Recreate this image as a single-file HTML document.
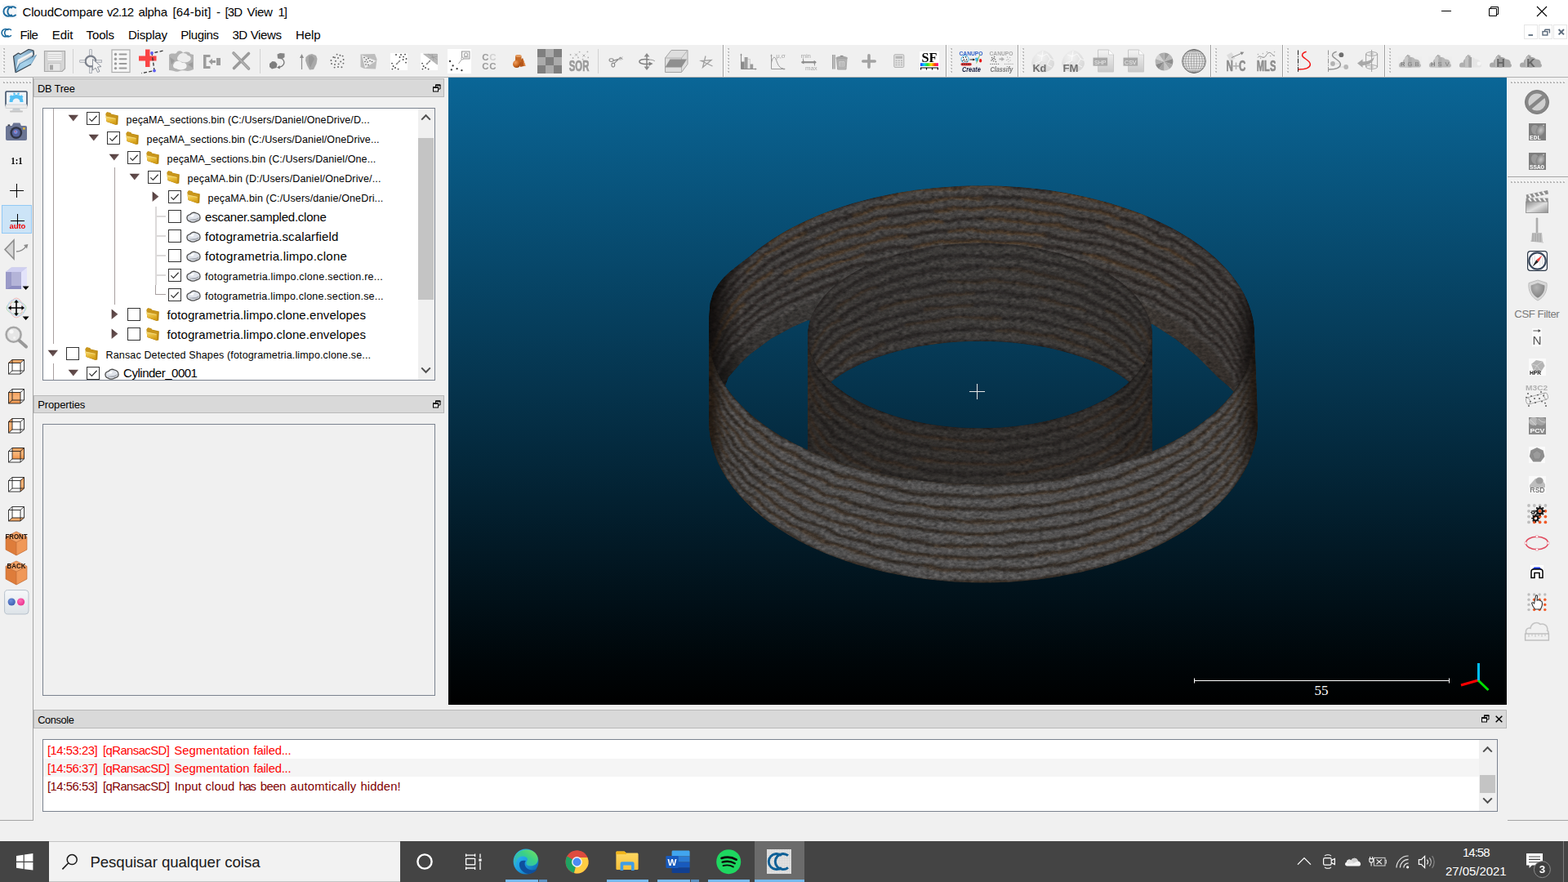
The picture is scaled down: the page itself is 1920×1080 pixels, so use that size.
<!DOCTYPE html>
<html lang="en"><head><meta charset="utf-8"><title>CloudCompare v2.12 alpha [64-bit] - [3D View 1]</title>
<style>
*{box-sizing:border-box;margin:0;padding:0}
html,body{width:1920px;height:1080px;overflow:hidden;background:#f0f0f0;font-family:"Liberation Sans",sans-serif;color:#000}
.t{position:absolute;white-space:pre;line-height:normal}
.a{position:absolute}
.w{position:absolute;left:0;top:0;width:0;height:0}
svg{position:absolute;overflow:visible}
</style></head>
<body>
<!-- sec_chrome -->
<div class="a" style="left:0;top:0;width:1920px;height:55px;background:#fff"></div>
<div class="w"><span class="t" style="left:27.50px;top:6.42px;font-size:15px;letter-spacing:-0.17px;">CloudCompare</span> <span class="t" style="left:131.00px;top:6.42px;font-size:15px;letter-spacing:-0.92px;">v2.12</span> <span class="t" style="left:169.50px;top:6.42px;font-size:15px;letter-spacing:-0.30px;">alpha</span> <span class="t" style="left:211.50px;top:6.42px;font-size:15px;letter-spacing:0.16px;">[64-bit]</span> <span class="t" style="left:265.00px;top:6.42px;font-size:15px;">-</span> <span class="t" style="left:275.60px;top:6.42px;font-size:15px;letter-spacing:-0.97px;">[3D</span> <span class="t" style="left:302.50px;top:6.42px;font-size:15px;letter-spacing:-0.34px;">View</span> <span class="t" style="left:340.60px;top:6.42px;font-size:15px;letter-spacing:-1.20px;">1]</span></div>
<div class="t" style="left:24.40px;top:34.42px;font-size:15px;letter-spacing:-0.55px;">File</div>
<div class="t" style="left:63.75px;top:34.42px;font-size:15px;letter-spacing:-0.06px;">Edit</div>
<div class="t" style="left:105.60px;top:34.42px;font-size:15px;letter-spacing:-0.15px;">Tools</div>
<div class="t" style="left:156.90px;top:34.42px;font-size:15px;letter-spacing:-0.18px;">Display</div>
<div class="t" style="left:221.25px;top:34.42px;font-size:15px;letter-spacing:-0.41px;">Plugins</div>
<div class="t" style="left:284.40px;top:34.42px;font-size:15px;letter-spacing:-0.36px;">3D Views</div>
<div class="t" style="left:362.00px;top:34.42px;font-size:15px;letter-spacing:-0.12px;">Help</div>
<div class="a" style="left:0;top:94px;width:1920px;height:1px;background:#b0b0b0"></div>
<!-- sec_toolbar -->
<svg width="0" height="0"><defs>
<linearGradient id="tfb" x1="0" y1="1" x2="1" y2="0"><stop offset="0" stop-color="#8fc4e4"/><stop offset="0.5" stop-color="#a8d2ea"/><stop offset="1" stop-color="#86b8d8"/></linearGradient>
<linearGradient id="tfk" x1="0" y1="0" x2="1" y2="0"><stop offset="0" stop-color="#7ea9c6"/><stop offset="0.4" stop-color="#a9cde4"/><stop offset="1" stop-color="#6f97b4"/></linearGradient>
<linearGradient id="tgr" x1="0" y1="0" x2="0" y2="1"><stop offset="0" stop-color="#f4f4f4"/><stop offset="1" stop-color="#c9c9c9"/></linearGradient>
<linearGradient id="tgd" x1="0" y1="0" x2="1" y2="0"><stop offset="0" stop-color="#8c8c8c"/><stop offset="0.5" stop-color="#c8c8c8"/><stop offset="1" stop-color="#9a9a9a"/></linearGradient>
<linearGradient id="trb" x1="0" y1="0" x2="1" y2="0"><stop offset="0" stop-color="#1030ff"/><stop offset="0.2" stop-color="#00d0ff"/><stop offset="0.4" stop-color="#20e020"/><stop offset="0.6" stop-color="#ffe000"/><stop offset="0.8" stop-color="#ff4000"/><stop offset="1" stop-color="#ff00a0"/></linearGradient>
<radialGradient id="tor" cx="0.35" cy="0.3" r="0.8"><stop offset="0" stop-color="#f0a060"/><stop offset="0.6" stop-color="#c8641e"/><stop offset="1" stop-color="#8a3c0a"/></radialGradient>
<radialGradient id="tkd" cx="0.4" cy="0.3" r="0.8"><stop offset="0" stop-color="#f2f2f2"/><stop offset="1" stop-color="#d4d4d4"/></radialGradient>
</defs></svg>
<svg style="left:3px;top:59px" width="4" height="32" viewBox="0 0 4 32"><rect x="1" y="0" width="2" height="2" fill="#bcbcbc"/><rect x="0" y="1" width="1.4" height="1.4" fill="#fff"/><rect x="1" y="4" width="2" height="2" fill="#bcbcbc"/><rect x="0" y="5" width="1.4" height="1.4" fill="#fff"/><rect x="1" y="8" width="2" height="2" fill="#bcbcbc"/><rect x="0" y="9" width="1.4" height="1.4" fill="#fff"/><rect x="1" y="12" width="2" height="2" fill="#bcbcbc"/><rect x="0" y="13" width="1.4" height="1.4" fill="#fff"/><rect x="1" y="16" width="2" height="2" fill="#bcbcbc"/><rect x="0" y="17" width="1.4" height="1.4" fill="#fff"/><rect x="1" y="20" width="2" height="2" fill="#bcbcbc"/><rect x="0" y="21" width="1.4" height="1.4" fill="#fff"/><rect x="1" y="24" width="2" height="2" fill="#bcbcbc"/><rect x="0" y="25" width="1.4" height="1.4" fill="#fff"/><rect x="1" y="28" width="2" height="2" fill="#bcbcbc"/><rect x="0" y="29" width="1.4" height="1.4" fill="#fff"/></svg>
<div class="a" style="left:89px;top:60px;width:1px;height:30px;background:#d2d2d2"></div>
<div class="a" style="left:318px;top:60px;width:1px;height:30px;background:#d2d2d2"></div>
<div class="a" style="left:732px;top:60px;width:1px;height:30px;background:#d2d2d2"></div>
<div class="a" style="left:885px;top:55px;width:1px;height:39px;background:#a0a0a0"></div><div class="a" style="left:886px;top:55px;width:1px;height:39px;background:#fff"></div>
<svg style="left:890px;top:59px" width="4" height="32" viewBox="0 0 4 32"><rect x="1" y="0" width="2" height="2" fill="#bcbcbc"/><rect x="0" y="1" width="1.4" height="1.4" fill="#fff"/><rect x="1" y="4" width="2" height="2" fill="#bcbcbc"/><rect x="0" y="5" width="1.4" height="1.4" fill="#fff"/><rect x="1" y="8" width="2" height="2" fill="#bcbcbc"/><rect x="0" y="9" width="1.4" height="1.4" fill="#fff"/><rect x="1" y="12" width="2" height="2" fill="#bcbcbc"/><rect x="0" y="13" width="1.4" height="1.4" fill="#fff"/><rect x="1" y="16" width="2" height="2" fill="#bcbcbc"/><rect x="0" y="17" width="1.4" height="1.4" fill="#fff"/><rect x="1" y="20" width="2" height="2" fill="#bcbcbc"/><rect x="0" y="21" width="1.4" height="1.4" fill="#fff"/><rect x="1" y="24" width="2" height="2" fill="#bcbcbc"/><rect x="0" y="25" width="1.4" height="1.4" fill="#fff"/><rect x="1" y="28" width="2" height="2" fill="#bcbcbc"/><rect x="0" y="29" width="1.4" height="1.4" fill="#fff"/></svg>
<div class="a" style="left:1158px;top:55px;width:1px;height:39px;background:#a0a0a0"></div><div class="a" style="left:1159px;top:55px;width:1px;height:39px;background:#fff"></div>
<svg style="left:1163px;top:59px" width="4" height="32" viewBox="0 0 4 32"><rect x="1" y="0" width="2" height="2" fill="#bcbcbc"/><rect x="0" y="1" width="1.4" height="1.4" fill="#fff"/><rect x="1" y="4" width="2" height="2" fill="#bcbcbc"/><rect x="0" y="5" width="1.4" height="1.4" fill="#fff"/><rect x="1" y="8" width="2" height="2" fill="#bcbcbc"/><rect x="0" y="9" width="1.4" height="1.4" fill="#fff"/><rect x="1" y="12" width="2" height="2" fill="#bcbcbc"/><rect x="0" y="13" width="1.4" height="1.4" fill="#fff"/><rect x="1" y="16" width="2" height="2" fill="#bcbcbc"/><rect x="0" y="17" width="1.4" height="1.4" fill="#fff"/><rect x="1" y="20" width="2" height="2" fill="#bcbcbc"/><rect x="0" y="21" width="1.4" height="1.4" fill="#fff"/><rect x="1" y="24" width="2" height="2" fill="#bcbcbc"/><rect x="0" y="25" width="1.4" height="1.4" fill="#fff"/><rect x="1" y="28" width="2" height="2" fill="#bcbcbc"/><rect x="0" y="29" width="1.4" height="1.4" fill="#fff"/></svg>
<div class="a" style="left:1246px;top:55px;width:1px;height:39px;background:#a0a0a0"></div><div class="a" style="left:1247px;top:55px;width:1px;height:39px;background:#fff"></div>
<svg style="left:1251px;top:59px" width="4" height="32" viewBox="0 0 4 32"><rect x="1" y="0" width="2" height="2" fill="#bcbcbc"/><rect x="0" y="1" width="1.4" height="1.4" fill="#fff"/><rect x="1" y="4" width="2" height="2" fill="#bcbcbc"/><rect x="0" y="5" width="1.4" height="1.4" fill="#fff"/><rect x="1" y="8" width="2" height="2" fill="#bcbcbc"/><rect x="0" y="9" width="1.4" height="1.4" fill="#fff"/><rect x="1" y="12" width="2" height="2" fill="#bcbcbc"/><rect x="0" y="13" width="1.4" height="1.4" fill="#fff"/><rect x="1" y="16" width="2" height="2" fill="#bcbcbc"/><rect x="0" y="17" width="1.4" height="1.4" fill="#fff"/><rect x="1" y="20" width="2" height="2" fill="#bcbcbc"/><rect x="0" y="21" width="1.4" height="1.4" fill="#fff"/><rect x="1" y="24" width="2" height="2" fill="#bcbcbc"/><rect x="0" y="25" width="1.4" height="1.4" fill="#fff"/><rect x="1" y="28" width="2" height="2" fill="#bcbcbc"/><rect x="0" y="29" width="1.4" height="1.4" fill="#fff"/></svg>
<div class="a" style="left:1482px;top:55px;width:1px;height:39px;background:#a0a0a0"></div><div class="a" style="left:1483px;top:55px;width:1px;height:39px;background:#fff"></div>
<svg style="left:1487px;top:59px" width="4" height="32" viewBox="0 0 4 32"><rect x="1" y="0" width="2" height="2" fill="#bcbcbc"/><rect x="0" y="1" width="1.4" height="1.4" fill="#fff"/><rect x="1" y="4" width="2" height="2" fill="#bcbcbc"/><rect x="0" y="5" width="1.4" height="1.4" fill="#fff"/><rect x="1" y="8" width="2" height="2" fill="#bcbcbc"/><rect x="0" y="9" width="1.4" height="1.4" fill="#fff"/><rect x="1" y="12" width="2" height="2" fill="#bcbcbc"/><rect x="0" y="13" width="1.4" height="1.4" fill="#fff"/><rect x="1" y="16" width="2" height="2" fill="#bcbcbc"/><rect x="0" y="17" width="1.4" height="1.4" fill="#fff"/><rect x="1" y="20" width="2" height="2" fill="#bcbcbc"/><rect x="0" y="21" width="1.4" height="1.4" fill="#fff"/><rect x="1" y="24" width="2" height="2" fill="#bcbcbc"/><rect x="0" y="25" width="1.4" height="1.4" fill="#fff"/><rect x="1" y="28" width="2" height="2" fill="#bcbcbc"/><rect x="0" y="29" width="1.4" height="1.4" fill="#fff"/></svg>
<div class="a" style="left:1570px;top:55px;width:1px;height:39px;background:#a0a0a0"></div><div class="a" style="left:1571px;top:55px;width:1px;height:39px;background:#fff"></div>
<svg style="left:1575px;top:59px" width="4" height="32" viewBox="0 0 4 32"><rect x="1" y="0" width="2" height="2" fill="#bcbcbc"/><rect x="0" y="1" width="1.4" height="1.4" fill="#fff"/><rect x="1" y="4" width="2" height="2" fill="#bcbcbc"/><rect x="0" y="5" width="1.4" height="1.4" fill="#fff"/><rect x="1" y="8" width="2" height="2" fill="#bcbcbc"/><rect x="0" y="9" width="1.4" height="1.4" fill="#fff"/><rect x="1" y="12" width="2" height="2" fill="#bcbcbc"/><rect x="0" y="13" width="1.4" height="1.4" fill="#fff"/><rect x="1" y="16" width="2" height="2" fill="#bcbcbc"/><rect x="0" y="17" width="1.4" height="1.4" fill="#fff"/><rect x="1" y="20" width="2" height="2" fill="#bcbcbc"/><rect x="0" y="21" width="1.4" height="1.4" fill="#fff"/><rect x="1" y="24" width="2" height="2" fill="#bcbcbc"/><rect x="0" y="25" width="1.4" height="1.4" fill="#fff"/><rect x="1" y="28" width="2" height="2" fill="#bcbcbc"/><rect x="0" y="29" width="1.4" height="1.4" fill="#fff"/></svg>
<div class="a" style="left:1695px;top:55px;width:1px;height:39px;background:#a0a0a0"></div><div class="a" style="left:1696px;top:55px;width:1px;height:39px;background:#fff"></div>
<svg style="left:1700px;top:59px" width="4" height="32" viewBox="0 0 4 32"><rect x="1" y="0" width="2" height="2" fill="#bcbcbc"/><rect x="0" y="1" width="1.4" height="1.4" fill="#fff"/><rect x="1" y="4" width="2" height="2" fill="#bcbcbc"/><rect x="0" y="5" width="1.4" height="1.4" fill="#fff"/><rect x="1" y="8" width="2" height="2" fill="#bcbcbc"/><rect x="0" y="9" width="1.4" height="1.4" fill="#fff"/><rect x="1" y="12" width="2" height="2" fill="#bcbcbc"/><rect x="0" y="13" width="1.4" height="1.4" fill="#fff"/><rect x="1" y="16" width="2" height="2" fill="#bcbcbc"/><rect x="0" y="17" width="1.4" height="1.4" fill="#fff"/><rect x="1" y="20" width="2" height="2" fill="#bcbcbc"/><rect x="0" y="21" width="1.4" height="1.4" fill="#fff"/><rect x="1" y="24" width="2" height="2" fill="#bcbcbc"/><rect x="0" y="25" width="1.4" height="1.4" fill="#fff"/><rect x="1" y="28" width="2" height="2" fill="#bcbcbc"/><rect x="0" y="29" width="1.4" height="1.4" fill="#fff"/></svg>
<svg style="left:15px;top:59px" width="32" height="32" viewBox="0 0 32 32"><path d="M1.5 10 L7.5 6 L10 7.5 L20 1.5 L23 2 L26 3 L26.5 7.5 L24 12 L9.5 19.5 L4 29.5 Z" fill="url(#tfk)" stroke="#39434d" stroke-width="1.2" stroke-linejoin="round"/><path d="M7 14 L24.5 4.5 L25.2 8.5 L8.2 18.5 L5 25 Z" fill="#f4f4f4"/><path d="M7.6 16.4 L25 7 L25.2 8.5 L8.2 18.5 Z" fill="#dcdcdc"/><path d="M4 29.6 L9.5 19 L29.6 8.4 L23 19.6 Z" fill="url(#tfb)" stroke="#5f8db0" stroke-width="0.7" stroke-linejoin="round"/><path d="M4.2 29.8 L23 19.8" stroke="#3d4a55" stroke-width="1.1"/></svg>
<svg style="left:53px;top:61px" width="28" height="28" viewBox="0 0 28 28"><path d="M1.5 1.5 H26.5 V23 L23 26.5 H1.5 Z" fill="#d6d6d6" stroke="#a8a8a8" stroke-width="1.2"/><rect x="5" y="2.5" width="18" height="11" fill="#f1f1f1" stroke="#c4c4c4" stroke-width="0.6"/><path d="M6 5.5H22M6 8H22M6 10.5H22" stroke="#cfcfcf" stroke-width="1"/><rect x="6" y="16.5" width="15" height="9.5" fill="#e6e6e6" stroke="#b8b8b8" stroke-width="0.6"/><rect x="8" y="18.5" width="4" height="6" fill="#a4a4a4"/></svg>
<svg style="left:96px;top:59px" width="30" height="32" viewBox="0 0 30 32"><g fill="none" stroke="#7d828d" stroke-width="3"><circle cx="15" cy="16" r="6.4" stroke-width="2.4"/><path d="M15 1.5V9M15 23V31M1.5 16H8.5M21.5 16H29"/></g><g fill="none" stroke="#fff" stroke-width="1.6"><path d="M15 2V8.4M15 23.6V30.5M2 16H8M22 16H28.5"/></g><path d="M17.5 13.5 L17.5 27 L21 24 L23.6 29.6 L26 28.4 L23.4 23 L28 22.6 Z" fill="#f4f4f4" stroke="#8d929c" stroke-width="1"/></svg>
<svg style="left:136px;top:60px" width="24" height="30" viewBox="0 0 24 30"><rect x="1" y="1" width="22" height="27.5" fill="#f6f6f6" stroke="#adadad" stroke-width="1.2"/><circle cx="5.5" cy="6.5" r="1.7" fill="#9a9a9a"/><rect x="9.5" y="5.5" width="10" height="2" rx="1" fill="#9a9a9a"/><circle cx="5.5" cy="12.2" r="1.7" fill="#9a9a9a"/><rect x="9.5" y="11.2" width="10" height="2" rx="1" fill="#9a9a9a"/><circle cx="5.5" cy="17.9" r="1.7" fill="#9a9a9a"/><rect x="9.5" y="16.9" width="10" height="2" rx="1" fill="#9a9a9a"/><circle cx="5.5" cy="23.6" r="1.7" fill="#9a9a9a"/><rect x="9.5" y="22.6" width="10" height="2" rx="1" fill="#9a9a9a"/></svg>
<svg style="left:169px;top:59px" width="32" height="32" viewBox="0 0 32 32"><path d="M1 9.5 H22.5 V15.5 H1Z M9 1.5 H14.5 V23 H9Z" fill="#fa4444"/><path d="M30.5 3.2 L17 6 L20 27.5 L4 30.6" fill="none" stroke="#333" stroke-width="1.3" stroke-dasharray="4 2.4"/><circle cx="17" cy="6" r="1.9" fill="#5a5af0"/><circle cx="20" cy="27.6" r="1.9" fill="#5a5af0"/></svg>
<svg style="left:206px;top:61px" width="32" height="28" viewBox="0 0 32 28"><path d="M1 6 C5 3 8 6 10 4 C12 0 17 1 18 4 C21 2 26 2 27 5 L31 6 V24 L27 25.5 C22 27 18 24 14 26 C10 28 6 25 1 25 Z" fill="#b3b3b3"/><path d="M12 8 C14 3 22 3 24 7 C28 7 29 12 26 13.5 C24 16 17 16 15 14 C11 14 10 10 12 8Z" fill="#ededed"/><path d="M7 17 C8 13 15 13 17 16 C21 15 24 19 22 22 C20 25 12 25 10 23 C6 23 5 19 7 17Z" fill="#f3f3f3"/><path d="M2 9 L8 13 L4 18Z M24 18 L30 15 L30 22Z" fill="#9d9d9d"/></svg>
<svg style="left:248px;top:66px" width="23" height="19" viewBox="0 0 23 19"><path d="M1 1 H9.5 V4 H4.5 V15 H9.5 V18 H1Z" fill="#9c9c9c"/><path d="M7.5 9.5 L12 5.5 V8 H16 V11 H12 V13.5Z" fill="#9c9c9c"/><rect x="17" y="5" width="5" height="9" fill="#9c9c9c"/></svg>
<svg style="left:283px;top:62px" width="25" height="25" viewBox="0 0 25 25"><path d="M3 3 L21.5 22 M21.5 3.5 L3.5 21.5" stroke="#9a9a9a" stroke-width="3.6" stroke-linecap="round" fill="none"/><path d="M3 3 L21.5 22" stroke="#b4b4b4" stroke-width="1.4" stroke-linecap="round" fill="none"/></svg>
<svg style="left:328px;top:64px" width="24" height="22" viewBox="0 0 24 22"><path d="M11.5 2.5 L15 1 L20.5 1.5 L20.5 6 L17 8.5 L12 7.5 Z" fill="#858585"/><path d="M2 14 L5.5 11 L9 11.5 L11.5 14.5 L10.5 19 L5 20.5 L2 18 Z" fill="#7d7d7d"/><path d="M17.5 8 C22 12 20 17 13 18.5" fill="none" stroke="#777" stroke-width="1.3"/><path d="M11 18.8 L14.5 16 L14.8 20.6Z" fill="#777"/></svg>
<svg style="left:365px;top:64px" width="25" height="23" viewBox="0 0 25 23"><path d="M4.5 21 V4" stroke="#8e8e8e" stroke-width="1.2" fill="none"/><path d="M2 7 L4.5 2 L7 7Z" fill="#8e8e8e"/><path d="M9.5 6 L13 3 L17 2 L22 4 L23.5 8 L22.5 14 L19 21 L14 21.5 L11 16 L9 10 Z" fill="#aaa"/><path d="M13 5 L17 4 L20 8 L17 14 L15 19 L13 13Z" fill="#999"/></svg>
<svg style="left:403px;top:65px" width="21" height="21" viewBox="0 0 21 21"><circle cx="9.6" cy="1.6" r="0.95" fill="#666"/><circle cx="13.4" cy="2.8" r="0.95" fill="#666"/><circle cx="16.6" cy="3.6" r="0.95" fill="#666"/><circle cx="5.2" cy="5" r="0.95" fill="#666"/><circle cx="11" cy="6" r="0.95" fill="#666"/><circle cx="17.6" cy="8" r="0.95" fill="#666"/><circle cx="2.4" cy="9" r="0.95" fill="#666"/><circle cx="8" cy="9.8" r="0.95" fill="#666"/><circle cx="14.2" cy="10.4" r="0.95" fill="#666"/><circle cx="3" cy="13" r="0.95" fill="#666"/><circle cx="7" cy="14" r="0.95" fill="#666"/><circle cx="11.6" cy="13.4" r="0.95" fill="#666"/><circle cx="17.4" cy="12.6" r="0.95" fill="#666"/><circle cx="6.6" cy="17.6" r="0.95" fill="#666"/><circle cx="11" cy="17" r="0.95" fill="#666"/><circle cx="15.4" cy="17.2" r="0.95" fill="#666"/><circle cx="7" cy="5.4" r="0.95" fill="#666"/></svg>
<svg style="left:440px;top:65px" width="24" height="21" viewBox="0 0 24 21"><path d="M1.5 1.5 L19 1 L21.5 7.5 L20 19.5 L6 19 L1.5 17 Z" fill="#bdbdbd"/><path d="M3 2.5 L20.5 9.5 L7 18.5 Z" fill="#ececec"/><circle cx="6" cy="5.5" r="0.8" fill="#555"/><circle cx="8.5" cy="8" r="0.8" fill="#555"/><circle cx="11" cy="6.5" r="0.8" fill="#555"/><circle cx="7" cy="10.5" r="0.8" fill="#555"/><circle cx="10" cy="11" r="0.8" fill="#555"/><circle cx="13" cy="9.5" r="0.8" fill="#555"/><circle cx="15.5" cy="10.5" r="0.8" fill="#555"/><circle cx="8" cy="14" r="0.8" fill="#555"/><circle cx="11" cy="14.5" r="0.8" fill="#555"/></svg>
<svg style="left:478px;top:65px" width="21" height="21" viewBox="0 0 21 21"><rect width="21" height="21" fill="#fff"/><circle cx="7" cy="2" r="0.95" fill="#444"/><circle cx="13" cy="2" r="0.95" fill="#444"/><circle cx="18" cy="1.6" r="0.95" fill="#444"/><circle cx="11.5" cy="5" r="0.95" fill="#444"/><circle cx="16" cy="4.6" r="0.95" fill="#444"/><circle cx="19.5" cy="7" r="0.95" fill="#444"/><circle cx="15.6" cy="8" r="0.95" fill="#444"/><circle cx="19" cy="11.6" r="0.95" fill="#444"/><circle cx="2" cy="12.6" r="0.95" fill="#444"/><circle cx="3.6" cy="16" r="0.95" fill="#444"/><circle cx="6" cy="18" r="0.95" fill="#444"/><circle cx="2.4" cy="19.6" r="0.95" fill="#444"/><circle cx="9.6" cy="19.6" r="0.95" fill="#444"/><path d="M7.5 13.5 L11.5 9.5" stroke="#8a8a8a" stroke-width="1.1"/><path d="M6.6 14.4 L7.2 12 L9 13.8Z M12.4 8.6 L11.8 11 L10 9.2Z" fill="#8a8a8a"/></svg>
<svg style="left:515px;top:65px" width="21" height="21" viewBox="0 0 21 21"><rect width="21" height="21" fill="#fff"/><path d="M3.5 1 H20.5 V14Z" fill="#b9b9b9" stroke="#999" stroke-width="0.5"/><path d="M9 1 L20.5 8 M14 1 L16 9 M20.5 4 L12 6" stroke="#8c8c8c" stroke-width="0.5" fill="none"/><circle cx="2" cy="12.6" r="0.95" fill="#444"/><circle cx="3.6" cy="16" r="0.95" fill="#444"/><circle cx="6" cy="18" r="0.95" fill="#444"/><circle cx="2.4" cy="19.6" r="0.95" fill="#444"/><circle cx="9.6" cy="19.6" r="0.95" fill="#444"/><path d="M7.5 13.5 L11.5 9.5" stroke="#8a8a8a" stroke-width="1.1"/><path d="M6.6 14.4 L7.2 12 L9 13.8Z M12.4 8.6 L11.8 11 L10 9.2Z" fill="#8a8a8a"/></svg>
<svg style="left:548px;top:60px" width="29" height="30" viewBox="0 0 29 30"><rect width="29" height="30" fill="#fff"/><circle cx="3" cy="15" r="1.15" fill="#333"/><circle cx="6.6" cy="20.4" r="1.15" fill="#333"/><circle cx="4.8" cy="25.4" r="1.15" fill="#333"/><circle cx="11.6" cy="24.2" r="1.15" fill="#333"/><circle cx="17.4" cy="26.2" r="1.15" fill="#333"/><path d="M13.5 18 L17.5 12.5" stroke="#9a9a9a" stroke-width="0.9"/><rect x="17.5" y="3" width="9.5" height="9" fill="#f4f4f4" stroke="#8e8e8e" stroke-width="0.9"/><circle cx="22.6" cy="7" r="2.2" fill="none" stroke="#8e8e8e" stroke-width="0.8"/><path d="M20 9.8H25.5" stroke="#8e8e8e" stroke-width="0.8"/><circle cx="18.2" cy="11.6" r="1.4" fill="#fff" stroke="#8e8e8e" stroke-width="0.7"/></svg>
<svg style="left:590px;top:64px" width="20" height="23" viewBox="0 0 20 23"><text x="0.2" y="10.2" font-family="Liberation Sans, sans-serif" font-size="11.5" font-weight="700" fill="#9a9a9a" text-anchor="start" opacity="0.99">C</text><text x="9.2" y="10.2" font-family="Liberation Sans, sans-serif" font-size="11.5" font-weight="700" fill="#d0d0d0" text-anchor="start" opacity="0.99">C</text><text x="0.2" y="20.6" font-family="Liberation Sans, sans-serif" font-size="11.5" font-weight="700" fill="#9a9a9a" text-anchor="start" opacity="0.99">C</text><text x="9.2" y="20.6" font-family="Liberation Sans, sans-serif" font-size="11.5" font-weight="700" fill="#9a9a9a" text-anchor="start" opacity="0.99">C</text></svg>
<svg style="left:627px;top:66px" width="18" height="18" viewBox="0 0 18 18"><path d="M9 9 L13 5 L16.5 14.5 L10 16Z" fill="#b5561a"/><path d="M13 5 L16.5 14.5 L14.5 15 Z" fill="#e08a48"/><path d="M4 3 C4 0.6 11.5 0.6 11.5 3 V10 H4Z" fill="#c56a26"/><ellipse cx="7.75" cy="2.6" rx="3.75" ry="1.5" fill="#e39a5e"/><circle cx="5.6" cy="12.4" r="4.6" fill="url(#tor)"/></svg>
<svg style="left:658px;top:60px" width="30" height="30" viewBox="0 0 30 30"><rect x="0" y="0" width="10" height="10" fill="#7f7f7f"/><rect x="10" y="0" width="10" height="10" fill="#ababab"/><rect x="20" y="0" width="10" height="10" fill="#7f7f7f"/><rect x="0" y="10" width="10" height="10" fill="#ababab"/><rect x="10" y="10" width="10" height="10" fill="#7f7f7f"/><rect x="20" y="10" width="10" height="10" fill="#ababab"/><rect x="0" y="20" width="10" height="10" fill="#7f7f7f"/><rect x="10" y="20" width="10" height="10" fill="#ababab"/><rect x="20" y="20" width="10" height="10" fill="#7f7f7f"/></svg>
<svg style="left:696px;top:61px" width="28" height="28" viewBox="0 0 28 28"><circle cx="2.6" cy="6" r="0.9" fill="#b0b0b0"/><circle cx="13.6" cy="2.6" r="0.9" fill="#b0b0b0"/><circle cx="23.4" cy="2.4" r="0.9" fill="#b0b0b0"/><circle cx="5.6" cy="10" r="0.9" fill="#b0b0b0"/><circle cx="12" cy="9.4" r="0.9" fill="#b0b0b0"/><circle cx="24.2" cy="9.4" r="0.9" fill="#b0b0b0"/><circle cx="17.6" cy="11.6" r="0.9" fill="#b0b0b0"/><path d="M8 4.6 L11 7.6 M11 4.6 L8 7.6 M17.4 5.6 L20.4 8.6 M20.4 5.6 L17.4 8.6" stroke="#a8a8a8" stroke-width="0.9"/><text x="0.8" y="25.6" font-family="Liberation Sans, sans-serif" font-size="19" font-weight="700" fill="#9a9a9a" text-anchor="start" opacity="0.99" stroke="#9a9a9a" stroke-width="0.7" textLength="24.6" lengthAdjust="spacingAndGlyphs">SOR</text></svg>
<svg style="left:745px;top:68px" width="20" height="16" viewBox="0 0 20 16"><g fill="none" stroke="#8a8a8a" stroke-width="1.1"><ellipse cx="3.6" cy="5.6" rx="2.6" ry="1.9"/><ellipse cx="5.8" cy="11.6" rx="1.9" ry="2.5"/><path d="M5.8 6.4 L17 3 M7 9.6 L15 2"/></g><path d="M12 5 L17.5 1.5 M13.5 5.4 L18 4.4" stroke="#b5b5b5" stroke-width="0.8" fill="none"/></svg>
<svg style="left:781px;top:64px" width="23" height="23" viewBox="0 0 23 23"><path d="M11 3 V20" stroke="#8a8a8a" stroke-width="1.6" fill="none"/><path d="M7.6 5.4 L11 1 L14.4 5.4Z M7.6 17.6 L11 22 L14.4 17.6Z" fill="#8a8a8a"/><path d="M14 9 C6 7.5 1 9.5 2 12 C3 14.4 9 15 13.5 14.2" fill="none" stroke="#808080" stroke-width="1.5"/><path d="M13.5 11.4 L18.6 14 L13.5 16.8Z" fill="#808080"/><path d="M14 9 C17 9.2 20 10 20.6 11" fill="none" stroke="#9a9a9a" stroke-width="1.2"/></svg>
<svg style="left:813px;top:60px" width="31" height="30" viewBox="0 0 31 30"><path d="M1.5 11 L9 1.5 H29 V18.5 L21.5 28.5 H1.5Z" fill="#dedede" stroke="#a4a4a4" stroke-width="1"/><path d="M1.5 11 H21.5 L29 1.5 M21.5 11 V28.5" fill="none" stroke="#b4b4b4" stroke-width="1"/><path d="M1.5 22.5 L7.5 12.5 H28 L21.5 22.5 Z" fill="#8f8f8f"/></svg>
<svg style="left:857px;top:67px" width="18" height="18" viewBox="0 0 18 18"><path d="M7 1.5 L3.5 15.5 L14 6.5 L1.5 7.5 L15.5 14" fill="none" stroke="#a0a0a0" stroke-width="1.3"/></svg>
<svg style="left:905px;top:65px" width="23" height="21" viewBox="0 0 23 21"><rect x="3" y="10.5" width="3.6" height="8.5" fill="#8a8a8a"/><rect x="6.6" y="5" width="4" height="14" fill="#9e9e9e"/><rect x="10.6" y="7.5" width="3" height="11.5" fill="#e9e9e9" stroke="#b4b4b4" stroke-width="0.5"/><rect x="13.6" y="13.5" width="3.6" height="5.5" fill="#9a9a9a"/><path d="M2.5 1 V19.5 H21" fill="none" stroke="#8a8a8a" stroke-width="1"/><path d="M1.2 2.6 L2.5 0.4 L3.8 2.6Z M19.6 18.2 L21.8 19.5 L19.6 20.8Z" fill="#8a8a8a"/></svg>
<svg style="left:942px;top:64px" width="24" height="23" viewBox="0 0 24 23"><path d="M2.5 3 V20.5 H19" fill="none" stroke="#9a9a9a" stroke-width="1"/><path d="M1.2 4.6 L2.5 2.2 L3.8 4.6Z M17.6 19.2 L19.8 20.5 L17.6 21.8Z" fill="#9a9a9a"/><path d="M2.5 13 C4 6 6 5 7.5 7.5 C10 12 10.5 19 17 20" fill="none" stroke="#9a9a9a" stroke-width="1"/><text x="8.2" y="7.4" font-family="Liberation Sans, sans-serif" font-size="7.8" font-weight="400" fill="#a6a6a6" text-anchor="start" opacity="0.99">μ,σ</text></svg>
<svg style="left:979px;top:63px" width="24" height="25" viewBox="0 0 24 25"><text x="1.4" y="8.4" font-family="Liberation Sans, sans-serif" font-size="7.8" font-weight="400" fill="#a6a6a6" text-anchor="start" opacity="0.99">min</text><text x="7" y="23.2" font-family="Liberation Sans, sans-serif" font-size="7.8" font-weight="400" fill="#a6a6a6" text-anchor="start" opacity="0.99">max</text><path d="M2.6 13.2 H20" stroke="#8e8e8e" stroke-width="2.2"/><path d="M4.5 8.5 V15 M18.5 11.5 V17.5" stroke="#8e8e8e" stroke-width="0.9"/><path d="M2 13.2 L5.4 11 V15.4Z M21 13.2 L17.6 11 V15.4Z" fill="#8e8e8e"/></svg>
<svg style="left:1018px;top:65px" width="22" height="22" viewBox="0 0 22 22"><rect x="1" y="2" width="3.8" height="17.6" fill="url(#tgd)"/><path d="M6.4 7 H19 L18 20 H7.6Z" fill="#b7b7b7" stroke="#9a9a9a" stroke-width="0.8"/><path d="M5.6 5.6 C8 3.2 17 3.2 19.8 5.6 V7 H5.6Z" fill="#a6a6a6"/><path d="M11 3.6 H14.4" stroke="#8e8e8e" stroke-width="1.4"/><rect x="9" y="9.6" width="7.4" height="7.4" fill="#d9d9d9" stroke="#9a9a9a" stroke-width="0.6"/><path d="M11 10.6 V16.4 M12.8 10.6 V16.4 M14.6 10.6 V16.4" stroke="#9a9a9a" stroke-width="0.8"/></svg>
<svg style="left:1055px;top:66px" width="18" height="18" viewBox="0 0 18 18"><path d="M9 1.8 V16.2 M1.8 9 H16.2" stroke="#a2a2a2" stroke-width="3.6" stroke-linecap="round" fill="none"/></svg>
<svg style="left:1094px;top:66px" width="14" height="18" viewBox="0 0 14 18"><rect x="0.8" y="0.8" width="12" height="15.6" rx="1.2" fill="#e2e2e2" stroke="#b0b0b0" stroke-width="1"/><rect x="2.6" y="2.8" width="8.4" height="3" fill="#b5b5b5"/><rect x="2.6" y="7.6" width="2" height="1.4" fill="#b5b5b5"/><rect x="2.6" y="10.2" width="2" height="1.4" fill="#b5b5b5"/><rect x="2.6" y="12.8" width="2" height="1.4" fill="#b5b5b5"/><rect x="5.8" y="7.6" width="2" height="1.4" fill="#b5b5b5"/><rect x="5.8" y="10.2" width="2" height="1.4" fill="#b5b5b5"/><rect x="5.8" y="12.8" width="2" height="1.4" fill="#b5b5b5"/><rect x="9" y="7.6" width="2" height="1.4" fill="#b5b5b5"/><rect x="9" y="10.2" width="2" height="1.4" fill="#b5b5b5"/><rect x="9" y="12.8" width="2" height="1.4" fill="#b5b5b5"/></svg>
<svg style="left:1126px;top:63px" width="24" height="24" viewBox="0 0 24 24"><rect width="24" height="24" fill="#fff"/><text x="12" y="12.6" font-family="Liberation Serif, serif" font-size="16.5" font-weight="700" fill="#000" text-anchor="middle" opacity="0.99" textLength="19" lengthAdjust="spacingAndGlyphs">SF</text><rect x="1" y="14.2" width="22" height="3.8" fill="url(#trb)"/><path d="M1.6 22.6 V20 H22.4 V22.6 M8.5 20 V22.6 M15.5 20 V22.6" fill="none" stroke="#000" stroke-width="1.2"/></svg>
<svg style="left:1173px;top:60px" width="32" height="30" viewBox="0 0 32 30"><text x="16" y="8.2" font-family="Liberation Sans, sans-serif" font-size="7.2" font-weight="700" fill="#3060c8" text-anchor="middle" opacity="0.99" textLength="29" lengthAdjust="spacingAndGlyphs">CANUPO</text><circle cx="8.6" cy="12.6" r="4.6" fill="#fff" stroke="#3cb4e6" stroke-width="1"/><circle cx="6.6" cy="10.6" r="0.75" fill="#111"/><circle cx="9.6" cy="10" r="0.75" fill="#111"/><circle cx="7.4" cy="13" r="0.75" fill="#111"/><circle cx="10.6" cy="12.8" r="0.75" fill="#111"/><circle cx="8.6" cy="15" r="0.75" fill="#111"/><circle cx="6" cy="14.4" r="0.75" fill="#111"/><circle cx="11" cy="15" r="0.75" fill="#111"/><rect x="3.4" y="17" width="13.4" height="3.4" rx="1.7" fill="#e23838"/><circle cx="5.4" cy="18.7" r="0.65" fill="#111"/><circle cx="7.8" cy="18.7" r="0.65" fill="#111"/><circle cx="10.2" cy="18.7" r="0.65" fill="#111"/><circle cx="12.6" cy="18.7" r="0.65" fill="#111"/><circle cx="14.8" cy="18.7" r="0.65" fill="#111"/><path d="M14.6 13 H19" stroke="#111" stroke-width="0.9"/><path d="M18.4 11.4 L21 13 L18.4 14.6Z" fill="#111"/><path d="M21 11 L24.6 10.4 L25 14.4 L22 15.6Z" fill="#3cb4f0"/><path d="M27 6.6 L22.6 17.6" stroke="#78b848" stroke-width="0.9"/><ellipse cx="27.6" cy="14.2" rx="1.6" ry="2.2" fill="#e81818"/><text x="16.4" y="27.6" font-family="Liberation Sans, sans-serif" font-size="8.6" font-weight="700" fill="#10183c" text-anchor="middle" opacity="0.99" font-style="italic" textLength="23" lengthAdjust="spacingAndGlyphs">Create</text></svg>
<svg style="left:1210px;top:60px" width="32" height="30" viewBox="0 0 32 30"><text x="16" y="8.2" font-family="Liberation Sans, sans-serif" font-size="7.2" font-weight="700" fill="#a8a8a8" text-anchor="middle" opacity="0.99" textLength="29" lengthAdjust="spacingAndGlyphs">CANUPO</text><circle cx="4.6" cy="10.6" r="0.8" fill="#6a6a6a"/><circle cx="7.6" cy="9.6" r="0.8" fill="#6a6a6a"/><circle cx="5.4" cy="12.6" r="0.8" fill="#6a6a6a"/><circle cx="8.6" cy="12.8" r="0.8" fill="#6a6a6a"/><circle cx="6.6" cy="14.8" r="0.8" fill="#6a6a6a"/><circle cx="4" cy="14" r="0.8" fill="#6a6a6a"/><circle cx="9.4" cy="15.6" r="0.8" fill="#6a6a6a"/><circle cx="7" cy="11.6" r="0.8" fill="#6a6a6a"/><circle cx="3" cy="18.4" r="0.65" fill="#6a6a6a"/><circle cx="5.4" cy="18.4" r="0.65" fill="#6a6a6a"/><circle cx="7.8" cy="18.4" r="0.65" fill="#6a6a6a"/><circle cx="10.2" cy="18.4" r="0.65" fill="#6a6a6a"/><circle cx="12.6" cy="18.4" r="0.65" fill="#6a6a6a"/><path d="M13.4 12.4 H17" stroke="#b0b0b0" stroke-width="1.8"/><path d="M16.4 9.8 L20 12.4 L16.4 15Z" fill="#b0b0b0"/><circle cx="23.6" cy="10" r="0.7" fill="#b0b0b0"/><circle cx="26.6" cy="10.6" r="0.7" fill="#b0b0b0"/><circle cx="24.4" cy="12.8" r="0.7" fill="#b0b0b0"/><circle cx="27" cy="14" r="0.7" fill="#b0b0b0"/><circle cx="25" cy="15.6" r="0.7" fill="#b0b0b0"/><circle cx="22.6" cy="13.6" r="0.7" fill="#b0b0b0"/><circle cx="20.6" cy="18.4" r="0.6" fill="#9a9a9a"/><circle cx="23" cy="18.4" r="0.6" fill="#9a9a9a"/><circle cx="25.4" cy="18.4" r="0.6" fill="#9a9a9a"/><circle cx="27.8" cy="18.4" r="0.6" fill="#9a9a9a"/><circle cx="30" cy="18.4" r="0.6" fill="#9a9a9a"/><text x="16.4" y="27.6" font-family="Liberation Sans, sans-serif" font-size="8.6" font-weight="700" fill="#777" text-anchor="middle" opacity="0.99" font-style="italic" textLength="28" lengthAdjust="spacingAndGlyphs">Classify</text></svg>
<svg style="left:1261px;top:60px" width="32" height="30" viewBox="0 0 32 30"><path d="M2 17 C3 9 9 3 16 1.5 C24 3 29.5 10 30 18 C29 24 24 28 16 28.5 C8 28 2.6 24 2 17Z" fill="url(#tkd)"/><path d="M9 7 L15 9 L14 15 L7 17 M15 9 L21 6 L25 12 L21 19 L14 15 M21 19 L27 22 M7 17 L10 24 M16 2 L15 9 M25 12 L29.6 14" fill="none" stroke="#fff" stroke-width="0.8" opacity="0.9"/><path d="M14 15 L21 19 L18 27 M10 24 L14 15" fill="none" stroke="#cfcfcf" stroke-width="0.6"/><text x="3.4" y="28.4" font-family="Liberation Sans, sans-serif" font-size="13.6" font-weight="700" fill="#6e6e6e" text-anchor="start" opacity="0.99" textLength="17" lengthAdjust="spacingAndGlyphs">Kd</text></svg>
<svg style="left:1298px;top:60px" width="32" height="30" viewBox="0 0 32 30"><path d="M2 17 C3 9 9 3 16 1.5 C24 3 29.5 10 30 18 C29 24 24 28 16 28.5 C8 28 2.6 24 2 17Z" fill="url(#tkd)"/><path d="M9 7 L15 9 L14 15 L7 17 M15 9 L21 6 L25 12 L21 19 L14 15 M21 19 L27 22 M7 17 L10 24 M16 2 L15 9 M25 12 L29.6 14" fill="none" stroke="#fff" stroke-width="0.8" opacity="0.9"/><path d="M14 15 L21 19 L18 27 M10 24 L14 15" fill="none" stroke="#cfcfcf" stroke-width="0.6"/><text x="3.4" y="28.4" font-family="Liberation Sans, sans-serif" font-size="13.6" font-weight="700" fill="#6e6e6e" text-anchor="start" opacity="0.99" textLength="19" lengthAdjust="spacingAndGlyphs">FM</text></svg>
<svg style="left:1337.5px;top:60px" width="27" height="30" viewBox="0 0 27 30"><path d="M6.5 1 H19.5 L25.5 7 V28 H6.5Z" fill="url(#tgr)" stroke="#c9c9c9" stroke-width="1"/><path d="M19.5 1 V7 H25.5" fill="#fff" stroke="#c9c9c9" stroke-width="0.8"/><rect x="0.5" y="10.6" width="17.6" height="10" fill="#a9a9a9"/><text x="9.3" y="18.8" font-family="Liberation Sans, sans-serif" font-size="8" font-weight="400" fill="#eee" text-anchor="middle" opacity="0.99" textLength="14.5" lengthAdjust="spacingAndGlyphs">SHP</text></svg>
<svg style="left:1374.5px;top:60px" width="27" height="30" viewBox="0 0 27 30"><path d="M6.5 1 H19.5 L25.5 7 V28 H6.5Z" fill="url(#tgr)" stroke="#c9c9c9" stroke-width="1"/><path d="M19.5 1 V7 H25.5" fill="#fff" stroke="#c9c9c9" stroke-width="0.8"/><rect x="0.5" y="10.6" width="17.6" height="10" fill="#a9a9a9"/><text x="9.3" y="18.8" font-family="Liberation Sans, sans-serif" font-size="8" font-weight="400" fill="#eee" text-anchor="middle" opacity="0.99" textLength="14.5" lengthAdjust="spacingAndGlyphs">CSV</text></svg>
<svg style="left:1413.5px;top:63.5px" width="23" height="23" viewBox="0 0 23 23"><path d="M11.5 11.5 L11.50 0.50 A11 11 0 0 1 17.97 2.60Z" fill="#9c9c9c"/><path d="M11.5 11.5 L17.97 2.60 A11 11 0 0 1 21.96 8.10Z" fill="#b9b9b9"/><path d="M11.5 11.5 L21.96 8.10 A11 11 0 0 1 21.96 14.90Z" fill="#8e8e8e"/><path d="M11.5 11.5 L21.96 14.90 A11 11 0 0 1 17.97 20.40Z" fill="#a9a9a9"/><path d="M11.5 11.5 L17.97 20.40 A11 11 0 0 1 11.50 22.50Z" fill="#c4c4c4"/><path d="M11.5 11.5 L11.50 22.50 A11 11 0 0 1 5.03 20.40Z" fill="#a2a2a2"/><path d="M11.5 11.5 L5.03 20.40 A11 11 0 0 1 1.04 14.90Z" fill="#8a8a8a"/><path d="M11.5 11.5 L1.04 14.90 A11 11 0 0 1 1.04 8.10Z" fill="#b2b2b2"/><path d="M11.5 11.5 L1.04 8.10 A11 11 0 0 1 5.03 2.60Z" fill="#d2d2d2"/><path d="M11.5 11.5 L5.03 2.60 A11 11 0 0 1 11.50 0.50Z" fill="#adadad"/></svg>
<svg style="left:1447px;top:60px" width="30" height="30" viewBox="0 0 30 30"><g fill="none" stroke="#666" stroke-width="0.5"><circle cx="15" cy="15" r="14.4" stroke-width="0.9"/><ellipse cx="15" cy="15" rx="3.4" ry="14.4"/><ellipse cx="15" cy="15" rx="7" ry="14.4"/><ellipse cx="15" cy="15" rx="10.4" ry="14.4"/><ellipse cx="15" cy="15" rx="13" ry="14.4"/><path d="M7.0 3 H23.0"/><path d="M3.8 6 H26.2"/><path d="M1.9 9 H28.1"/><path d="M0.9 12 H29.1"/><path d="M0.6 15 H29.4"/><path d="M0.9 18 H29.1"/><path d="M1.9 21 H28.1"/><path d="M3.8 24 H26.2"/><path d="M7.0 27 H23.0"/><path d="M15 0.6 V29.4"/></g></svg>
<svg style="left:1501px;top:62px" width="26" height="26" viewBox="0 0 26 26"><path d="M1 5.6 L7 2 L11.6 9.6 L5.4 13Z" fill="#dcdcdc"/><path d="M7 8.6 L20.6 2.6" stroke="#8a8a8a" stroke-width="1"/><path d="M17.6 1.6 L22.4 1.8 L19.4 5.4Z" fill="#8a8a8a"/><text x="0.4" y="24.8" font-family="Liberation Sans, sans-serif" font-size="18" font-weight="700" fill="#8c8c8c" text-anchor="start" opacity="0.99" stroke="#8c8c8c" stroke-width="0.6" textLength="8.4" lengthAdjust="spacingAndGlyphs">N</text><text x="8.4" y="24.4" font-family="Liberation Sans, sans-serif" font-size="16" font-weight="700" fill="#b4b4b4" text-anchor="start" opacity="0.99" textLength="8" lengthAdjust="spacingAndGlyphs">+</text><text x="16" y="24.8" font-family="Liberation Sans, sans-serif" font-size="18" font-weight="700" fill="#8c8c8c" text-anchor="start" opacity="0.99" stroke="#8c8c8c" stroke-width="0.6" textLength="8.4" lengthAdjust="spacingAndGlyphs">C</text></svg>
<svg style="left:1538px;top:62px" width="26" height="26" viewBox="0 0 26 26"><path d="M2 8.6 C5 4 8 11 11.6 7 C14 3 16 1 18.6 3.4 C20.4 5 21.6 7 23 6" fill="none" stroke="#8a8a8a" stroke-width="1"/><circle cx="2.4" cy="4.6" r="0.8" fill="#b0b0b0"/><circle cx="8.4" cy="3.6" r="0.8" fill="#b0b0b0"/><circle cx="13.4" cy="1.6" r="0.8" fill="#b0b0b0"/><circle cx="22.6" cy="1.6" r="0.8" fill="#b0b0b0"/><circle cx="17.6" cy="6.6" r="0.8" fill="#b0b0b0"/><circle cx="5.6" cy="9.4" r="0.8" fill="#b0b0b0"/><text x="0.8" y="24.8" font-family="Liberation Sans, sans-serif" font-size="18" font-weight="700" fill="#8c8c8c" text-anchor="start" opacity="0.99" stroke="#8c8c8c" stroke-width="0.6" textLength="23.6" lengthAdjust="spacingAndGlyphs">MLS</text></svg>
<svg style="left:1587px;top:60px" width="20" height="30" viewBox="0 0 20 30"><path d="M2.5 1.5 V29" stroke="#222" stroke-width="1" stroke-dasharray="6 1.4 1.4 1.4" fill="none"/><path d="M12.6 3.2 C8 4.6 6.4 7 8.4 9.6 C11 12.4 17.6 14.6 17.4 19 C17 24 10 25 2.8 25" fill="none" stroke="#f31414" stroke-width="1.5"/></svg>
<svg style="left:1624px;top:60px" width="28" height="30" viewBox="0 0 28 30"><path d="M2.5 1.5 V29" stroke="#8a8a8a" stroke-width="0.9" stroke-dasharray="6 1.4 1.4 1.4" fill="none"/><path d="M12.6 3.2 C8 4.6 6.4 7 8.4 9.6 C11 12.4 17.6 14.6 17.4 19 C17 24 10 25 2.8 25" fill="none" stroke="#949494" stroke-width="1.5"/><path d="M10 7.2 H16 M12 18 H16 M17 22 H22" stroke="#bdbdbd" stroke-width="0.8" stroke-dasharray="1.2 1"/><circle cx="18.4" cy="7.2" r="2.9" fill="#6e6e6e"/><circle cx="8" cy="18" r="2.9" fill="#b2b2b2"/><circle cx="24.2" cy="22" r="2.9" fill="#b8b8b8"/></svg>
<svg style="left:1661px;top:60px" width="28" height="30" viewBox="0 0 28 30"><g fill="none" stroke="#9a9a9a" stroke-width="0.9"><ellipse cx="18.6" cy="6" rx="7" ry="2.4"/><ellipse cx="18.6" cy="22" rx="7" ry="2.4"/><path d="M11.6 6 V22 M25.6 6 V22 M18.6 1 V28"/><path d="M16.4 6 H20.8 M16.4 22 H20.8"/></g><path d="M1 17.6 L7.6 12.4 V15.4 C14 15.6 19 13.6 21.6 9.6 C21 16.6 15 20.2 7.6 20 V22.8Z" fill="#a8a8a8"/></svg>
<svg style="left:1711.5px;top:66.5px" width="29" height="17" viewBox="0 0 29 17"><path d="M1 13 C1 9.6 4.6 9 5.6 10 C5.6 5 9.6 3.6 12 5.6 C13.6 2 19 2 20.6 5.6 C24 4.6 27.6 8 26.6 11 C28.6 12 28.4 15 26 15.4 L2.6 15.4 C1.2 15.2 0.8 14 1 13Z" fill="#a9a9a9"/><path d="M8 3.6 L12.4 1.4 V15.4 H8Z" fill="#bcbcbc"/><path d="M12.4 1.4 L16.4 3.4 V15.4 H12.4Z" fill="#9c9c9c"/><path d="M9 3 L11.6 0.6 L12.6 3.4 M11.6 0.6 L14.6 1.6" stroke="#8a8a8a" stroke-width="0.8" fill="none"/><rect x="0" y="2" width="29" height="15" fill="#e6e6e6" opacity="0.25"/><text x="3" y="13.6" font-family="Liberation Sans, sans-serif" font-size="7.6" font-weight="400" fill="#6a6a6a" text-anchor="start" opacity="0.99">R</text><text x="11.4" y="13.6" font-family="Liberation Sans, sans-serif" font-size="7.6" font-weight="400" fill="#7a7a7a" text-anchor="start" opacity="0.99">G</text><text x="20.6" y="13.6" font-family="Liberation Sans, sans-serif" font-size="7.6" font-weight="400" fill="#7a7a7a" text-anchor="start" opacity="0.99">B</text></svg>
<svg style="left:1748.5px;top:66.5px" width="29" height="17" viewBox="0 0 29 17"><path d="M1 13 C1 9.6 4.6 9 5.6 10 C5.6 5 9.6 3.6 12 5.6 C13.6 2 19 2 20.6 5.6 C24 4.6 27.6 8 26.6 11 C28.6 12 28.4 15 26 15.4 L2.6 15.4 C1.2 15.2 0.8 14 1 13Z" fill="#a9a9a9"/><path d="M8 3.6 L12.4 1.4 V15.4 H8Z" fill="#bcbcbc"/><path d="M12.4 1.4 L16.4 3.4 V15.4 H12.4Z" fill="#9c9c9c"/><path d="M9 3 L11.6 0.6 L12.6 3.4 M11.6 0.6 L14.6 1.6" stroke="#8a8a8a" stroke-width="0.8" fill="none"/><rect x="0" y="2" width="29" height="15" fill="#e6e6e6" opacity="0.25"/><text x="3" y="13.6" font-family="Liberation Sans, sans-serif" font-size="7.6" font-weight="400" fill="#6a6a6a" text-anchor="start" opacity="0.99">H</text><text x="11.4" y="13.6" font-family="Liberation Sans, sans-serif" font-size="7.6" font-weight="400" fill="#7a7a7a" text-anchor="start" opacity="0.99">S</text><text x="20.6" y="13.6" font-family="Liberation Sans, sans-serif" font-size="7.6" font-weight="400" fill="#7a7a7a" text-anchor="start" opacity="0.99">V</text></svg>
<svg style="left:1785.5px;top:66.5px" width="29" height="17" viewBox="0 0 29 17"><g opacity="0.9"><path d="M1 13 C1 9.6 4.6 9 5.6 10 C5.6 5 9.6 3.6 12 5.6 C13.6 2 19 2 20.6 5.6 C24 4.6 27.6 8 26.6 11 C28.6 12 28.4 15 26 15.4 L2.6 15.4 C1.2 15.2 0.8 14 1 13Z" fill="#a9a9a9"/><path d="M8 3.6 L12.4 1.4 V15.4 H8Z" fill="#bcbcbc"/><path d="M12.4 1.4 L16.4 3.4 V15.4 H12.4Z" fill="#9c9c9c"/><path d="M9 3 L11.6 0.6 L12.6 3.4 M11.6 0.6 L14.6 1.6" stroke="#8a8a8a" stroke-width="0.8" fill="none"/></g><rect x="16" y="0" width="13" height="17" fill="#f0f0f0" opacity="0.85"/><circle cx="25" cy="11" r="2.4" fill="#f6f6f6"/></svg>
<svg style="left:1822.5px;top:66.5px" width="29" height="17" viewBox="0 0 29 17"><path d="M1 13 C1 9.6 4.6 9 5.6 10 C5.6 5 9.6 3.6 12 5.6 C13.6 2 19 2 20.6 5.6 C24 4.6 27.6 8 26.6 11 C28.6 12 28.4 15 26 15.4 L2.6 15.4 C1.2 15.2 0.8 14 1 13Z" fill="#a9a9a9"/><path d="M8 3.6 L12.4 1.4 V15.4 H8Z" fill="#bcbcbc"/><path d="M12.4 1.4 L16.4 3.4 V15.4 H12.4Z" fill="#9c9c9c"/><path d="M9 3 L11.6 0.6 L12.6 3.4 M11.6 0.6 L14.6 1.6" stroke="#8a8a8a" stroke-width="0.8" fill="none"/><text x="14.4" y="15" font-family="Liberation Sans, sans-serif" font-size="14.6" font-weight="700" fill="#666" text-anchor="middle" opacity="0.99">H</text></svg>
<svg style="left:1859.5px;top:66.5px" width="29" height="17" viewBox="0 0 29 17"><path d="M1 13 C1 9.6 4.6 9 5.6 10 C5.6 5 9.6 3.6 12 5.6 C13.6 2 19 2 20.6 5.6 C24 4.6 27.6 8 26.6 11 C28.6 12 28.4 15 26 15.4 L2.6 15.4 C1.2 15.2 0.8 14 1 13Z" fill="#a9a9a9"/><path d="M8 3.6 L12.4 1.4 V15.4 H8Z" fill="#bcbcbc"/><path d="M12.4 1.4 L16.4 3.4 V15.4 H12.4Z" fill="#9c9c9c"/><path d="M9 3 L11.6 0.6 L12.6 3.4 M11.6 0.6 L14.6 1.6" stroke="#8a8a8a" stroke-width="0.8" fill="none"/><text x="14.4" y="15" font-family="Liberation Sans, sans-serif" font-size="14.6" font-weight="700" fill="#666" text-anchor="middle" opacity="0.99">K</text></svg>
<svg style="left:1760px;top:0px" width="160" height="30" viewBox="0 0 160 30"><path d="M5 13.5 H17" stroke="#000" stroke-width="1"/><path d="M63.5 10.5 H72.5 V19.5 H63.5Z M65.5 10.5 V8.5 H74.5 V17.5 H72.5" fill="none" stroke="#000" stroke-width="1"/><path d="M122 8 L134 20 M134 8 L122 20" stroke="#000" stroke-width="1.1"/></svg>
<div class="a" style="left:1866px;top:30px;width:17px;height:18px;background:#fff;border:1px solid #e6e6e6"></div>
<div class="a" style="left:1884px;top:30px;width:17px;height:18px;background:#fff;border:1px solid #e6e6e6"></div>
<div class="a" style="left:1902px;top:30px;width:17px;height:18px;background:#fff;border:1px solid #e6e6e6"></div>
<svg style="left:1866px;top:30.5px" width="54" height="18" viewBox="0 0 54 18"><path d="M5.5 12 H11" stroke="#5c6b7c" stroke-width="1.8"/><path d="M25.6 5.2 H31.4 V9.6 M25.6 5.2 V7.4" fill="none" stroke="#5c6b7c" stroke-width="1.4"/><rect x="23" y="7.6" width="5.8" height="4.4" fill="none" stroke="#5c6b7c" stroke-width="1.4"/><path d="M42.6 5 L49 11.4 M49 5 L42.6 11.4" stroke="#5c6b7c" stroke-width="1.9"/></svg>
<svg style="left:0px;top:0px" width="24" height="28" viewBox="0 0 24 28"><rect x="3" y="5.5" width="18" height="17" fill="#eef2f5" opacity="0.6"/><g fill="none" stroke="#1b6a9e" stroke-width="1.9"><path d="M14.68 10.05 A5.90 5.90 0 1 0 14.68 17.95"/><path d="M19.58 10.05 A5.90 5.90 0 1 0 19.58 17.95"/></g></svg>
<svg style="left:0px;top:30px" width="20" height="20" viewBox="0 0 20 20"><g fill="none" stroke="#1b6a9e" stroke-width="1.6"><path d="M10.29 7.06 A4.70 4.70 0 1 0 10.29 13.34"/><path d="M13.89 7.06 A4.70 4.70 0 1 0 13.89 13.34"/></g></svg>
<!-- sec_left -->
<svg width="0" height="0"><defs>
<linearGradient id="lor" x1="0" y1="0" x2="0" y2="1"><stop offset="0" stop-color="#f5a05a"/><stop offset="0.5" stop-color="#f8b47a"/><stop offset="1" stop-color="#f09448"/></linearGradient>
<linearGradient id="lfl" x1="0" y1="0" x2="0" y2="1"><stop offset="0" stop-color="#f6f8fa"/><stop offset="1" stop-color="#dde3e8"/></linearGradient>
<radialGradient id="lbl" cx="0.4" cy="0.35" r="0.7"><stop offset="0" stop-color="#6c90dc"/><stop offset="1" stop-color="#3c5cac"/></radialGradient>
<radialGradient id="lpk" cx="0.4" cy="0.35" r="0.7"><stop offset="0" stop-color="#ff70b8"/><stop offset="1" stop-color="#e8308c"/></radialGradient>
</defs></svg>
<svg style="left:4px;top:99px" width="36" height="4" viewBox="0 0 36 4"><rect x="0" y="1" width="2" height="2" fill="#b4b4b4"/><rect x="1" y="0" width="1.4" height="1.4" fill="#fff"/><rect x="4" y="1" width="2" height="2" fill="#b4b4b4"/><rect x="5" y="0" width="1.4" height="1.4" fill="#fff"/><rect x="8" y="1" width="2" height="2" fill="#b4b4b4"/><rect x="9" y="0" width="1.4" height="1.4" fill="#fff"/><rect x="12" y="1" width="2" height="2" fill="#b4b4b4"/><rect x="13" y="0" width="1.4" height="1.4" fill="#fff"/><rect x="16" y="1" width="2" height="2" fill="#b4b4b4"/><rect x="17" y="0" width="1.4" height="1.4" fill="#fff"/><rect x="20" y="1" width="2" height="2" fill="#b4b4b4"/><rect x="21" y="0" width="1.4" height="1.4" fill="#fff"/><rect x="24" y="1" width="2" height="2" fill="#b4b4b4"/><rect x="25" y="0" width="1.4" height="1.4" fill="#fff"/><rect x="28" y="1" width="2" height="2" fill="#b4b4b4"/><rect x="29" y="0" width="1.4" height="1.4" fill="#fff"/><rect x="32" y="1" width="2" height="2" fill="#b4b4b4"/><rect x="33" y="0" width="1.4" height="1.4" fill="#fff"/></svg>
<svg style="left:6px;top:111px" width="28" height="28" viewBox="0 0 28 28"><rect x="1" y="1" width="26" height="18" rx="1.2" fill="#eef3f8" stroke="#3e5068" stroke-width="1.6"/><path d="M5.5 14 C5.5 8 9 5 14 5 C19 5 22.5 8 22.5 14 H18.5 C18.5 11 16.5 9.4 14 9.4 C11.5 9.4 9.5 11 9.5 14Z" fill="#52c0f4"/><path d="M6.4 8.4 L8.4 6 M11 4.6 L12 2.8 M16 2.8 L17 4.6 M19.6 6 L21.6 8.4" stroke="#52c0f4" stroke-width="2.4"/><rect x="1" y="17" width="26" height="4.4" fill="#ececec" stroke="#c0c4c8" stroke-width="0.6"/><path d="M10 21.4 H18 L19 24.6 H9Z" fill="#c8cdd2"/><rect x="6" y="24.4" width="16" height="2" rx="1" fill="#c4c4c4"/></svg>
<svg style="left:6px;top:149px" width="28" height="24" viewBox="0 0 28 24"><path d="M3 5 H8.6 L10.4 1.4 H18.4 L20 5 H25 C26.4 5 27 5.8 27 7 V21 C27 22.2 26.4 23 25 23 H3 C1.6 23 1 22.2 1 21 V7 C1 5.8 1.6 5 3 5Z" fill="#6b7594"/><rect x="3.6" y="3.4" width="2.6" height="2" fill="#3a3f4c"/><circle cx="13.8" cy="13.6" r="7.4" fill="#2f3444"/><circle cx="13.8" cy="13.6" r="5" fill="#56639c"/><circle cx="13.2" cy="12.6" r="2.4" fill="#7e8edc"/><circle cx="12.8" cy="12" r="0.8" fill="#e05050"/><circle cx="23.4" cy="8.4" r="1.3" fill="#f4c430"/></svg>
<svg style="left:10px;top:188px" width="22" height="16" viewBox="0 0 22 16"><text x="10.5" y="12.8" font-family="Liberation Serif, serif" font-size="13.5" font-weight="700" fill="#000" text-anchor="middle" opacity="0.99" textLength="14.5" lengthAdjust="spacingAndGlyphs">1:1</text></svg>
<svg style="left:11px;top:224px" width="19" height="19" viewBox="0 0 19 19"><path d="M1 9.5 H18 M9.5 1 V18" stroke="#000" stroke-width="1"/></svg>
<div class="a" style="left:2px;top:251px;width:37px;height:35px;background:#cce4f7;border:1px solid #92c9f5"></div>
<svg style="left:12px;top:261px" width="20" height="22" viewBox="0 0 20 22"><path d="M1 9.5 H18 M9.5 1 V18" stroke="#000" stroke-width="1"/><text x="9.4" y="18.6" font-family="Liberation Sans, sans-serif" font-size="9.6" font-weight="700" fill="#f40000" text-anchor="middle" opacity="0.99" textLength="20" lengthAdjust="spacingAndGlyphs">auto</text></svg>
<svg style="left:4px;top:291px" width="34" height="28" viewBox="0 0 34 28"><path d="M2 14.6 L13 3 V26Z" fill="#d6d6d6" stroke="#8e8e8e" stroke-width="1.6"/><path d="M16 17 C21 17 25 14.6 28 10.6" fill="none" stroke="#8a8a8a" stroke-width="1.3"/><path d="M25 9 L30.4 8 L29 13.6Z" fill="#8a8a8a"/></svg>
<svg style="left:6px;top:326px" width="30" height="30" viewBox="0 0 30 30"><path d="M1 7 L8 1.6 H27 V22.6 L20 28 H1Z" fill="#b9b9de"/><path d="M1 7 L8 1.6 H27 L20 7Z" fill="#cfcff0"/><path d="M20 7 L27 1.6 V22.6 L20 28Z" fill="#e3e3fa"/><path d="M1 7 H8 V24 L1 28Z" fill="#9a9ac8"/><path d="M1 28 L8 24 H20 V28Z" fill="#8c8cc0"/><path d="M8 7 H20 V24 H8Z" fill="#b4b4d8"/><path d="M21.6 24.6 H29.6 L25.6 29Z" fill="#000"/></svg>
<svg style="left:6px;top:363px" width="30" height="30" viewBox="0 0 30 30"><g fill="none" stroke-width="0.9" opacity="0.75"><ellipse cx="14" cy="14" rx="12" ry="7.6" stroke="#9ad09a"/><ellipse cx="14" cy="14" rx="7.6" ry="12" stroke="#f0a0a0"/><ellipse cx="14" cy="14" rx="11" ry="9" transform="rotate(40 14 14)" stroke="#a0c4f0"/></g><path d="M14 6.4 V21.6 M6.4 14 H21.6" stroke="#000" stroke-width="1.6"/><path d="M11.2 7.6 L14 4 L16.8 7.6Z M11.2 20.4 L14 24 L16.8 20.4Z M7.6 11.2 L4 14 L7.6 16.8Z M20.4 11.2 L24 14 L20.4 16.8Z" fill="#000"/><path d="M21.6 24.6 H29.6 L25.6 29Z" fill="#000"/></svg>
<svg style="left:4px;top:398px" width="32" height="30" viewBox="0 0 32 30"><circle cx="12.6" cy="11.8" r="9" fill="#e6e6e6" stroke="#a6a6a6" stroke-width="2.6"/><circle cx="10" cy="8" r="2.6" fill="#f8f8f8"/><circle cx="13.6" cy="15.6" r="1.6" fill="#f4f4f4"/><path d="M19.6 19 L28 26.6" stroke="#999" stroke-width="4" stroke-linecap="round"/></svg>
<svg style="left:10px;top:440px" width="20" height="18.5" viewBox="0 0 20 18.5"><path d="M0 4 L5 0 H20 V14 L15 18 H0Z" fill="#fff"/><path d="M0 4 L5 0 H20 L15 4Z" fill="url(#lor)"/><g fill="none" stroke="#222" stroke-width="0.9"><path d="M0.5 4.5 H15 V18 H0.5Z"/><path d="M5 0.5 H19.5 V14 H5Z"/><path d="M0.5 4.5 L5 0.5 M15 4.5 L19.5 0.5 M15 18 L19.5 14 M0.5 18 L5 14"/></g></svg>
<svg style="left:10px;top:476px" width="20" height="18.5" viewBox="0 0 20 18.5"><path d="M0 4 L5 0 H20 V14 L15 18 H0Z" fill="#fff"/><path d="M0 4 H15 V18 H0Z" fill="url(#lor)"/><g fill="none" stroke="#222" stroke-width="0.9"><path d="M0.5 4.5 H15 V18 H0.5Z"/><path d="M5 0.5 H19.5 V14 H5Z"/><path d="M0.5 4.5 L5 0.5 M15 4.5 L19.5 0.5 M15 18 L19.5 14 M0.5 18 L5 14"/></g></svg>
<svg style="left:10px;top:512px" width="20" height="18.5" viewBox="0 0 20 18.5"><path d="M0 4 L5 0 H20 V14 L15 18 H0Z" fill="#fff"/><path d="M0 4 L5 0 V14 L0 18Z" fill="url(#lor)"/><g fill="none" stroke="#222" stroke-width="0.9"><path d="M0.5 4.5 H15 V18 H0.5Z"/><path d="M5 0.5 H19.5 V14 H5Z"/><path d="M0.5 4.5 L5 0.5 M15 4.5 L19.5 0.5 M15 18 L19.5 14 M0.5 18 L5 14"/></g></svg>
<svg style="left:10px;top:548px" width="20" height="18.5" viewBox="0 0 20 18.5"><path d="M0 4 L5 0 H20 V14 L15 18 H0Z" fill="#fff"/><path d="M5 0 H20 V14 H5Z" fill="url(#lor)"/><g fill="none" stroke="#222" stroke-width="0.9"><path d="M0.5 4.5 H15 V18 H0.5Z"/><path d="M5 0.5 H19.5 V14 H5Z"/><path d="M0.5 4.5 L5 0.5 M15 4.5 L19.5 0.5 M15 18 L19.5 14 M0.5 18 L5 14"/></g></svg>
<svg style="left:10px;top:584px" width="20" height="18.5" viewBox="0 0 20 18.5"><path d="M0 4 L5 0 H20 V14 L15 18 H0Z" fill="#fff"/><path d="M15 4 L20 0 V14 L15 18Z" fill="url(#lor)"/><g fill="none" stroke="#222" stroke-width="0.9"><path d="M0.5 4.5 H15 V18 H0.5Z"/><path d="M5 0.5 H19.5 V14 H5Z"/><path d="M0.5 4.5 L5 0.5 M15 4.5 L19.5 0.5 M15 18 L19.5 14 M0.5 18 L5 14"/></g></svg>
<svg style="left:10px;top:620px" width="20" height="18.5" viewBox="0 0 20 18.5"><path d="M0 4 L5 0 H20 V14 L15 18 H0Z" fill="#fff"/><path d="M0 18 L5 14 H20 L15 18Z" fill="url(#lor)"/><g fill="none" stroke="#222" stroke-width="0.9"><path d="M0.5 4.5 H15 V18 H0.5Z"/><path d="M5 0.5 H19.5 V14 H5Z"/><path d="M0.5 4.5 L5 0.5 M15 4.5 L19.5 0.5 M15 18 L19.5 14 M0.5 18 L5 14"/></g></svg>
<svg style="left:6px;top:649.5px" width="28" height="31" viewBox="0 0 28 31"><path d="M14 1 L27 7.4 V23 L14 30 L1 23 V7.4Z" fill="#e88a48"/><path d="M14 1 L27 7.4 L14 14 L1 7.4Z" fill="#f4a468"/><path d="M14 14 L27 7.4 V23 L14 30Z" fill="#f09858"/><path d="M14 14 V30 L1 23 V7.4Z" fill="#de7c3a"/><path d="M14 1 L27 7.4 V23 L14 30 L1 23 V7.4Z M14 14 V30 M1 7.4 L14 14 L27 7.4" fill="none" stroke="#b86a3a" stroke-width="0.6"/><text x="14" y="10.4" font-family="Liberation Sans, sans-serif" font-size="8.4" font-weight="700" fill="#1a0e08" text-anchor="middle" opacity="0.99" textLength="27" lengthAdjust="spacingAndGlyphs">FRONT</text></svg>
<svg style="left:6px;top:685.5px" width="28" height="31" viewBox="0 0 28 31"><path d="M14 1 L27 7.4 V23 L14 30 L1 23 V7.4Z" fill="#e88a48"/><path d="M14 1 L27 7.4 L14 14 L1 7.4Z" fill="#f4a468"/><path d="M14 14 L27 7.4 V23 L14 30Z" fill="#f09858"/><path d="M14 14 V30 L1 23 V7.4Z" fill="#de7c3a"/><path d="M14 1 L27 7.4 V23 L14 30 L1 23 V7.4Z M14 14 V30 M1 7.4 L14 14 L27 7.4" fill="none" stroke="#b86a3a" stroke-width="0.6"/><text x="14" y="10.4" font-family="Liberation Sans, sans-serif" font-size="8.4" font-weight="700" fill="#1a0e08" text-anchor="middle" opacity="0.99" textLength="23" lengthAdjust="spacingAndGlyphs">BACK</text></svg>
<svg style="left:5px;top:721.5px" width="31" height="31" viewBox="0 0 31 31"><rect x="0.6" y="0.6" width="29.4" height="29.4" rx="4" fill="url(#lfl)" stroke="#b8c2cc" stroke-width="1"/><circle cx="9.2" cy="15" r="4.6" fill="url(#lbl)"/><circle cx="20.6" cy="15" r="4.6" fill="url(#lpk)"/></svg>
<!-- sec_tree -->
<svg width="0" height="0"><defs><linearGradient id="gfold" x1="0" y1="0" x2="0.3" y2="1"><stop offset="0" stop-color="#f6d873"/><stop offset="0.5" stop-color="#e9bd3c"/><stop offset="1" stop-color="#d29c16"/></linearGradient><linearGradient id="garr" x1="0" y1="0" x2="1" y2="1"><stop offset="0" stop-color="#4a3636"/><stop offset="1" stop-color="#7a6262"/></linearGradient></defs></svg>
<div class="a" style="left:40px;top:95px;width:1px;height:910px;background:#a5a5a5"></div>
<div class="a" style="left:0;top:1004px;width:41px;height:1px;background:#a5a5a5"></div>
<div class="a" style="left:41px;top:96px;width:503px;height:23px;background:#d9d9d9;border:1px solid #b9b9b9"></div>
<div class="t" style="left:46.00px;top:101.12px;font-size:12.8px;letter-spacing:-0.18px;">DB Tree</div>
<svg style="left:530px;top:103px" width="10" height="10" viewBox="0 0 10 10"><path d="M3.5 3V1h5.5v5H7" fill="none" stroke="#000" stroke-width="1"/><rect x="3" y="0.5" width="6.5" height="1.6" fill="#000"/><rect x="0.5" y="4" width="6" height="5" fill="#e8e8e8" stroke="#000" stroke-width="1"/><rect x="0" y="3.2" width="7" height="1.8" fill="#000"/></svg>
<div class="a" style="left:52px;top:132px;width:481px;height:334px;background:#fff;border:1px solid #7a828f"></div>
<div class="a" style="left:512px;top:133px;width:20px;height:332px;background:#f0f0f0"></div>
<div class="a" style="left:512px;top:169px;width:19px;height:198px;background:#c4c4c4"></div>
<svg style="left:515px;top:139px" width="13" height="9" viewBox="0 0 13 9"><path d="M1.2 7.6 L6.5 2.2 L11.8 7.6" fill="none" stroke="#505050" stroke-width="2"/></svg>
<svg style="left:515px;top:449px" width="13" height="9" viewBox="0 0 13 9"><path d="M1.2 1.4 L6.5 6.8 L11.8 1.4" fill="none" stroke="#505050" stroke-width="2"/></svg>
<div class="a" style="left:65px;top:133px;width:1px;height:288px;background:#a8a0a0"></div>
<div class="a" style="left:65px;top:445px;width:1px;height:20px;background:#a8a0a0"></div>
<div class="a" style="left:140px;top:205px;width:1px;height:168px;background:#a8a0a0"></div>
<div class="a" style="left:190px;top:253px;width:2px;height:96px;background:#dcdada"></div>
<div class="a" style="left:190px;top:349px;width:1px;height:12px;background:#a8a0a0"></div>
<div class="a" style="left:190px;top:360px;width:13px;height:1px;background:#a8a0a0"></div>
<div class="a" style="left:191px;top:264px;width:12px;height:2px;background:#dcdada"></div>
<div class="a" style="left:191px;top:288px;width:12px;height:2px;background:#dcdada"></div>
<div class="a" style="left:191px;top:312px;width:12px;height:2px;background:#dcdada"></div>
<div class="a" style="left:191px;top:336px;width:12px;height:2px;background:#dcdada"></div>
<div class="a" style="left:53px;top:133px;width:459px;height:332px;overflow:hidden"><div class="a" style="left:-53px;top:-133px;width:600px;height:600px">
<svg style="left:83px;top:140px" width="14" height="9" viewBox="0 0 14 9"><path d="M0.6 0.8 H13 L6.8 8.6 Z" fill="url(#garr)"/></svg>
<div class="a" style="left:106px;top:137px;width:16px;height:16px;background:#fff;border:1px solid #333"></div><svg style="left:106px;top:137px" width="16" height="16" viewBox="0 0 16 16"><path d="M3.4 8.4 L6.4 11.4 L12.6 4.8" fill="none" stroke="#333" stroke-width="1.25"/></svg>
<svg style="left:128px;top:135.5px" width="19" height="18" viewBox="0 0 19 18"><path d="M1.5 3.2 L3 1.2 L7.2 2 L8 3.6 L16.8 5.6 L16.2 16.4 L13.6 17 L2.6 13 Z" fill="#b8860f"/><path d="M1.6 3.4 L3.1 1.4 L7 2.3 L7.8 4 L15.4 5.9 L14.2 16.5 L2.6 12.8 Z" fill="#c9961b"/><path d="M1 6.6 L13.6 9.2 L14.4 16.6 L2.9 12.9 Z" fill="url(#gfold)"/><path d="M1.2 6.8 L13.5 9.4" stroke="#f8e28c" stroke-width="0.8" fill="none"/></svg>
<div class="t" style="left:154.60px;top:139.99px;font-size:12.5px;letter-spacing:0.10px;">peçaMA_sections.bin (C:/Users/Daniel/OneDrive/D...</div>
<svg style="left:108px;top:164px" width="14" height="9" viewBox="0 0 14 9"><path d="M0.6 0.8 H13 L6.8 8.6 Z" fill="url(#garr)"/></svg>
<div class="a" style="left:131px;top:161px;width:16px;height:16px;background:#fff;border:1px solid #333"></div><svg style="left:131px;top:161px" width="16" height="16" viewBox="0 0 16 16"><path d="M3.4 8.4 L6.4 11.4 L12.6 4.8" fill="none" stroke="#333" stroke-width="1.25"/></svg>
<svg style="left:153px;top:159.5px" width="19" height="18" viewBox="0 0 19 18"><path d="M1.5 3.2 L3 1.2 L7.2 2 L8 3.6 L16.8 5.6 L16.2 16.4 L13.6 17 L2.6 13 Z" fill="#b8860f"/><path d="M1.6 3.4 L3.1 1.4 L7 2.3 L7.8 4 L15.4 5.9 L14.2 16.5 L2.6 12.8 Z" fill="#c9961b"/><path d="M1 6.6 L13.6 9.2 L14.4 16.6 L2.9 12.9 Z" fill="url(#gfold)"/><path d="M1.2 6.8 L13.5 9.4" stroke="#f8e28c" stroke-width="0.8" fill="none"/></svg>
<div class="t" style="left:179.60px;top:163.99px;font-size:12.5px;letter-spacing:0.09px;">peçaMA_sections.bin (C:/Users/Daniel/OneDrive...</div>
<svg style="left:133px;top:188px" width="14" height="9" viewBox="0 0 14 9"><path d="M0.6 0.8 H13 L6.8 8.6 Z" fill="url(#garr)"/></svg>
<div class="a" style="left:156px;top:185px;width:16px;height:16px;background:#fff;border:1px solid #333"></div><svg style="left:156px;top:185px" width="16" height="16" viewBox="0 0 16 16"><path d="M3.4 8.4 L6.4 11.4 L12.6 4.8" fill="none" stroke="#333" stroke-width="1.25"/></svg>
<svg style="left:178px;top:183.5px" width="19" height="18" viewBox="0 0 19 18"><path d="M1.5 3.2 L3 1.2 L7.2 2 L8 3.6 L16.8 5.6 L16.2 16.4 L13.6 17 L2.6 13 Z" fill="#b8860f"/><path d="M1.6 3.4 L3.1 1.4 L7 2.3 L7.8 4 L15.4 5.9 L14.2 16.5 L2.6 12.8 Z" fill="#c9961b"/><path d="M1 6.6 L13.6 9.2 L14.4 16.6 L2.9 12.9 Z" fill="url(#gfold)"/><path d="M1.2 6.8 L13.5 9.4" stroke="#f8e28c" stroke-width="0.8" fill="none"/></svg>
<div class="t" style="left:204.60px;top:187.99px;font-size:12.5px;letter-spacing:0.10px;">peçaMA_sections.bin (C:/Users/Daniel/One...</div>
<svg style="left:158px;top:212px" width="14" height="9" viewBox="0 0 14 9"><path d="M0.6 0.8 H13 L6.8 8.6 Z" fill="url(#garr)"/></svg>
<div class="a" style="left:181px;top:209px;width:16px;height:16px;background:#fff;border:1px solid #333"></div><svg style="left:181px;top:209px" width="16" height="16" viewBox="0 0 16 16"><path d="M3.4 8.4 L6.4 11.4 L12.6 4.8" fill="none" stroke="#333" stroke-width="1.25"/></svg>
<svg style="left:203px;top:207.5px" width="19" height="18" viewBox="0 0 19 18"><path d="M1.5 3.2 L3 1.2 L7.2 2 L8 3.6 L16.8 5.6 L16.2 16.4 L13.6 17 L2.6 13 Z" fill="#b8860f"/><path d="M1.6 3.4 L3.1 1.4 L7 2.3 L7.8 4 L15.4 5.9 L14.2 16.5 L2.6 12.8 Z" fill="#c9961b"/><path d="M1 6.6 L13.6 9.2 L14.4 16.6 L2.9 12.9 Z" fill="url(#gfold)"/><path d="M1.2 6.8 L13.5 9.4" stroke="#f8e28c" stroke-width="0.8" fill="none"/></svg>
<div class="t" style="left:229.60px;top:211.99px;font-size:12.5px;letter-spacing:0.14px;">peçaMA.bin (D:/Users/Daniel/OneDrive/...</div>
<svg style="left:185.5px;top:234px" width="9" height="14" viewBox="0 0 9 14"><path d="M0.6 0.6 V13 L8.4 6.8 Z" fill="url(#garr)"/></svg>
<div class="a" style="left:206px;top:233px;width:16px;height:16px;background:#fff;border:1px solid #333"></div><svg style="left:206px;top:233px" width="16" height="16" viewBox="0 0 16 16"><path d="M3.4 8.4 L6.4 11.4 L12.6 4.8" fill="none" stroke="#333" stroke-width="1.25"/></svg>
<svg style="left:228px;top:231.5px" width="19" height="18" viewBox="0 0 19 18"><path d="M1.5 3.2 L3 1.2 L7.2 2 L8 3.6 L16.8 5.6 L16.2 16.4 L13.6 17 L2.6 13 Z" fill="#b8860f"/><path d="M1.6 3.4 L3.1 1.4 L7 2.3 L7.8 4 L15.4 5.9 L14.2 16.5 L2.6 12.8 Z" fill="#c9961b"/><path d="M1 6.6 L13.6 9.2 L14.4 16.6 L2.9 12.9 Z" fill="url(#gfold)"/><path d="M1.2 6.8 L13.5 9.4" stroke="#f8e28c" stroke-width="0.8" fill="none"/></svg>
<div class="t" style="left:254.60px;top:235.99px;font-size:12.5px;letter-spacing:0.14px;">peçaMA.bin (C:/Users/danie/OneDri...</div>
<div class="a" style="left:206px;top:257px;width:16px;height:16px;background:#fff;border:1px solid #333"></div>
<svg style="left:227.5px;top:258.5px" width="18" height="14" viewBox="0 0 18 14"><path d="M1 7.4 C0.6 5 3.4 3.8 5 3.6 C6.2 1.4 9.6 0.6 11.8 1.8 C14.6 2.2 17.4 4.4 17 7.4 C17.2 10.2 14.4 11.6 12.2 12 C9.8 13.6 6 13.4 4.6 12 C2.4 11.6 0.8 9.6 1 7.4 Z" fill="#dfe3ea" stroke="#4d4d4d" stroke-width="1.3"/><path d="M3 9.2 C5 11.2 11 11.6 14.6 9.4 C15.6 8.6 15.8 7.6 15.4 7 C13 9.4 6 9.8 3 9.2Z" fill="#a9adb5"/><path d="M4 6.2 C5.4 4.2 8 3.4 10.6 4 C9 4.6 8.4 5.8 8.6 6.8 C7 6.2 5.4 6 4 6.2Z" fill="#fff"/></svg>
<div class="t" style="left:251.10px;top:257.23px;font-size:15px;letter-spacing:-0.24px;">escaner.sampled.clone</div>
<div class="a" style="left:206px;top:281px;width:16px;height:16px;background:#fff;border:1px solid #333"></div>
<svg style="left:227.5px;top:282.5px" width="18" height="14" viewBox="0 0 18 14"><path d="M1 7.4 C0.6 5 3.4 3.8 5 3.6 C6.2 1.4 9.6 0.6 11.8 1.8 C14.6 2.2 17.4 4.4 17 7.4 C17.2 10.2 14.4 11.6 12.2 12 C9.8 13.6 6 13.4 4.6 12 C2.4 11.6 0.8 9.6 1 7.4 Z" fill="#dfe3ea" stroke="#4d4d4d" stroke-width="1.3"/><path d="M3 9.2 C5 11.2 11 11.6 14.6 9.4 C15.6 8.6 15.8 7.6 15.4 7 C13 9.4 6 9.8 3 9.2Z" fill="#a9adb5"/><path d="M4 6.2 C5.4 4.2 8 3.4 10.6 4 C9 4.6 8.4 5.8 8.6 6.8 C7 6.2 5.4 6 4 6.2Z" fill="#fff"/></svg>
<div class="t" style="left:251.10px;top:281.23px;font-size:15px;letter-spacing:0.13px;">fotogrametria.scalarfield</div>
<div class="a" style="left:206px;top:305px;width:16px;height:16px;background:#fff;border:1px solid #333"></div>
<svg style="left:227.5px;top:306.5px" width="18" height="14" viewBox="0 0 18 14"><path d="M1 7.4 C0.6 5 3.4 3.8 5 3.6 C6.2 1.4 9.6 0.6 11.8 1.8 C14.6 2.2 17.4 4.4 17 7.4 C17.2 10.2 14.4 11.6 12.2 12 C9.8 13.6 6 13.4 4.6 12 C2.4 11.6 0.8 9.6 1 7.4 Z" fill="#dfe3ea" stroke="#4d4d4d" stroke-width="1.3"/><path d="M3 9.2 C5 11.2 11 11.6 14.6 9.4 C15.6 8.6 15.8 7.6 15.4 7 C13 9.4 6 9.8 3 9.2Z" fill="#a9adb5"/><path d="M4 6.2 C5.4 4.2 8 3.4 10.6 4 C9 4.6 8.4 5.8 8.6 6.8 C7 6.2 5.4 6 4 6.2Z" fill="#fff"/></svg>
<div class="t" style="left:251.10px;top:305.23px;font-size:15px;letter-spacing:0.22px;">fotogrametria.limpo.clone</div>
<div class="a" style="left:206px;top:329px;width:16px;height:16px;background:#fff;border:1px solid #333"></div><svg style="left:206px;top:329px" width="16" height="16" viewBox="0 0 16 16"><path d="M3.4 8.4 L6.4 11.4 L12.6 4.8" fill="none" stroke="#333" stroke-width="1.25"/></svg>
<svg style="left:227.5px;top:330.5px" width="18" height="14" viewBox="0 0 18 14"><path d="M1 7.4 C0.6 5 3.4 3.8 5 3.6 C6.2 1.4 9.6 0.6 11.8 1.8 C14.6 2.2 17.4 4.4 17 7.4 C17.2 10.2 14.4 11.6 12.2 12 C9.8 13.6 6 13.4 4.6 12 C2.4 11.6 0.8 9.6 1 7.4 Z" fill="#dfe3ea" stroke="#4d4d4d" stroke-width="1.3"/><path d="M3 9.2 C5 11.2 11 11.6 14.6 9.4 C15.6 8.6 15.8 7.6 15.4 7 C13 9.4 6 9.8 3 9.2Z" fill="#a9adb5"/><path d="M4 6.2 C5.4 4.2 8 3.4 10.6 4 C9 4.6 8.4 5.8 8.6 6.8 C7 6.2 5.4 6 4 6.2Z" fill="#fff"/></svg>
<div class="t" style="left:251.10px;top:331.99px;font-size:12.5px;letter-spacing:0.24px;">fotogrametria.limpo.clone.section.re...</div>
<div class="a" style="left:206px;top:353px;width:16px;height:16px;background:#fff;border:1px solid #333"></div><svg style="left:206px;top:353px" width="16" height="16" viewBox="0 0 16 16"><path d="M3.4 8.4 L6.4 11.4 L12.6 4.8" fill="none" stroke="#333" stroke-width="1.25"/></svg>
<svg style="left:227.5px;top:354.5px" width="18" height="14" viewBox="0 0 18 14"><path d="M1 7.4 C0.6 5 3.4 3.8 5 3.6 C6.2 1.4 9.6 0.6 11.8 1.8 C14.6 2.2 17.4 4.4 17 7.4 C17.2 10.2 14.4 11.6 12.2 12 C9.8 13.6 6 13.4 4.6 12 C2.4 11.6 0.8 9.6 1 7.4 Z" fill="#dfe3ea" stroke="#4d4d4d" stroke-width="1.3"/><path d="M3 9.2 C5 11.2 11 11.6 14.6 9.4 C15.6 8.6 15.8 7.6 15.4 7 C13 9.4 6 9.8 3 9.2Z" fill="#a9adb5"/><path d="M4 6.2 C5.4 4.2 8 3.4 10.6 4 C9 4.6 8.4 5.8 8.6 6.8 C7 6.2 5.4 6 4 6.2Z" fill="#fff"/></svg>
<div class="t" style="left:251.10px;top:355.99px;font-size:12.5px;letter-spacing:0.21px;">fotogrametria.limpo.clone.section.se...</div>
<svg style="left:135.5px;top:378px" width="9" height="14" viewBox="0 0 9 14"><path d="M0.6 0.6 V13 L8.4 6.8 Z" fill="url(#garr)"/></svg>
<div class="a" style="left:156px;top:377px;width:16px;height:16px;background:#fff;border:1px solid #333"></div>
<svg style="left:178px;top:375.5px" width="19" height="18" viewBox="0 0 19 18"><path d="M1.5 3.2 L3 1.2 L7.2 2 L8 3.6 L16.8 5.6 L16.2 16.4 L13.6 17 L2.6 13 Z" fill="#b8860f"/><path d="M1.6 3.4 L3.1 1.4 L7 2.3 L7.8 4 L15.4 5.9 L14.2 16.5 L2.6 12.8 Z" fill="#c9961b"/><path d="M1 6.6 L13.6 9.2 L14.4 16.6 L2.9 12.9 Z" fill="url(#gfold)"/><path d="M1.2 6.8 L13.5 9.4" stroke="#f8e28c" stroke-width="0.8" fill="none"/></svg>
<div class="t" style="left:204.60px;top:377.23px;font-size:15px;letter-spacing:0.07px;">fotogrametria.limpo.clone.envelopes</div>
<svg style="left:135.5px;top:402px" width="9" height="14" viewBox="0 0 9 14"><path d="M0.6 0.6 V13 L8.4 6.8 Z" fill="url(#garr)"/></svg>
<div class="a" style="left:156px;top:401px;width:16px;height:16px;background:#fff;border:1px solid #333"></div>
<svg style="left:178px;top:399.5px" width="19" height="18" viewBox="0 0 19 18"><path d="M1.5 3.2 L3 1.2 L7.2 2 L8 3.6 L16.8 5.6 L16.2 16.4 L13.6 17 L2.6 13 Z" fill="#b8860f"/><path d="M1.6 3.4 L3.1 1.4 L7 2.3 L7.8 4 L15.4 5.9 L14.2 16.5 L2.6 12.8 Z" fill="#c9961b"/><path d="M1 6.6 L13.6 9.2 L14.4 16.6 L2.9 12.9 Z" fill="url(#gfold)"/><path d="M1.2 6.8 L13.5 9.4" stroke="#f8e28c" stroke-width="0.8" fill="none"/></svg>
<div class="t" style="left:204.60px;top:401.23px;font-size:15px;letter-spacing:0.07px;">fotogrametria.limpo.clone.envelopes</div>
<svg style="left:58px;top:428px" width="14" height="9" viewBox="0 0 14 9"><path d="M0.6 0.8 H13 L6.8 8.6 Z" fill="url(#garr)"/></svg>
<div class="a" style="left:81px;top:425px;width:16px;height:16px;background:#fff;border:1px solid #333"></div>
<svg style="left:103px;top:423.5px" width="19" height="18" viewBox="0 0 19 18"><path d="M1.5 3.2 L3 1.2 L7.2 2 L8 3.6 L16.8 5.6 L16.2 16.4 L13.6 17 L2.6 13 Z" fill="#b8860f"/><path d="M1.6 3.4 L3.1 1.4 L7 2.3 L7.8 4 L15.4 5.9 L14.2 16.5 L2.6 12.8 Z" fill="#c9961b"/><path d="M1 6.6 L13.6 9.2 L14.4 16.6 L2.9 12.9 Z" fill="url(#gfold)"/><path d="M1.2 6.8 L13.5 9.4" stroke="#f8e28c" stroke-width="0.8" fill="none"/></svg>
<div class="t" style="left:129.60px;top:427.99px;font-size:12.5px;letter-spacing:0.14px;">Ransac Detected Shapes (fotogrametria.limpo.clone.se...</div>
<svg style="left:83px;top:452px" width="14" height="9" viewBox="0 0 14 9"><path d="M0.6 0.8 H13 L6.8 8.6 Z" fill="url(#garr)"/></svg>
<div class="a" style="left:106px;top:449px;width:16px;height:16px;background:#fff;border:1px solid #333"></div><svg style="left:106px;top:449px" width="16" height="16" viewBox="0 0 16 16"><path d="M3.4 8.4 L6.4 11.4 L12.6 4.8" fill="none" stroke="#333" stroke-width="1.25"/></svg>
<svg style="left:127.5px;top:450.5px" width="18" height="14" viewBox="0 0 18 14"><path d="M1 7.4 C0.6 5 3.4 3.8 5 3.6 C6.2 1.4 9.6 0.6 11.8 1.8 C14.6 2.2 17.4 4.4 17 7.4 C17.2 10.2 14.4 11.6 12.2 12 C9.8 13.6 6 13.4 4.6 12 C2.4 11.6 0.8 9.6 1 7.4 Z" fill="#dfe3ea" stroke="#4d4d4d" stroke-width="1.3"/><path d="M3 9.2 C5 11.2 11 11.6 14.6 9.4 C15.6 8.6 15.8 7.6 15.4 7 C13 9.4 6 9.8 3 9.2Z" fill="#a9adb5"/><path d="M4 6.2 C5.4 4.2 8 3.4 10.6 4 C9 4.6 8.4 5.8 8.6 6.8 C7 6.2 5.4 6 4 6.2Z" fill="#fff"/></svg>
<div class="t" style="left:151.10px;top:448.03px;font-size:15px;letter-spacing:-0.49px;">Cylinder_0001</div>
</div></div>
<div class="a" style="left:41px;top:484px;width:503px;height:22px;background:#d9d9d9;border:1px solid #b9b9b9"></div>
<div class="t" style="left:46.25px;top:488.24px;font-size:13px;letter-spacing:-0.14px;">Properties</div>
<svg style="left:530px;top:490px" width="10" height="10" viewBox="0 0 10 10"><path d="M3.5 3V1h5.5v5H7" fill="none" stroke="#000" stroke-width="1"/><rect x="3" y="0.5" width="6.5" height="1.6" fill="#000"/><rect x="0.5" y="4" width="6" height="5" fill="#e8e8e8" stroke="#000" stroke-width="1"/><rect x="0" y="3.2" width="7" height="1.8" fill="#000"/></svg>
<div class="a" style="left:52px;top:519px;width:481px;height:333px;border:1px solid #7a828f"></div>
<!-- sec_view -->
<svg style="left:549px;top:95px" width="1296" height="768" viewBox="549 95 1296 768">
<defs>
<linearGradient id="bg" x1="0" y1="95" x2="0" y2="863" gradientUnits="userSpaceOnUse"><stop offset="0" stop-color="#0a6697"/><stop offset="0.5" stop-color="#05334c"/><stop offset="0.93" stop-color="#000609"/><stop offset="1" stop-color="#000"/></linearGradient>
<linearGradient id="gfront" x1="868" y1="0" x2="1540" y2="0" gradientUnits="userSpaceOnUse"><stop offset="0" stop-color="#1e1b1a"/><stop offset="0.02" stop-color="#2c2826"/><stop offset="0.06" stop-color="#423e3b"/><stop offset="0.2" stop-color="#524f4d"/><stop offset="0.5" stop-color="#585756"/><stop offset="0.8" stop-color="#54514f"/><stop offset="0.93" stop-color="#443f3b"/><stop offset="1" stop-color="#201c1a"/></linearGradient>
<linearGradient id="gback" x1="868" y1="0" x2="1540" y2="0" gradientUnits="userSpaceOnUse"><stop offset="0" stop-color="#1e1c1b"/><stop offset="0.03" stop-color="#2c2927"/><stop offset="0.08" stop-color="#3e3b39"/><stop offset="0.3" stop-color="#474543"/><stop offset="0.5" stop-color="#4b4947"/><stop offset="0.75" stop-color="#48423d"/><stop offset="0.95" stop-color="#3c3632"/><stop offset="1" stop-color="#262220"/></linearGradient>
<linearGradient id="ginb" x1="989" y1="0" x2="1411" y2="0" gradientUnits="userSpaceOnUse"><stop offset="0" stop-color="#252221"/><stop offset="0.1" stop-color="#3a3736"/><stop offset="0.5" stop-color="#434140"/><stop offset="0.85" stop-color="#3b3836"/><stop offset="1" stop-color="#2a2624"/></linearGradient>
<linearGradient id="ginf" x1="989" y1="0" x2="1411" y2="0" gradientUnits="userSpaceOnUse"><stop offset="0" stop-color="#262220"/><stop offset="0.15" stop-color="#33302e"/><stop offset="0.5" stop-color="#373432"/><stop offset="0.85" stop-color="#383432"/><stop offset="1" stop-color="#1c1918"/></linearGradient>
<linearGradient id="gdl" x1="0" y1="0" x2="1" y2="0"><stop offset="0" stop-color="#0c0a09"/><stop offset="1" stop-color="#0c0a09" stop-opacity="0"/></linearGradient>
<linearGradient id="gdr" x1="0" y1="0" x2="1" y2="0"><stop offset="0" stop-color="#0c0a09" stop-opacity="0"/><stop offset="1" stop-color="#0c0a09"/></linearGradient>
<filter id="tex" x="0" y="0" width="100%" height="100%" color-interpolation-filters="sRGB">
<feTurbulence type="fractalNoise" baseFrequency="0.18 0.3" numOctaves="3" seed="7" result="n"/>
<feColorMatrix in="n" type="matrix" values="0.36 0.36 0.36 0 0.23  0.36 0.36 0.36 0 0.23  0.36 0.36 0.36 0 0.23  0 0 0 0 1" result="g"/>
<feComposite in="SourceGraphic" in2="g" operator="arithmetic" k1="1.12" k2="0" k3="0" k4="0"/>
</filter>
<filter id="wv" x="-2%" y="-5%" width="104%" height="110%" color-interpolation-filters="sRGB">
<feTurbulence type="fractalNoise" baseFrequency="0.03 0.05" numOctaves="2" seed="3" result="n"/>
<feGaussianBlur in="SourceGraphic" stdDeviation="1.8" result="b"/>
<feDisplacementMap in="b" in2="n" scale="7" xChannelSelector="R" yChannelSelector="G"/>
</filter>

<clipPath id="cfront"><path d="M868.0 410.2 868.5 419.8 869.8 429.3 872.1 438.8 875.3 448.2 879.4 457.5 884.3 466.7 890.2 475.7 896.9 484.6 904.4 493.2 912.7 501.6 921.9 509.8 931.8 517.6 942.4 525.2 953.8 532.5 965.8 539.5 978.5 546.0 991.8 552.3 1005.7 558.1 1020.1 563.5 1035.0 568.5 1050.4 573.1 1066.1 577.2 1082.3 580.9 1098.8 584.1 1115.6 586.8 1132.6 589.0 1149.8 590.7 1167.1 592.0 1184.5 592.7 1202.0 593.0 1219.5 592.7 1236.9 592.0 1254.2 590.7 1271.4 589.0 1288.4 586.8 1305.2 584.1 1321.7 580.9 1337.9 577.2 1353.6 573.1 1369.0 568.5 1383.9 563.5 1398.3 558.1 1412.2 552.3 1425.5 546.0 1438.2 539.5 1450.2 532.5 1461.6 525.2 1472.2 517.6 1482.1 509.8 1491.3 501.6 1499.6 493.2 1507.1 484.6 1513.8 475.7 1519.7 466.7 1524.6 457.5 1528.7 448.2 1531.9 438.8 1534.2 429.3 1535.5 419.8 1536.0 410.2 1540.0 515.7 1539.5 526.1 1538.2 536.4 1535.9 546.6 1532.7 556.8 1528.6 566.9 1523.6 576.8 1517.7 586.6 1511.0 596.2 1503.4 605.5 1495.0 614.6 1485.8 623.4 1475.8 632.0 1465.1 640.2 1453.7 648.1 1441.6 655.6 1428.8 662.7 1415.5 669.4 1401.5 675.7 1387.0 681.6 1372.0 687.0 1356.5 691.9 1340.7 696.4 1324.4 700.4 1307.8 703.8 1291.0 706.8 1273.9 709.2 1256.6 711.1 1239.1 712.4 1221.6 713.2 1204.0 713.5 1186.4 713.2 1168.9 712.4 1151.4 711.1 1134.1 709.2 1117.0 706.8 1100.2 703.8 1083.6 700.4 1067.3 696.4 1051.5 691.9 1036.0 687.0 1021.0 681.6 1006.5 675.7 992.5 669.4 979.2 662.7 966.4 655.6 954.3 648.1 942.9 640.2 932.2 632.0 922.2 623.4 913.0 614.6 904.6 605.5 897.0 596.2 890.3 586.6 884.4 576.8 879.4 566.9 875.3 556.8 872.1 546.6 869.8 536.4 868.5 526.1 868.0 515.7Z"/></clipPath>
<clipPath id="cback"><path d="M868.0 410.2 868.2 388.0 869.6 371.0 873.5 358.0 879.5 348.0 886.0 340.0 893.0 333.3 901.0 326.8 909.0 320.6 918.0 314.0 925.1 308.0 931.8 302.8 938.8 297.7 946.1 292.7 953.8 287.9 961.7 283.2 970.0 278.7 978.5 274.4 987.3 270.2 996.4 266.2 1005.7 262.3 1015.2 258.7 1025.0 255.2 1035.0 251.9 1045.2 248.8 1055.6 245.9 1066.1 243.2 1076.9 240.7 1087.8 238.4 1098.8 236.3 1109.9 234.5 1121.2 232.8 1132.6 231.4 1144.0 230.2 1155.5 229.2 1167.1 228.4 1178.7 227.8 1190.3 227.5 1202.0 227.4 1213.7 227.5 1225.3 227.8 1236.9 228.4 1248.5 229.2 1260.0 230.2 1271.4 231.4 1282.8 232.8 1294.1 234.5 1305.2 236.3 1316.2 238.4 1327.1 240.7 1337.9 243.2 1348.4 245.9 1358.8 248.8 1369.0 251.9 1379.0 255.2 1388.8 258.7 1398.3 262.3 1407.6 266.2 1416.7 270.2 1425.5 274.4 1434.0 278.7 1442.3 283.2 1450.2 287.9 1457.9 292.7 1465.2 297.7 1472.2 302.8 1478.9 308.0 1485.2 313.3 1491.3 318.8 1496.9 324.4 1502.2 330.1 1507.1 335.8 1511.7 341.7 1515.9 347.7 1519.7 353.7 1523.1 359.8 1526.1 366.0 1528.7 372.2 1530.9 378.5 1532.7 384.8 1534.2 391.1 1535.2 397.4 1535.8 403.8 1536.0 410.2 1536.0 410.2 1535.6 419.2 1534.4 428.1 1532.4 437.0 1529.6 445.8 1526.0 454.6 1521.6 463.2 1516.5 471.8 1510.6 480.1 1504.0 473.0 1491.0 461.9 1465.2 435.9 1439.3 415.2 1411.0 397.0 989.0 392.5 969.6 400.9 943.7 415.2 917.8 434.6 905.0 447.0 891.9 461.9 888.0 472.5 883.3 465.0 879.3 457.3 875.9 449.6 873.0 441.8 870.8 434.0 869.3 426.1 868.3 418.1 868.0 410.2Z"/></clipPath>
<clipPath id="cinb"><path d="M989.0 410.9 989.4 403.8 990.7 396.7 992.7 389.7 995.6 382.7 999.3 375.9 1003.8 369.2 1009.1 362.6 1015.1 356.3 1021.8 350.1 1029.3 344.2 1037.4 338.6 1046.2 333.3 1055.6 328.2 1065.5 323.5 1076.0 319.2 1086.9 315.2 1098.3 311.5 1110.2 308.3 1122.3 305.5 1134.8 303.1 1147.5 301.1 1160.5 299.5 1173.6 298.4 1186.8 297.7 1200.0 297.5 1213.2 297.7 1226.4 298.4 1239.5 299.5 1252.5 301.1 1265.2 303.1 1277.7 305.5 1289.8 308.3 1301.7 311.5 1313.1 315.2 1324.0 319.2 1334.5 323.5 1344.4 328.2 1353.8 333.3 1362.6 338.6 1370.7 344.2 1378.2 350.1 1384.9 356.3 1390.9 362.6 1396.2 369.2 1400.7 375.9 1404.4 382.7 1407.3 389.7 1409.3 396.7 1410.6 403.8 1411.0 410.9 1411.0 518.0 1410.6 511.7 1409.3 505.4 1407.3 499.2 1404.4 493.1 1400.7 487.0 1396.2 481.1 1390.9 475.3 1384.9 469.7 1378.2 464.3 1370.7 459.1 1362.6 454.1 1353.8 449.4 1344.4 445.0 1334.5 440.8 1324.0 436.9 1313.1 433.4 1301.7 430.2 1289.8 427.3 1277.7 424.8 1265.2 422.7 1252.5 420.9 1239.5 419.6 1226.4 418.6 1213.2 418.0 1200.0 417.8 1186.8 418.0 1173.6 418.6 1160.5 419.6 1147.5 420.9 1134.8 422.7 1122.3 424.8 1110.2 427.3 1098.3 430.2 1086.9 433.4 1076.0 436.9 1065.5 440.8 1055.6 445.0 1046.2 449.4 1037.4 454.1 1029.3 459.1 1021.8 464.3 1015.1 469.7 1009.1 475.3 1003.8 481.1 999.3 487.0 995.6 493.1 992.7 499.2 990.7 505.4 989.4 511.7 989.0 518.0Z"/></clipPath>
<clipPath id="cinf"><path d="M989.0 410.9 989.4 418.0 990.7 425.1 992.7 432.1 995.6 439.1 999.3 445.9 1003.8 452.6 1009.1 459.2 1015.1 465.5 1021.8 471.7 1029.3 477.6 1037.4 483.2 1046.2 488.5 1055.6 493.6 1065.5 498.3 1076.0 502.6 1086.9 506.6 1098.3 510.3 1110.2 513.5 1122.3 516.3 1134.8 518.7 1147.5 520.7 1160.5 522.3 1173.6 523.4 1186.8 524.1 1200.0 524.3 1213.2 524.1 1226.4 523.4 1239.5 522.3 1252.5 520.7 1265.2 518.7 1277.7 516.3 1289.8 513.5 1301.7 510.3 1313.1 506.6 1324.0 502.6 1334.5 498.3 1344.4 493.6 1353.8 488.5 1362.6 483.2 1370.7 477.6 1378.2 471.7 1384.9 465.5 1390.9 459.2 1396.2 452.6 1400.7 445.9 1404.4 439.1 1407.3 432.1 1409.3 425.1 1410.6 418.0 1411.0 410.9 1411.0 556.0 1410.6 562.0 1409.3 568.0 1407.3 574.0 1404.4 579.9 1400.7 585.7 1396.2 591.3 1390.9 596.9 1384.9 602.2 1378.2 607.4 1370.7 612.4 1362.6 617.2 1353.8 621.7 1344.4 626.0 1334.5 630.0 1324.0 633.7 1313.1 637.1 1301.7 640.1 1289.8 642.9 1277.7 645.3 1265.2 647.3 1252.5 649.0 1239.5 650.3 1226.4 651.2 1213.2 651.8 1200.0 652.0 1186.8 651.8 1173.6 651.2 1160.5 650.3 1147.5 649.0 1134.8 647.3 1122.3 645.3 1110.2 642.9 1098.3 640.1 1086.9 637.1 1076.0 633.7 1065.5 630.0 1055.6 626.0 1046.2 621.7 1037.4 617.2 1029.3 612.4 1021.8 607.4 1015.1 602.2 1009.1 596.9 1003.8 591.3 999.3 585.7 995.6 579.9 992.7 574.0 990.7 568.0 989.4 562.0 989.0 556.0Z"/></clipPath>
</defs>
<rect x="549" y="95" width="1296" height="768" fill="url(#bg)"/>
<g filter="url(#tex)">
<g clip-path="url(#cback)"><path d="M868.0 410.2 868.2 388.0 869.6 371.0 873.5 358.0 879.5 348.0 886.0 340.0 893.0 333.3 901.0 326.8 909.0 320.6 918.0 314.0 925.1 308.0 931.8 302.8 938.8 297.7 946.1 292.7 953.8 287.9 961.7 283.2 970.0 278.7 978.5 274.4 987.3 270.2 996.4 266.2 1005.7 262.3 1015.2 258.7 1025.0 255.2 1035.0 251.9 1045.2 248.8 1055.6 245.9 1066.1 243.2 1076.9 240.7 1087.8 238.4 1098.8 236.3 1109.9 234.5 1121.2 232.8 1132.6 231.4 1144.0 230.2 1155.5 229.2 1167.1 228.4 1178.7 227.8 1190.3 227.5 1202.0 227.4 1213.7 227.5 1225.3 227.8 1236.9 228.4 1248.5 229.2 1260.0 230.2 1271.4 231.4 1282.8 232.8 1294.1 234.5 1305.2 236.3 1316.2 238.4 1327.1 240.7 1337.9 243.2 1348.4 245.9 1358.8 248.8 1369.0 251.9 1379.0 255.2 1388.8 258.7 1398.3 262.3 1407.6 266.2 1416.7 270.2 1425.5 274.4 1434.0 278.7 1442.3 283.2 1450.2 287.9 1457.9 292.7 1465.2 297.7 1472.2 302.8 1478.9 308.0 1485.2 313.3 1491.3 318.8 1496.9 324.4 1502.2 330.1 1507.1 335.8 1511.7 341.7 1515.9 347.7 1519.7 353.7 1523.1 359.8 1526.1 366.0 1528.7 372.2 1530.9 378.5 1532.7 384.8 1534.2 391.1 1535.2 397.4 1535.8 403.8 1536.0 410.2 1536.0 410.2 1535.6 419.2 1534.4 428.1 1532.4 437.0 1529.6 445.8 1526.0 454.6 1521.6 463.2 1516.5 471.8 1510.6 480.1 1504.0 473.0 1491.0 461.9 1465.2 435.9 1439.3 415.2 1411.0 397.0 989.0 392.5 969.6 400.9 943.7 415.2 917.8 434.6 905.0 447.0 891.9 461.9 888.0 472.5 883.3 465.0 879.3 457.3 875.9 449.6 873.0 441.8 870.8 434.0 869.3 426.1 868.3 418.1 868.0 410.2Z" fill="url(#gback)"/><g filter="url(#wv)" fill="none">
<path d="M867.6 416.6 868.7 402.3 871.8 388.1 876.9 374.0 884.0 360.2 893.0 346.8 904.0 333.8 916.8 321.3 931.4 309.4 947.6 298.1 965.4 287.6 984.6 277.9 1005.2 269.0 1027.0 261.0 1049.9 254.0 1073.7 248.0 1098.2 243.1 1123.5 239.2 1149.2 236.4 1175.2 234.7 1201.4 234.2 1227.5 234.7 1253.6 236.4 1279.3 239.2 1304.5 243.1 1329.1 248.0 1352.9 254.0 1375.7 261.0 1397.5 269.0 1418.1 277.9 1437.3 287.6 1455.1 298.1 1471.3 309.4 1485.9 321.3 1498.7 333.8 1509.7 346.8 1518.7 360.2 1525.9 374.0 1531.0 388.1 1534.0 402.3 1535.1 416.6M866.9 429.4 868.0 415.2 871.0 401.0 876.1 387.0 883.2 373.3 892.3 359.9 903.2 346.9 916.0 334.5 930.6 322.6 946.7 311.4 964.5 300.9 983.7 291.2 1004.3 282.4 1026.0 274.5 1048.8 267.5 1072.6 261.5 1097.1 256.6 1122.3 252.7 1148.0 249.9 1173.9 248.2 1200.1 247.7 1226.2 248.2 1252.2 249.9 1277.8 252.7 1303.0 256.6 1327.6 261.5 1351.3 267.5 1374.1 274.5 1395.9 282.4 1416.4 291.2 1435.6 300.9 1453.4 311.4 1469.6 322.6 1484.1 334.5 1496.9 346.9 1507.9 359.9 1516.9 373.3 1524.0 387.0 1529.1 401.0 1532.2 415.2 1533.2 429.4M866.2 442.3 867.2 428.1 870.3 413.9 875.4 400.0 882.5 386.3 891.5 373.0 902.5 360.1 915.2 347.7 929.7 335.8 945.9 324.7 963.6 314.2 982.8 304.6 1003.3 295.8 1025.0 287.9 1047.8 280.9 1071.5 275.0 1096.0 270.0 1121.1 266.2 1146.8 263.4 1172.7 261.7 1198.8 261.2 1224.9 261.7 1250.8 263.4 1276.4 266.2 1301.6 270.0 1326.1 275.0 1349.8 280.9 1372.6 287.9 1394.3 295.8 1414.8 304.6 1433.9 314.2 1451.7 324.7 1467.8 335.8 1482.3 347.7 1495.1 360.1 1506.0 373.0 1515.1 386.3 1522.2 400.0 1527.3 413.9 1530.3 428.1 1531.4 442.3M865.5 455.1 866.5 440.9 869.6 426.9 874.7 413.0 881.7 399.4 890.8 386.1 901.7 373.2 914.4 360.8 928.9 349.1 945.0 337.9 962.7 327.5 981.9 317.9 1002.4 309.2 1024.0 301.3 1046.8 294.4 1070.4 288.4 1094.9 283.5 1120.0 279.7 1145.6 276.9 1171.5 275.3 1197.5 274.7 1223.5 275.3 1249.4 276.9 1275.0 279.7 1300.1 283.5 1324.6 288.4 1348.2 294.4 1371.0 301.3 1392.6 309.2 1413.1 317.9 1432.3 327.5 1450.0 337.9 1466.1 349.1 1480.6 360.8 1493.3 373.2 1504.2 386.1 1513.3 399.4 1520.3 413.0 1525.4 426.9 1528.5 440.9 1529.5 455.1M864.8 467.9 865.8 453.8 868.9 439.8 873.9 426.0 881.0 412.4 890.0 399.2 900.9 386.3 913.6 374.0 928.1 362.3 944.2 351.2 961.9 340.9 981.0 331.3 1001.4 322.5 1023.0 314.7 1045.7 307.8 1069.4 301.9 1093.8 297.0 1118.8 293.2 1144.4 290.4 1170.2 288.8 1196.2 288.2 1222.2 288.8 1248.1 290.4 1273.6 293.2 1298.6 297.0 1323.0 301.9 1346.7 307.8 1369.4 314.7 1391.0 322.5 1411.5 331.3 1430.6 340.9 1448.2 351.2 1464.3 362.3 1478.8 374.0 1491.5 386.3 1502.4 399.2 1511.4 412.4 1518.5 426.0 1523.6 439.8 1526.6 453.8 1527.6 467.9M864.1 480.8 865.1 466.7 868.1 452.8 873.2 439.0 880.3 425.4 889.3 412.2 900.1 399.5 912.8 387.2 927.3 375.5 943.3 364.5 961.0 354.2 980.1 344.6 1000.5 335.9 1022.1 328.1 1044.7 321.2 1068.3 315.4 1092.7 310.5 1117.7 306.7 1143.2 303.9 1169.0 302.3 1194.9 301.7 1220.9 302.3 1246.7 303.9 1272.2 306.7 1297.2 310.5 1321.5 315.4 1345.1 321.2 1367.8 328.1 1389.4 335.9 1409.8 344.6 1428.9 354.2 1446.5 364.5 1462.6 375.5 1477.0 387.2 1489.7 399.5 1500.6 412.2 1509.6 425.4 1516.6 439.0 1521.7 452.8 1524.8 466.7 1525.8 480.8M863.4 493.6 864.4 479.6 867.4 465.7 872.5 452.0 879.5 438.5 888.5 425.3 899.4 412.6 912.0 400.4 926.4 388.8 942.5 377.8 960.1 367.5 979.1 358.0 999.5 349.3 1021.1 341.5 1043.7 334.7 1067.2 328.8 1091.6 324.0 1116.5 320.2 1142.0 317.4 1167.7 315.8 1193.6 315.2 1219.6 315.8 1245.3 317.4 1270.7 320.2 1295.7 324.0 1320.0 328.8 1343.6 334.7 1366.2 341.5 1387.8 349.3 1408.1 358.0 1427.2 367.5 1444.8 377.8 1460.8 388.8 1475.3 400.4 1487.9 412.6 1498.8 425.3 1507.8 438.5 1514.8 452.0 1519.9 465.7 1522.9 479.6 1523.9 493.6M862.6 506.4 863.7 492.5 866.7 478.6 871.8 464.9 878.8 451.5 887.7 438.4 898.6 425.8 911.2 413.6 925.6 402.0 941.6 391.0 959.2 380.8 978.2 371.3 998.6 362.7 1020.1 354.9 1042.7 348.1 1066.2 342.3 1090.5 337.5 1115.4 333.7 1140.8 330.9 1166.5 329.3 1192.4 328.8 1218.2 329.3 1243.9 330.9 1269.3 333.7 1294.2 337.5 1318.5 342.3 1342.0 348.1 1364.6 354.9 1386.2 362.7 1406.5 371.3 1425.5 380.8 1443.1 391.0 1459.1 402.0 1473.5 413.6 1486.1 425.8 1497.0 438.4 1505.9 451.5 1513.0 464.9 1518.0 478.6 1521.1 492.5 1522.1 506.4" stroke="#565351" stroke-width="7" opacity="0.75"/>
<path d="M868.0 410.2 869.0 395.9 872.1 381.6 877.2 367.5 884.3 353.7 893.4 340.2 904.4 327.2 917.2 314.7 931.8 302.8 948.0 291.5 965.8 280.9 985.1 271.2 1005.7 262.3 1027.5 254.3 1050.4 247.3 1074.2 241.3 1098.8 236.3 1124.0 232.5 1149.8 229.7 1175.8 228.0 1202.0 227.4 1228.2 228.0 1254.2 229.7 1280.0 232.5 1305.2 236.3 1329.8 241.3 1353.6 247.3 1376.5 254.3 1398.3 262.3 1418.9 271.2 1438.2 280.9 1456.0 291.5 1472.2 302.8 1486.8 314.7 1499.6 327.2 1510.6 340.2 1519.7 353.7 1526.8 367.5 1531.9 381.6 1535.0 395.9 1536.0 410.2M867.3 423.0 868.3 408.7 871.4 394.5 876.5 380.5 883.6 366.8 892.7 353.3 903.6 340.4 916.4 327.9 931.0 316.0 947.2 304.8 964.9 294.3 984.2 284.5 1004.7 275.7 1026.5 267.8 1049.3 260.8 1073.1 254.8 1097.7 249.8 1122.9 245.9 1148.6 243.2 1174.6 241.5 1200.7 240.9 1226.9 241.5 1252.9 243.2 1278.6 245.9 1303.7 249.8 1328.3 254.8 1352.1 260.8 1374.9 267.8 1396.7 275.7 1417.3 284.5 1436.5 294.3 1454.3 304.8 1470.5 316.0 1485.0 327.9 1497.8 340.4 1508.8 353.3 1517.8 366.8 1524.9 380.5 1530.0 394.5 1533.1 408.7 1534.1 423.0M866.6 435.9 867.6 421.6 870.7 407.5 875.8 393.5 882.9 379.8 891.9 366.4 902.9 353.5 915.6 341.1 930.1 329.2 946.3 318.0 964.1 307.6 983.3 297.9 1003.8 289.1 1025.5 281.2 1048.3 274.2 1072.0 268.2 1096.6 263.3 1121.7 259.4 1147.4 256.7 1173.3 255.0 1199.4 254.4 1225.5 255.0 1251.5 256.7 1277.1 259.4 1302.3 263.3 1326.8 268.2 1350.5 274.2 1373.3 281.2 1395.1 289.1 1415.6 297.9 1434.8 307.6 1452.5 318.0 1468.7 329.2 1483.2 341.1 1496.0 353.5 1506.9 366.4 1516.0 379.8 1523.1 393.5 1528.2 407.5 1531.3 421.6 1532.3 435.9M865.9 448.7 866.9 434.5 869.9 420.4 875.0 406.5 882.1 392.8 891.2 379.5 902.1 366.6 914.8 354.2 929.3 342.4 945.5 331.3 963.2 320.9 982.3 311.2 1002.8 302.5 1024.5 294.6 1047.3 287.6 1071.0 281.7 1095.5 276.8 1120.6 272.9 1146.2 270.2 1172.1 268.5 1198.1 267.9 1224.2 268.5 1250.1 270.2 1275.7 272.9 1300.8 276.8 1325.3 281.7 1349.0 287.6 1371.8 294.6 1393.5 302.5 1413.9 311.2 1433.1 320.9 1450.8 331.3 1467.0 342.4 1481.5 354.2 1494.2 366.6 1505.1 379.5 1514.2 392.8 1521.2 406.5 1526.3 420.4 1529.4 434.5 1530.4 448.7M865.1 461.5 866.2 447.4 869.2 433.3 874.3 419.5 881.4 405.9 890.4 392.6 901.3 379.8 914.0 367.4 928.5 355.7 944.6 344.6 962.3 334.2 981.4 324.6 1001.9 315.8 1023.5 308.0 1046.3 301.1 1069.9 295.2 1094.4 290.3 1119.4 286.4 1145.0 283.7 1170.8 282.0 1196.9 281.5 1222.9 282.0 1248.7 283.7 1274.3 286.4 1299.4 290.3 1323.8 295.2 1347.5 301.1 1370.2 308.0 1391.8 315.8 1412.3 324.6 1431.4 334.2 1449.1 344.6 1465.2 355.7 1479.7 367.4 1492.4 379.8 1503.3 392.6 1512.3 405.9 1519.4 419.5 1524.5 433.3 1527.5 447.4 1528.6 461.5M864.4 474.3 865.4 460.3 868.5 446.3 873.6 432.5 880.6 418.9 889.6 405.7 900.5 392.9 913.2 380.6 927.7 368.9 943.8 357.9 961.4 347.5 980.5 337.9 1000.9 329.2 1022.5 321.4 1045.2 314.5 1068.8 308.6 1093.2 303.8 1118.3 299.9 1143.8 297.2 1169.6 295.5 1195.6 295.0 1221.6 295.5 1247.4 297.2 1272.9 299.9 1297.9 303.8 1322.3 308.6 1345.9 314.5 1368.6 321.4 1390.2 329.2 1410.6 337.9 1429.7 347.5 1447.4 357.9 1463.5 368.9 1477.9 380.6 1490.6 392.9 1501.5 405.7 1510.5 418.9 1517.6 432.5 1522.6 446.3 1525.7 460.3 1526.7 474.3M863.7 487.2 864.7 473.2 867.8 459.2 872.8 445.5 879.9 432.0 888.9 418.8 899.7 406.0 912.4 393.8 926.8 382.1 942.9 371.1 960.5 360.8 979.6 351.3 1000.0 342.6 1021.6 334.8 1044.2 328.0 1067.8 322.1 1092.1 317.2 1117.1 313.4 1142.6 310.7 1168.3 309.0 1194.3 308.5 1220.2 309.0 1246.0 310.7 1271.5 313.4 1296.4 317.2 1320.8 322.1 1344.4 328.0 1367.0 334.8 1388.6 342.6 1409.0 351.3 1428.0 360.8 1445.7 371.1 1461.7 382.1 1476.1 393.8 1488.8 406.0 1499.7 418.8 1508.7 432.0 1515.7 445.5 1520.8 459.2 1523.8 473.2 1524.9 487.2M863.0 500.0 864.0 486.0 867.1 472.2 872.1 458.4 879.2 445.0 888.1 431.9 899.0 419.2 911.6 407.0 926.0 395.4 942.1 384.4 959.7 374.1 978.7 364.6 999.0 356.0 1020.6 348.2 1043.2 341.4 1066.7 335.5 1091.0 330.7 1116.0 326.9 1141.4 324.2 1167.1 322.5 1193.0 322.0 1218.9 322.5 1244.6 324.2 1270.0 326.9 1295.0 330.7 1319.3 335.5 1342.8 341.4 1365.4 348.2 1387.0 356.0 1407.3 364.6 1426.3 374.1 1443.9 384.4 1460.0 395.4 1474.4 407.0 1487.0 419.2 1497.9 431.9 1506.8 445.0 1513.9 458.4 1518.9 472.2 1522.0 486.0 1523.0 500.0" stroke="#2b2522" stroke-width="4" opacity="0.9"/>
<path d="M867.9 411.5 869.0 397.1 872.0 382.9 877.2 368.8 884.3 355.0 893.3 341.6 904.3 328.5 917.1 316.0 931.7 304.1 947.9 292.8 965.7 282.3 985.0 272.5 1005.6 263.7 1027.4 255.7 1050.3 248.7 1074.1 242.7 1098.7 237.7 1123.9 233.8 1149.6 231.0 1175.7 229.3 1201.9 228.8 1228.1 229.3 1254.1 231.0 1279.8 233.8 1305.1 237.7 1329.7 242.7 1353.5 248.7 1376.4 255.7 1398.2 263.7 1418.7 272.5 1438.0 282.3 1455.8 292.8 1472.0 304.1 1486.6 316.0 1499.4 328.5 1510.4 341.6 1519.5 355.0 1526.6 368.8 1531.7 382.9 1534.8 397.1 1535.8 411.5" stroke="#96642e" stroke-width="1.8" stroke-dasharray="0 260 90 60 160 50 120 400" stroke-dashoffset="120" opacity="0.6"/><path d="M867.2 424.3 868.2 410.0 871.3 395.8 876.4 381.8 883.5 368.1 892.6 354.6 903.5 341.7 916.3 329.2 930.9 317.3 947.1 306.1 964.9 295.6 984.1 285.9 1004.6 277.0 1026.4 269.1 1049.2 262.1 1073.0 256.1 1097.6 251.2 1122.8 247.3 1148.4 244.5 1174.4 242.8 1200.6 242.3 1226.7 242.8 1252.7 244.5 1278.4 247.3 1303.6 251.2 1328.2 256.1 1351.9 262.1 1374.8 269.1 1396.5 277.0 1417.1 285.9 1436.3 295.6 1454.1 306.1 1470.3 317.3 1484.8 329.2 1497.6 341.7 1508.6 354.6 1517.6 368.1 1524.7 381.8 1529.9 395.8 1532.9 410.0 1534.0 424.3" stroke="#96642e" stroke-width="1.8" stroke-dasharray="0 260 90 60 160 50 120 400" stroke-dashoffset="155" opacity="0.6"/><path d="M866.5 437.1 867.5 422.9 870.6 408.8 875.7 394.8 882.8 381.1 891.8 367.7 902.8 354.8 915.5 342.4 930.1 330.5 946.2 319.4 964.0 308.9 983.2 299.2 1003.7 290.4 1025.4 282.5 1048.2 275.5 1071.9 269.6 1096.5 264.7 1121.6 260.8 1147.2 258.0 1173.2 256.3 1199.3 255.8 1225.4 256.3 1251.4 258.0 1277.0 260.8 1302.1 264.7 1326.7 269.6 1350.4 275.5 1373.2 282.5 1394.9 290.4 1415.4 299.2 1434.6 308.9 1452.4 319.4 1468.5 330.5 1483.1 342.4 1495.8 354.8 1506.8 367.7 1515.8 381.1 1522.9 394.8 1528.0 408.8 1531.1 422.9 1532.1 437.1" stroke="#96642e" stroke-width="1.8" stroke-dasharray="0 260 90 60 160 50 120 400" stroke-dashoffset="52" opacity="0.6"/><path d="M865.8 450.0 866.8 435.8 869.9 421.7 875.0 407.8 882.0 394.1 891.1 380.8 902.0 367.9 914.7 355.6 929.2 343.8 945.4 332.6 963.1 322.2 982.2 312.6 1002.7 303.8 1024.4 295.9 1047.2 289.0 1070.9 283.0 1095.4 278.1 1120.5 274.3 1146.0 271.5 1171.9 269.9 1198.0 269.3 1224.1 269.9 1250.0 271.5 1275.6 274.3 1300.7 278.1 1325.2 283.0 1348.8 289.0 1371.6 295.9 1393.3 303.8 1413.8 312.6 1432.9 322.2 1450.6 332.6 1466.8 343.8 1481.3 355.6 1494.0 367.9 1505.0 380.8 1514.0 394.1 1521.1 407.8 1526.2 421.7 1529.2 435.8 1530.2 450.0" stroke="#96642e" stroke-width="1.8" stroke-dasharray="0 260 90 60 160 50 120 400" stroke-dashoffset="202" opacity="0.6"/><path d="M865.1 462.8 866.1 448.7 869.2 434.6 874.2 420.8 881.3 407.2 890.3 393.9 901.2 381.1 913.9 368.8 928.4 357.0 944.5 345.9 962.2 335.5 981.3 325.9 1001.8 317.2 1023.4 309.3 1046.2 302.4 1069.8 296.5 1094.2 291.6 1119.3 287.8 1144.8 285.0 1170.7 283.4 1196.7 282.8 1222.8 283.4 1248.6 285.0 1274.2 287.8 1299.2 291.6 1323.6 296.5 1347.3 302.4 1370.0 309.3 1391.7 317.2 1412.1 325.9 1431.2 335.5 1448.9 345.9 1465.0 357.0 1479.5 368.8 1492.2 381.1 1503.1 393.9 1512.2 407.2 1519.2 420.8 1524.3 434.6 1527.4 448.7 1528.4 462.8" stroke="#96642e" stroke-width="1.8" stroke-dasharray="0 260 90 60 160 50 120 400" stroke-dashoffset="245" opacity="0.6"/><path d="M864.4 475.6 865.4 461.6 868.4 447.6 873.5 433.8 880.6 420.2 889.6 407.0 900.4 394.2 913.1 381.9 927.6 370.2 943.7 359.2 961.3 348.8 980.4 339.3 1000.8 330.6 1022.5 322.7 1045.1 315.9 1068.7 310.0 1093.1 305.1 1118.2 301.3 1143.6 298.5 1169.5 296.9 1195.4 296.3 1221.4 296.9 1247.2 298.5 1272.7 301.3 1297.8 305.1 1322.1 310.0 1345.8 315.9 1368.4 322.7 1390.1 330.6 1410.5 339.3 1429.6 348.8 1447.2 359.2 1463.3 370.2 1477.7 381.9 1490.4 394.2 1501.3 407.0 1510.3 420.2 1517.4 433.8 1522.5 447.6 1525.5 461.6 1526.5 475.6" stroke="#96642e" stroke-width="1.8" stroke-dasharray="0 260 90 60 160 50 120 400" stroke-dashoffset="79" opacity="0.6"/>
</g></g>
<g clip-path="url(#cinb)"><path d="M989.0 410.9 989.4 403.8 990.7 396.7 992.7 389.7 995.6 382.7 999.3 375.9 1003.8 369.2 1009.1 362.6 1015.1 356.3 1021.8 350.1 1029.3 344.2 1037.4 338.6 1046.2 333.3 1055.6 328.2 1065.5 323.5 1076.0 319.2 1086.9 315.2 1098.3 311.5 1110.2 308.3 1122.3 305.5 1134.8 303.1 1147.5 301.1 1160.5 299.5 1173.6 298.4 1186.8 297.7 1200.0 297.5 1213.2 297.7 1226.4 298.4 1239.5 299.5 1252.5 301.1 1265.2 303.1 1277.7 305.5 1289.8 308.3 1301.7 311.5 1313.1 315.2 1324.0 319.2 1334.5 323.5 1344.4 328.2 1353.8 333.3 1362.6 338.6 1370.7 344.2 1378.2 350.1 1384.9 356.3 1390.9 362.6 1396.2 369.2 1400.7 375.9 1404.4 382.7 1407.3 389.7 1409.3 396.7 1410.6 403.8 1411.0 410.9 1411.0 518.0 1410.6 511.7 1409.3 505.4 1407.3 499.2 1404.4 493.1 1400.7 487.0 1396.2 481.1 1390.9 475.3 1384.9 469.7 1378.2 464.3 1370.7 459.1 1362.6 454.1 1353.8 449.4 1344.4 445.0 1334.5 440.8 1324.0 436.9 1313.1 433.4 1301.7 430.2 1289.8 427.3 1277.7 424.8 1265.2 422.7 1252.5 420.9 1239.5 419.6 1226.4 418.6 1213.2 418.0 1200.0 417.8 1186.8 418.0 1173.6 418.6 1160.5 419.6 1147.5 420.9 1134.8 422.7 1122.3 424.8 1110.2 427.3 1098.3 430.2 1086.9 433.4 1076.0 436.9 1065.5 440.8 1055.6 445.0 1046.2 449.4 1037.4 454.1 1029.3 459.1 1021.8 464.3 1015.1 469.7 1009.1 475.3 1003.8 481.1 999.3 487.0 995.6 493.1 992.7 499.2 990.7 505.4 989.4 511.7 989.0 518.0Z" fill="url(#ginb)"/><g filter="url(#wv)" fill="none">
<path d="M989.0 417.6 989.7 408.8 991.6 400.0 994.8 391.3 999.3 382.8 1005.1 374.5 1012.0 366.5 1020.1 358.8 1029.3 351.4 1039.6 344.5 1050.8 338.0 1063.0 332.0 1076.0 326.5 1089.8 321.6 1104.2 317.3 1119.3 313.6 1134.8 310.5 1150.7 308.1 1167.0 306.4 1183.4 305.4 1200.0 305.0 1216.6 305.4 1233.0 306.4 1249.3 308.1 1265.2 310.5 1280.7 313.6 1295.8 317.3 1310.2 321.6 1324.0 326.5 1337.0 332.0 1349.2 338.0 1360.4 344.5 1370.7 351.4 1379.9 358.8 1388.0 366.5 1394.9 374.5 1400.7 382.8 1405.2 391.3 1408.4 400.0 1410.3 408.8 1411.0 417.6M989.0 431.0 989.7 422.3 991.6 413.6 994.8 405.1 999.3 396.7 1005.1 388.5 1012.0 380.6 1020.1 373.0 1029.3 365.8 1039.6 358.9 1050.8 352.5 1063.0 346.6 1076.0 341.2 1089.8 336.4 1104.2 332.1 1119.3 328.5 1134.8 325.5 1150.7 323.1 1167.0 321.4 1183.4 320.4 1200.0 320.1 1216.6 320.4 1233.0 321.4 1249.3 323.1 1265.2 325.5 1280.7 328.5 1295.8 332.1 1310.2 336.4 1324.0 341.2 1337.0 346.6 1349.2 352.5 1360.4 358.9 1370.7 365.8 1379.9 373.0 1388.0 380.6 1394.9 388.5 1400.7 396.7 1405.2 405.1 1408.4 413.6 1410.3 422.3 1411.0 431.0M989.0 444.4 989.7 435.8 991.6 427.3 994.8 418.9 999.3 410.6 1005.1 402.6 1012.0 394.8 1020.1 387.3 1029.3 380.1 1039.6 373.4 1050.8 367.1 1063.0 361.3 1076.0 356.0 1089.8 351.2 1104.2 347.0 1119.3 343.4 1134.8 340.4 1150.7 338.1 1167.0 336.4 1183.4 335.4 1200.0 335.1 1216.6 335.4 1233.0 336.4 1249.3 338.1 1265.2 340.4 1280.7 343.4 1295.8 347.0 1310.2 351.2 1324.0 356.0 1337.0 361.3 1349.2 367.1 1360.4 373.4 1370.7 380.1 1379.9 387.3 1388.0 394.8 1394.9 402.6 1400.7 410.6 1405.2 418.9 1408.4 427.3 1410.3 435.8 1411.0 444.4M989.0 457.8 989.7 449.3 991.6 440.9 994.8 432.6 999.3 424.5 1005.1 416.6 1012.0 408.9 1020.1 401.5 1029.3 394.5 1039.6 387.9 1050.8 381.7 1063.0 375.9 1076.0 370.7 1089.8 366.0 1104.2 361.9 1119.3 358.3 1134.8 355.4 1150.7 353.1 1167.0 351.5 1183.4 350.5 1200.0 350.1 1216.6 350.5 1233.0 351.5 1249.3 353.1 1265.2 355.4 1280.7 358.3 1295.8 361.9 1310.2 366.0 1324.0 370.7 1337.0 375.9 1349.2 381.7 1360.4 387.9 1370.7 394.5 1379.9 401.5 1388.0 408.9 1394.9 416.6 1400.7 424.5 1405.2 432.6 1408.4 440.9 1410.3 449.3 1411.0 457.8M989.0 471.1 989.7 462.8 991.6 454.6 994.8 446.4 999.3 438.4 1005.1 430.6 1012.0 423.0 1020.1 415.8 1029.3 408.9 1039.6 402.3 1050.8 396.2 1063.0 390.6 1076.0 385.4 1089.8 380.8 1104.2 376.7 1119.3 373.2 1134.8 370.4 1150.7 368.1 1167.0 366.5 1183.4 365.5 1200.0 365.2 1216.6 365.5 1233.0 366.5 1249.3 368.1 1265.2 370.4 1280.7 373.2 1295.8 376.7 1310.2 380.8 1324.0 385.4 1337.0 390.6 1349.2 396.2 1360.4 402.3 1370.7 408.9 1379.9 415.8 1388.0 423.0 1394.9 430.6 1400.7 438.4 1405.2 446.4 1408.4 454.6 1410.3 462.8 1411.0 471.1M989.0 484.5 989.7 476.3 991.6 468.2 994.8 460.2 999.3 452.3 1005.1 444.6 1012.0 437.2 1020.1 430.0 1029.3 423.2 1039.6 416.8 1050.8 410.8 1063.0 405.2 1076.0 400.1 1089.8 395.6 1104.2 391.6 1119.3 388.1 1134.8 385.3 1150.7 383.1 1167.0 381.5 1183.4 380.5 1200.0 380.2 1216.6 380.5 1233.0 381.5 1249.3 383.1 1265.2 385.3 1280.7 388.1 1295.8 391.6 1310.2 395.6 1324.0 400.1 1337.0 405.2 1349.2 410.8 1360.4 416.8 1370.7 423.2 1379.9 430.0 1388.0 437.2 1394.9 444.6 1400.7 452.3 1405.2 460.2 1408.4 468.2 1410.3 476.3 1411.0 484.5M989.0 497.9 989.7 489.9 991.6 481.9 994.8 473.9 999.3 466.2 1005.1 458.6 1012.0 451.3 1020.1 444.3 1029.3 437.6 1039.6 431.2 1050.8 425.3 1063.0 419.8 1076.0 414.9 1089.8 410.4 1104.2 406.4 1119.3 403.1 1134.8 400.3 1150.7 398.1 1167.0 396.5 1183.4 395.6 1200.0 395.2 1216.6 395.6 1233.0 396.5 1249.3 398.1 1265.2 400.3 1280.7 403.1 1295.8 406.4 1310.2 410.4 1324.0 414.9 1337.0 419.8 1349.2 425.3 1360.4 431.2 1370.7 437.6 1379.9 444.3 1388.0 451.3 1394.9 458.6 1400.7 466.2 1405.2 473.9 1408.4 481.9 1410.3 489.9 1411.0 497.9M989.0 511.3 989.7 503.4 991.6 495.5 994.8 487.7 999.3 480.1 1005.1 472.6 1012.0 465.4 1020.1 458.5 1029.3 451.9 1039.6 445.7 1050.8 439.9 1063.0 434.5 1076.0 429.6 1089.8 425.2 1104.2 421.3 1119.3 418.0 1134.8 415.2 1150.7 413.1 1167.0 411.5 1183.4 410.6 1200.0 410.3 1216.6 410.6 1233.0 411.5 1249.3 413.1 1265.2 415.2 1280.7 418.0 1295.8 421.3 1310.2 425.2 1324.0 429.6 1337.0 434.5 1349.2 439.9 1360.4 445.7 1370.7 451.9 1379.9 458.5 1388.0 465.4 1394.9 472.6 1400.7 480.1 1405.2 487.7 1408.4 495.5 1410.3 503.4 1411.0 511.3M989.0 524.7 989.7 516.9 991.6 509.1 994.8 501.5 999.3 494.0 1005.1 486.7 1012.0 479.6 1020.1 472.8 1029.3 466.3 1039.6 460.2 1050.8 454.4 1063.0 449.1 1076.0 444.3 1089.8 440.0 1104.2 436.1 1119.3 432.9 1134.8 430.2 1150.7 428.1 1167.0 426.5 1183.4 425.6 1200.0 425.3 1216.6 425.6 1233.0 426.5 1249.3 428.1 1265.2 430.2 1280.7 432.9 1295.8 436.1 1310.2 440.0 1324.0 444.3 1337.0 449.1 1349.2 454.4 1360.4 460.2 1370.7 466.3 1379.9 472.8 1388.0 479.6 1394.9 486.7 1400.7 494.0 1405.2 501.5 1408.4 509.1 1410.3 516.9 1411.0 524.7" stroke="#4c4947" stroke-width="6" opacity="0.75"/>
<path d="M989.0 410.9 989.7 402.0 991.6 393.2 994.8 384.4 999.3 375.9 1005.1 367.5 1012.0 359.4 1020.1 351.6 1029.3 344.2 1039.6 337.3 1050.8 330.7 1063.0 324.7 1076.0 319.2 1089.8 314.2 1104.2 309.9 1119.3 306.1 1134.8 303.1 1150.7 300.6 1167.0 298.9 1183.4 297.8 1200.0 297.5 1216.6 297.8 1233.0 298.9 1249.3 300.6 1265.2 303.1 1280.7 306.1 1295.8 309.9 1310.2 314.2 1324.0 319.2 1337.0 324.7 1349.2 330.7 1360.4 337.3 1370.7 344.2 1379.9 351.6 1388.0 359.4 1394.9 367.5 1400.7 375.9 1405.2 384.4 1408.4 393.2 1410.3 402.0 1411.0 410.9M989.0 424.3 989.7 415.5 991.6 406.8 994.8 398.2 999.3 389.8 1005.1 381.5 1012.0 373.6 1020.1 365.9 1029.3 358.6 1039.6 351.7 1050.8 345.3 1063.0 339.3 1076.0 333.9 1089.8 329.0 1104.2 324.7 1119.3 321.0 1134.8 318.0 1150.7 315.6 1167.0 313.9 1183.4 312.9 1200.0 312.5 1216.6 312.9 1233.0 313.9 1249.3 315.6 1265.2 318.0 1280.7 321.0 1295.8 324.7 1310.2 329.0 1324.0 333.9 1337.0 339.3 1349.2 345.3 1360.4 351.7 1370.7 358.6 1379.9 365.9 1388.0 373.6 1394.9 381.5 1400.7 389.8 1405.2 398.2 1408.4 406.8 1410.3 415.5 1411.0 424.3M989.0 437.7 989.7 429.0 991.6 420.5 994.8 412.0 999.3 403.7 1005.1 395.5 1012.0 387.7 1020.1 380.1 1029.3 373.0 1039.6 366.2 1050.8 359.8 1063.0 354.0 1076.0 348.6 1089.8 343.8 1104.2 339.6 1119.3 336.0 1134.8 333.0 1150.7 330.6 1167.0 328.9 1183.4 327.9 1200.0 327.6 1216.6 327.9 1233.0 328.9 1249.3 330.6 1265.2 333.0 1280.7 336.0 1295.8 339.6 1310.2 343.8 1324.0 348.6 1337.0 354.0 1349.2 359.8 1360.4 366.2 1370.7 373.0 1379.9 380.1 1388.0 387.7 1394.9 395.5 1400.7 403.7 1405.2 412.0 1408.4 420.5 1410.3 429.0 1411.0 437.7M989.0 451.1 989.7 442.6 991.6 434.1 994.8 425.7 999.3 417.5 1005.1 409.6 1012.0 401.8 1020.1 394.4 1029.3 387.3 1039.6 380.6 1050.8 374.4 1063.0 368.6 1076.0 363.3 1089.8 358.6 1104.2 354.4 1119.3 350.9 1134.8 347.9 1150.7 345.6 1167.0 343.9 1183.4 342.9 1200.0 342.6 1216.6 342.9 1233.0 343.9 1249.3 345.6 1265.2 347.9 1280.7 350.9 1295.8 354.4 1310.2 358.6 1324.0 363.3 1337.0 368.6 1349.2 374.4 1360.4 380.6 1370.7 387.3 1379.9 394.4 1388.0 401.8 1394.9 409.6 1400.7 417.5 1405.2 425.7 1408.4 434.1 1410.3 442.6 1411.0 451.1M989.0 464.4 989.7 456.1 991.6 447.7 994.8 439.5 999.3 431.4 1005.1 423.6 1012.0 416.0 1020.1 408.6 1029.3 401.7 1039.6 395.1 1050.8 388.9 1063.0 383.2 1076.0 378.0 1089.8 373.4 1104.2 369.3 1119.3 365.8 1134.8 362.9 1150.7 360.6 1167.0 359.0 1183.4 358.0 1200.0 357.6 1216.6 358.0 1233.0 359.0 1249.3 360.6 1265.2 362.9 1280.7 365.8 1295.8 369.3 1310.2 373.4 1324.0 378.0 1337.0 383.2 1349.2 388.9 1360.4 395.1 1370.7 401.7 1379.9 408.6 1388.0 416.0 1394.9 423.6 1400.7 431.4 1405.2 439.5 1408.4 447.7 1410.3 456.1 1411.0 464.4M989.0 477.8 989.7 469.6 991.6 461.4 994.8 453.3 999.3 445.3 1005.1 437.6 1012.0 430.1 1020.1 422.9 1029.3 416.0 1039.6 409.5 1050.8 403.5 1063.0 397.9 1076.0 392.8 1089.8 388.2 1104.2 384.1 1119.3 380.7 1134.8 377.8 1150.7 375.6 1167.0 374.0 1183.4 373.0 1200.0 372.7 1216.6 373.0 1233.0 374.0 1249.3 375.6 1265.2 377.8 1280.7 380.7 1295.8 384.1 1310.2 388.2 1324.0 392.8 1337.0 397.9 1349.2 403.5 1360.4 409.5 1370.7 416.0 1379.9 422.9 1388.0 430.1 1394.9 437.6 1400.7 445.3 1405.2 453.3 1408.4 461.4 1410.3 469.6 1411.0 477.8M989.0 491.2 989.7 483.1 991.6 475.0 994.8 467.1 999.3 459.2 1005.1 451.6 1012.0 444.2 1020.1 437.1 1029.3 430.4 1039.6 424.0 1050.8 418.0 1063.0 412.5 1076.0 407.5 1089.8 403.0 1104.2 399.0 1119.3 395.6 1134.8 392.8 1150.7 390.6 1167.0 389.0 1183.4 388.0 1200.0 387.7 1216.6 388.0 1233.0 389.0 1249.3 390.6 1265.2 392.8 1280.7 395.6 1295.8 399.0 1310.2 403.0 1324.0 407.5 1337.0 412.5 1349.2 418.0 1360.4 424.0 1370.7 430.4 1379.9 437.1 1388.0 444.2 1394.9 451.6 1400.7 459.2 1405.2 467.1 1408.4 475.0 1410.3 483.1 1411.0 491.2M989.0 504.6 989.7 496.6 991.6 488.7 994.8 480.8 999.3 473.1 1005.1 465.6 1012.0 458.4 1020.1 451.4 1029.3 444.7 1039.6 438.5 1050.8 432.6 1063.0 427.2 1076.0 422.2 1089.8 417.8 1104.2 413.9 1119.3 410.5 1134.8 407.7 1150.7 405.6 1167.0 404.0 1183.4 403.1 1200.0 402.8 1216.6 403.1 1233.0 404.0 1249.3 405.6 1265.2 407.7 1280.7 410.5 1295.8 413.9 1310.2 417.8 1324.0 422.2 1337.0 427.2 1349.2 432.6 1360.4 438.5 1370.7 444.7 1379.9 451.4 1388.0 458.4 1394.9 465.6 1400.7 473.1 1405.2 480.8 1408.4 488.7 1410.3 496.6 1411.0 504.6M989.0 518.0 989.7 510.1 991.6 502.3 994.8 494.6 999.3 487.0 1005.1 479.7 1012.0 472.5 1020.1 465.6 1029.3 459.1 1039.6 452.9 1050.8 447.1 1063.0 441.8 1076.0 436.9 1089.8 432.6 1104.2 428.7 1119.3 425.4 1134.8 422.7 1150.7 420.6 1167.0 419.0 1183.4 418.1 1200.0 417.8 1216.6 418.1 1233.0 419.0 1249.3 420.6 1265.2 422.7 1280.7 425.4 1295.8 428.7 1310.2 432.6 1324.0 436.9 1337.0 441.8 1349.2 447.1 1360.4 452.9 1370.7 459.1 1379.9 465.6 1388.0 472.5 1394.9 479.7 1400.7 487.0 1405.2 494.6 1408.4 502.3 1410.3 510.1 1411.0 518.0" stroke="#2a2624" stroke-width="3.5" opacity="0.85"/>
<path d="M989.0 439.0 989.7 430.4 991.6 421.8 994.8 413.3 999.3 405.0 1005.1 396.9 1012.0 389.1 1020.1 381.6 1029.3 374.4 1039.6 367.6 1050.8 361.3 1063.0 355.4 1076.0 350.1 1089.8 345.3 1104.2 341.1 1119.3 337.4 1134.8 334.5 1150.7 332.1 1167.0 330.4 1183.4 329.4 1200.0 329.1 1216.6 329.4 1233.0 330.4 1249.3 332.1 1265.2 334.5 1280.7 337.4 1295.8 341.1 1310.2 345.3 1324.0 350.1 1337.0 355.4 1349.2 361.3 1360.4 367.6 1370.7 374.4 1379.9 381.6 1388.0 389.1 1394.9 396.9 1400.7 405.0 1405.2 413.3 1408.4 421.8 1410.3 430.4 1411.0 439.0" stroke="#7a5228" stroke-width="1.4" stroke-dasharray="120 80 60 140" stroke-dashoffset="130" opacity="0.5"/><path d="M989.0 452.4 989.7 443.9 991.6 435.5 994.8 427.1 999.3 418.9 1005.1 411.0 1012.0 403.2 1020.1 395.8 1029.3 388.8 1039.6 382.1 1050.8 375.8 1063.0 370.1 1076.0 364.8 1089.8 360.1 1104.2 355.9 1119.3 352.4 1134.8 349.4 1150.7 347.1 1167.0 345.4 1183.4 344.5 1200.0 344.1 1216.6 344.5 1233.0 345.4 1249.3 347.1 1265.2 349.4 1280.7 352.4 1295.8 355.9 1310.2 360.1 1324.0 364.8 1337.0 370.1 1349.2 375.8 1360.4 382.1 1370.7 388.8 1379.9 395.8 1388.0 403.2 1394.9 411.0 1400.7 418.9 1405.2 427.1 1408.4 435.5 1410.3 443.9 1411.0 452.4" stroke="#7a5228" stroke-width="1.4" stroke-dasharray="120 80 60 140" stroke-dashoffset="183" opacity="0.5"/><path d="M989.0 465.8 989.7 457.4 991.6 449.1 994.8 440.9 999.3 432.8 1005.1 425.0 1012.0 417.4 1020.1 410.1 1029.3 403.1 1039.6 396.5 1050.8 390.4 1063.0 384.7 1076.0 379.5 1089.8 374.9 1104.2 370.8 1119.3 367.3 1134.8 364.4 1150.7 362.1 1167.0 360.5 1183.4 359.5 1200.0 359.2 1216.6 359.5 1233.0 360.5 1249.3 362.1 1265.2 364.4 1280.7 367.3 1295.8 370.8 1310.2 374.9 1324.0 379.5 1337.0 384.7 1349.2 390.4 1360.4 396.5 1370.7 403.1 1379.9 410.1 1388.0 417.4 1394.9 425.0 1400.7 432.8 1405.2 440.9 1408.4 449.1 1410.3 457.4 1411.0 465.8" stroke="#7a5228" stroke-width="1.4" stroke-dasharray="120 80 60 140" stroke-dashoffset="271" opacity="0.5"/><path d="M989.0 479.2 989.7 470.9 991.6 462.8 994.8 454.7 999.3 446.7 1005.1 439.0 1012.0 431.5 1020.1 424.3 1029.3 417.5 1039.6 411.0 1050.8 404.9 1063.0 399.3 1076.0 394.2 1089.8 389.7 1104.2 385.6 1119.3 382.2 1134.8 379.3 1150.7 377.1 1167.0 375.5 1183.4 374.5 1200.0 374.2 1216.6 374.5 1233.0 375.5 1249.3 377.1 1265.2 379.3 1280.7 382.2 1295.8 385.6 1310.2 389.7 1324.0 394.2 1337.0 399.3 1349.2 404.9 1360.4 411.0 1370.7 417.5 1379.9 424.3 1388.0 431.5 1394.9 439.0 1400.7 446.7 1405.2 454.7 1408.4 462.8 1410.3 470.9 1411.0 479.2" stroke="#7a5228" stroke-width="1.4" stroke-dasharray="120 80 60 140" stroke-dashoffset="14" opacity="0.5"/><path d="M989.0 492.6 989.7 484.5 991.6 476.4 994.8 468.4 999.3 460.6 1005.1 453.0 1012.0 445.7 1020.1 438.6 1029.3 431.8 1039.6 425.5 1050.8 419.5 1063.0 414.0 1076.0 409.0 1089.8 404.5 1104.2 400.5 1119.3 397.1 1134.8 394.3 1150.7 392.1 1167.0 390.5 1183.4 389.5 1200.0 389.2 1216.6 389.5 1233.0 390.5 1249.3 392.1 1265.2 394.3 1280.7 397.1 1295.8 400.5 1310.2 404.5 1324.0 409.0 1337.0 414.0 1349.2 419.5 1360.4 425.5 1370.7 431.8 1379.9 438.6 1388.0 445.7 1394.9 453.0 1400.7 460.6 1405.2 468.4 1408.4 476.4 1410.3 484.5 1411.0 492.6" stroke="#7a5228" stroke-width="1.4" stroke-dasharray="120 80 60 140" stroke-dashoffset="238" opacity="0.5"/><path d="M989.0 506.0 989.7 498.0 991.6 490.0 994.8 482.2 999.3 474.5 1005.1 467.0 1012.0 459.8 1020.1 452.8 1029.3 446.2 1039.6 439.9 1050.8 434.0 1063.0 428.6 1076.0 423.7 1089.8 419.3 1104.2 415.3 1119.3 412.0 1134.8 409.2 1150.7 407.1 1167.0 405.5 1183.4 404.6 1200.0 404.3 1216.6 404.6 1233.0 405.5 1249.3 407.1 1265.2 409.2 1280.7 412.0 1295.8 415.3 1310.2 419.3 1324.0 423.7 1337.0 428.6 1349.2 434.0 1360.4 439.9 1370.7 446.2 1379.9 452.8 1388.0 459.8 1394.9 467.0 1400.7 474.5 1405.2 482.2 1408.4 490.0 1410.3 498.0 1411.0 506.0" stroke="#7a5228" stroke-width="1.4" stroke-dasharray="120 80 60 140" stroke-dashoffset="127" opacity="0.5"/><path d="M989.0 519.3 989.7 511.5 991.6 503.7 994.8 496.0 999.3 488.4 1005.1 481.1 1012.0 473.9 1020.1 467.1 1029.3 460.5 1039.6 454.4 1050.8 448.6 1063.0 443.3 1076.0 438.4 1089.8 434.0 1104.2 430.2 1119.3 426.9 1134.8 424.2 1150.7 422.1 1167.0 420.5 1183.4 419.6 1200.0 419.3 1216.6 419.6 1233.0 420.5 1249.3 422.1 1265.2 424.2 1280.7 426.9 1295.8 430.2 1310.2 434.0 1324.0 438.4 1337.0 443.3 1349.2 448.6 1360.4 454.4 1370.7 460.5 1379.9 467.1 1388.0 473.9 1394.9 481.1 1400.7 488.4 1405.2 496.0 1408.4 503.7 1410.3 511.5 1411.0 519.3" stroke="#7a5228" stroke-width="1.4" stroke-dasharray="120 80 60 140" stroke-dashoffset="26" opacity="0.5"/>
</g></g>
<g clip-path="url(#cinf)"><path d="M989.0 410.9 989.4 418.0 990.7 425.1 992.7 432.1 995.6 439.1 999.3 445.9 1003.8 452.6 1009.1 459.2 1015.1 465.5 1021.8 471.7 1029.3 477.6 1037.4 483.2 1046.2 488.5 1055.6 493.6 1065.5 498.3 1076.0 502.6 1086.9 506.6 1098.3 510.3 1110.2 513.5 1122.3 516.3 1134.8 518.7 1147.5 520.7 1160.5 522.3 1173.6 523.4 1186.8 524.1 1200.0 524.3 1213.2 524.1 1226.4 523.4 1239.5 522.3 1252.5 520.7 1265.2 518.7 1277.7 516.3 1289.8 513.5 1301.7 510.3 1313.1 506.6 1324.0 502.6 1334.5 498.3 1344.4 493.6 1353.8 488.5 1362.6 483.2 1370.7 477.6 1378.2 471.7 1384.9 465.5 1390.9 459.2 1396.2 452.6 1400.7 445.9 1404.4 439.1 1407.3 432.1 1409.3 425.1 1410.6 418.0 1411.0 410.9 1411.0 556.0 1410.6 562.0 1409.3 568.0 1407.3 574.0 1404.4 579.9 1400.7 585.7 1396.2 591.3 1390.9 596.9 1384.9 602.2 1378.2 607.4 1370.7 612.4 1362.6 617.2 1353.8 621.7 1344.4 626.0 1334.5 630.0 1324.0 633.7 1313.1 637.1 1301.7 640.1 1289.8 642.9 1277.7 645.3 1265.2 647.3 1252.5 649.0 1239.5 650.3 1226.4 651.2 1213.2 651.8 1200.0 652.0 1186.8 651.8 1173.6 651.2 1160.5 650.3 1147.5 649.0 1134.8 647.3 1122.3 645.3 1110.2 642.9 1098.3 640.1 1086.9 637.1 1076.0 633.7 1065.5 630.0 1055.6 626.0 1046.2 621.7 1037.4 617.2 1029.3 612.4 1021.8 607.4 1015.1 602.2 1009.1 596.9 1003.8 591.3 999.3 585.7 995.6 579.9 992.7 574.0 990.7 568.0 989.4 562.0 989.0 556.0Z" fill="url(#ginf)"/><g filter="url(#wv)" fill="none">
<path d="M989.0 419.0 989.7 427.8 991.6 436.5 994.8 445.2 999.3 453.7 1005.1 462.0 1012.0 470.0 1020.1 477.7 1029.3 485.0 1039.6 492.0 1050.8 498.5 1063.0 504.5 1076.0 509.9 1089.8 514.8 1104.2 519.1 1119.3 522.8 1134.8 525.9 1150.7 528.3 1167.0 530.0 1183.4 531.0 1200.0 531.4 1216.6 531.0 1233.0 530.0 1249.3 528.3 1265.2 525.9 1280.7 522.8 1295.8 519.1 1310.2 514.8 1324.0 509.9 1337.0 504.5 1349.2 498.5 1360.4 492.0 1370.7 485.0 1379.9 477.7 1388.0 470.0 1394.9 462.0 1400.7 453.7 1405.2 445.2 1408.4 436.5 1410.3 427.8 1411.0 419.0M989.0 435.1 989.7 443.8 991.6 452.4 994.8 460.9 999.3 469.2 1005.1 477.4 1012.0 485.2 1020.1 492.8 1029.3 500.0 1039.6 506.8 1050.8 513.2 1063.0 519.1 1076.0 524.5 1089.8 529.3 1104.2 533.5 1119.3 537.2 1134.8 540.2 1150.7 542.5 1167.0 544.2 1183.4 545.2 1200.0 545.6 1216.6 545.2 1233.0 544.2 1249.3 542.5 1265.2 540.2 1280.7 537.2 1295.8 533.5 1310.2 529.3 1324.0 524.5 1337.0 519.1 1349.2 513.2 1360.4 506.8 1370.7 500.0 1379.9 492.8 1388.0 485.2 1394.9 477.4 1400.7 469.2 1405.2 460.9 1408.4 452.4 1410.3 443.8 1411.0 435.1M989.0 451.2 989.7 459.7 991.6 468.2 994.8 476.5 999.3 484.8 1005.1 492.8 1012.0 500.5 1020.1 507.9 1029.3 515.0 1039.6 521.7 1050.8 528.0 1063.0 533.8 1076.0 539.0 1089.8 543.8 1104.2 547.9 1119.3 551.5 1134.8 554.5 1150.7 556.8 1167.0 558.4 1183.4 559.4 1200.0 559.8 1216.6 559.4 1233.0 558.4 1249.3 556.8 1265.2 554.5 1280.7 551.5 1295.8 547.9 1310.2 543.8 1324.0 539.0 1337.0 533.8 1349.2 528.0 1360.4 521.7 1370.7 515.0 1379.9 507.9 1388.0 500.5 1394.9 492.8 1400.7 484.8 1405.2 476.5 1408.4 468.2 1410.3 459.7 1411.0 451.2M989.0 467.3 989.7 475.7 991.6 484.0 994.8 492.2 999.3 500.3 1005.1 508.1 1012.0 515.7 1020.1 523.0 1029.3 530.0 1039.6 536.6 1050.8 542.7 1063.0 548.4 1076.0 553.6 1089.8 558.2 1104.2 562.3 1119.3 565.8 1134.8 568.7 1150.7 571.0 1167.0 572.6 1183.4 573.6 1200.0 574.0 1216.6 573.6 1233.0 572.6 1249.3 571.0 1265.2 568.7 1280.7 565.8 1295.8 562.3 1310.2 558.2 1324.0 553.6 1337.0 548.4 1349.2 542.7 1360.4 536.6 1370.7 530.0 1379.9 523.0 1388.0 515.7 1394.9 508.1 1400.7 500.3 1405.2 492.2 1408.4 484.0 1410.3 475.7 1411.0 467.3M989.0 483.4 989.7 491.7 991.6 499.8 994.8 507.9 999.3 515.8 1005.1 523.5 1012.0 531.0 1020.1 538.2 1029.3 545.0 1039.6 551.4 1050.8 557.5 1063.0 563.1 1076.0 568.2 1089.8 572.7 1104.2 576.7 1119.3 580.2 1134.8 583.0 1150.7 585.3 1167.0 586.9 1183.4 587.8 1200.0 588.1 1216.6 587.8 1233.0 586.9 1249.3 585.3 1265.2 583.0 1280.7 580.2 1295.8 576.7 1310.2 572.7 1324.0 568.2 1337.0 563.1 1349.2 557.5 1360.4 551.4 1370.7 545.0 1379.9 538.2 1388.0 531.0 1394.9 523.5 1400.7 515.8 1405.2 507.9 1408.4 499.8 1410.3 491.7 1411.0 483.4M989.0 499.6 989.7 507.6 991.6 515.6 994.8 523.6 999.3 531.3 1005.1 538.9 1012.0 546.2 1020.1 553.3 1029.3 560.0 1039.6 566.3 1050.8 572.2 1063.0 577.7 1076.0 582.7 1089.8 587.2 1104.2 591.1 1119.3 594.5 1134.8 597.3 1150.7 599.5 1167.0 601.1 1183.4 602.0 1200.0 602.3 1216.6 602.0 1233.0 601.1 1249.3 599.5 1265.2 597.3 1280.7 594.5 1295.8 591.1 1310.2 587.2 1324.0 582.7 1337.0 577.7 1349.2 572.2 1360.4 566.3 1370.7 560.0 1379.9 553.3 1388.0 546.2 1394.9 538.9 1400.7 531.3 1405.2 523.6 1408.4 515.6 1410.3 507.6 1411.0 499.6M989.0 515.7 989.7 523.6 991.6 531.5 994.8 539.2 999.3 546.9 1005.1 554.3 1012.0 561.5 1020.1 568.4 1029.3 575.0 1039.6 581.2 1050.8 587.0 1063.0 592.4 1076.0 597.3 1089.8 601.7 1104.2 605.5 1119.3 608.9 1134.8 611.6 1150.7 613.7 1167.0 615.3 1183.4 616.2 1200.0 616.5 1216.6 616.2 1233.0 615.3 1249.3 613.7 1265.2 611.6 1280.7 608.9 1295.8 605.5 1310.2 601.7 1324.0 597.3 1337.0 592.4 1349.2 587.0 1360.4 581.2 1370.7 575.0 1379.9 568.4 1388.0 561.5 1394.9 554.3 1400.7 546.9 1405.2 539.2 1408.4 531.5 1410.3 523.6 1411.0 515.7M989.0 531.8 989.7 539.6 991.6 547.3 994.8 554.9 999.3 562.4 1005.1 569.7 1012.0 576.7 1020.1 583.5 1029.3 589.9 1039.6 596.0 1050.8 601.7 1063.0 607.0 1076.0 611.8 1089.8 616.1 1104.2 619.9 1119.3 623.2 1134.8 625.9 1150.7 628.0 1167.0 629.5 1183.4 630.4 1200.0 630.7 1216.6 630.4 1233.0 629.5 1249.3 628.0 1265.2 625.9 1280.7 623.2 1295.8 619.9 1310.2 616.1 1324.0 611.8 1337.0 607.0 1349.2 601.7 1360.4 596.0 1370.7 589.9 1379.9 583.5 1388.0 576.7 1394.9 569.7 1400.7 562.4 1405.2 554.9 1408.4 547.3 1410.3 539.6 1411.0 531.8M989.0 547.9 989.7 555.5 991.6 563.1 994.8 570.6 999.3 577.9 1005.1 585.0 1012.0 592.0 1020.1 598.6 1029.3 604.9 1039.6 610.9 1050.8 616.5 1063.0 621.7 1076.0 626.4 1089.8 630.6 1104.2 634.3 1119.3 637.5 1134.8 640.2 1150.7 642.2 1167.0 643.7 1183.4 644.6 1200.0 644.9 1216.6 644.6 1233.0 643.7 1249.3 642.2 1265.2 640.2 1280.7 637.5 1295.8 634.3 1310.2 630.6 1324.0 626.4 1337.0 621.7 1349.2 616.5 1360.4 610.9 1370.7 604.9 1379.9 598.6 1388.0 592.0 1394.9 585.0 1400.7 577.9 1405.2 570.6 1408.4 563.1 1410.3 555.5 1411.0 547.9M989.0 564.1 989.7 571.5 991.6 578.9 994.8 586.2 999.3 593.4 1005.1 600.4 1012.0 607.2 1020.1 613.7 1029.3 619.9 1039.6 625.8 1050.8 631.3 1063.0 636.3 1076.0 640.9 1089.8 645.1 1104.2 648.7 1119.3 651.9 1134.8 654.4 1150.7 656.5 1167.0 657.9 1183.4 658.8 1200.0 659.1 1216.6 658.8 1233.0 657.9 1249.3 656.5 1265.2 654.4 1280.7 651.9 1295.8 648.7 1310.2 645.1 1324.0 640.9 1337.0 636.3 1349.2 631.3 1360.4 625.8 1370.7 619.9 1379.9 613.7 1388.0 607.2 1394.9 600.4 1400.7 593.4 1405.2 586.2 1408.4 578.9 1410.3 571.5 1411.0 564.1" stroke="#403d3b" stroke-width="6" opacity="0.7"/>
<path d="M989.0 410.9 989.7 419.8 991.6 428.6 994.8 437.4 999.3 445.9 1005.1 454.3 1012.0 462.4 1020.1 470.2 1029.3 477.6 1039.6 484.5 1050.8 491.1 1063.0 497.1 1076.0 502.6 1089.8 507.6 1104.2 511.9 1119.3 515.7 1134.8 518.7 1150.7 521.2 1167.0 522.9 1183.4 524.0 1200.0 524.3 1216.6 524.0 1233.0 522.9 1249.3 521.2 1265.2 518.7 1280.7 515.7 1295.8 511.9 1310.2 507.6 1324.0 502.6 1337.0 497.1 1349.2 491.1 1360.4 484.5 1370.7 477.6 1379.9 470.2 1388.0 462.4 1394.9 454.3 1400.7 445.9 1405.2 437.4 1408.4 428.6 1410.3 419.8 1411.0 410.9M989.0 427.0 989.7 435.8 991.6 444.5 994.8 453.0 999.3 461.5 1005.1 469.7 1012.0 477.6 1020.1 485.3 1029.3 492.5 1039.6 499.4 1050.8 505.8 1063.0 511.8 1076.0 517.2 1089.8 522.1 1104.2 526.3 1119.3 530.0 1134.8 533.0 1150.7 535.4 1167.0 537.1 1183.4 538.1 1200.0 538.5 1216.6 538.1 1233.0 537.1 1249.3 535.4 1265.2 533.0 1280.7 530.0 1295.8 526.3 1310.2 522.1 1324.0 517.2 1337.0 511.8 1349.2 505.8 1360.4 499.4 1370.7 492.5 1379.9 485.3 1388.0 477.6 1394.9 469.7 1400.7 461.5 1405.2 453.0 1408.4 444.5 1410.3 435.8 1411.0 427.0M989.0 443.1 989.7 451.7 991.6 460.3 994.8 468.7 999.3 477.0 1005.1 485.1 1012.0 492.9 1020.1 500.4 1029.3 507.5 1039.6 514.3 1050.8 520.6 1063.0 526.4 1076.0 531.8 1089.8 536.5 1104.2 540.7 1119.3 544.3 1134.8 547.3 1150.7 549.7 1167.0 551.3 1183.4 552.3 1200.0 552.7 1216.6 552.3 1233.0 551.3 1249.3 549.7 1265.2 547.3 1280.7 544.3 1295.8 540.7 1310.2 536.5 1324.0 531.8 1337.0 526.4 1349.2 520.6 1360.4 514.3 1370.7 507.5 1379.9 500.4 1388.0 492.9 1394.9 485.1 1400.7 477.0 1405.2 468.7 1408.4 460.3 1410.3 451.7 1411.0 443.1M989.0 459.3 989.7 467.7 991.6 476.1 994.8 484.4 999.3 492.5 1005.1 500.4 1012.0 508.1 1020.1 515.5 1029.3 522.5 1039.6 529.1 1050.8 535.4 1063.0 541.1 1076.0 546.3 1089.8 551.0 1104.2 555.1 1119.3 558.7 1134.8 561.6 1150.7 563.9 1167.0 565.5 1183.4 566.5 1200.0 566.9 1216.6 566.5 1233.0 565.5 1249.3 563.9 1265.2 561.6 1280.7 558.7 1295.8 555.1 1310.2 551.0 1324.0 546.3 1337.0 541.1 1349.2 535.4 1360.4 529.1 1370.7 522.5 1379.9 515.5 1388.0 508.1 1394.9 500.4 1400.7 492.5 1405.2 484.4 1408.4 476.1 1410.3 467.7 1411.0 459.3M989.0 475.4 989.7 483.7 991.6 491.9 994.8 500.1 999.3 508.0 1005.1 515.8 1012.0 523.4 1020.1 530.6 1029.3 537.5 1039.6 544.0 1050.8 550.1 1063.0 555.7 1076.0 560.9 1089.8 565.5 1104.2 569.5 1119.3 573.0 1134.8 575.9 1150.7 578.1 1167.0 579.8 1183.4 580.7 1200.0 581.1 1216.6 580.7 1233.0 579.8 1249.3 578.1 1265.2 575.9 1280.7 573.0 1295.8 569.5 1310.2 565.5 1324.0 560.9 1337.0 555.7 1349.2 550.1 1360.4 544.0 1370.7 537.5 1379.9 530.6 1388.0 523.4 1394.9 515.8 1400.7 508.0 1405.2 500.1 1408.4 491.9 1410.3 483.7 1411.0 475.4M989.0 491.5 989.7 499.6 991.6 507.7 994.8 515.7 999.3 523.6 1005.1 531.2 1012.0 538.6 1020.1 545.7 1029.3 552.5 1039.6 558.9 1050.8 564.9 1063.0 570.4 1076.0 575.4 1089.8 580.0 1104.2 583.9 1119.3 587.3 1134.8 590.2 1150.7 592.4 1167.0 594.0 1183.4 594.9 1200.0 595.2 1216.6 594.9 1233.0 594.0 1249.3 592.4 1265.2 590.2 1280.7 587.3 1295.8 583.9 1310.2 580.0 1324.0 575.4 1337.0 570.4 1349.2 564.9 1360.4 558.9 1370.7 552.5 1379.9 545.7 1388.0 538.6 1394.9 531.2 1400.7 523.6 1405.2 515.7 1408.4 507.7 1410.3 499.6 1411.0 491.5M989.0 507.6 989.7 515.6 991.6 523.6 994.8 531.4 999.3 539.1 1005.1 546.6 1012.0 553.8 1020.1 560.8 1029.3 567.5 1039.6 573.7 1050.8 579.6 1063.0 585.0 1076.0 590.0 1089.8 594.4 1104.2 598.3 1119.3 601.7 1134.8 604.5 1150.7 606.6 1167.0 608.2 1183.4 609.1 1200.0 609.4 1216.6 609.1 1233.0 608.2 1249.3 606.6 1265.2 604.5 1280.7 601.7 1295.8 598.3 1310.2 594.4 1324.0 590.0 1337.0 585.0 1349.2 579.6 1360.4 573.7 1370.7 567.5 1379.9 560.8 1388.0 553.8 1394.9 546.6 1400.7 539.1 1405.2 531.4 1408.4 523.6 1410.3 515.6 1411.0 507.6M989.0 523.8 989.7 531.6 991.6 539.4 994.8 547.1 999.3 554.6 1005.1 562.0 1012.0 569.1 1020.1 575.9 1029.3 582.5 1039.6 588.6 1050.8 594.4 1063.0 599.7 1076.0 604.5 1089.8 608.9 1104.2 612.7 1119.3 616.0 1134.8 618.7 1150.7 620.9 1167.0 622.4 1183.4 623.3 1200.0 623.6 1216.6 623.3 1233.0 622.4 1249.3 620.9 1265.2 618.7 1280.7 616.0 1295.8 612.7 1310.2 608.9 1324.0 604.5 1337.0 599.7 1349.2 594.4 1360.4 588.6 1370.7 582.5 1379.9 575.9 1388.0 569.1 1394.9 562.0 1400.7 554.6 1405.2 547.1 1408.4 539.4 1410.3 531.6 1411.0 523.8M989.0 539.9 989.7 547.6 991.6 555.2 994.8 562.7 999.3 570.1 1005.1 577.4 1012.0 584.3 1020.1 591.0 1029.3 597.4 1039.6 603.5 1050.8 609.1 1063.0 614.3 1076.0 619.1 1089.8 623.4 1104.2 627.1 1119.3 630.4 1134.8 633.0 1150.7 635.1 1167.0 636.6 1183.4 637.5 1200.0 637.8 1216.6 637.5 1233.0 636.6 1249.3 635.1 1265.2 633.0 1280.7 630.4 1295.8 627.1 1310.2 623.4 1324.0 619.1 1337.0 614.3 1349.2 609.1 1360.4 603.5 1370.7 597.4 1379.9 591.0 1388.0 584.3 1394.9 577.4 1400.7 570.1 1405.2 562.7 1408.4 555.2 1410.3 547.6 1411.0 539.9M989.0 556.0 989.7 563.5 991.6 571.0 994.8 578.4 999.3 585.7 1005.1 592.7 1012.0 599.6 1020.1 606.2 1029.3 612.4 1039.6 618.3 1050.8 623.9 1063.0 629.0 1076.0 633.7 1089.8 637.9 1104.2 641.5 1119.3 644.7 1134.8 647.3 1150.7 649.3 1167.0 650.8 1183.4 651.7 1200.0 652.0 1216.6 651.7 1233.0 650.8 1249.3 649.3 1265.2 647.3 1280.7 644.7 1295.8 641.5 1310.2 637.9 1324.0 633.7 1337.0 629.0 1349.2 623.9 1360.4 618.3 1370.7 612.4 1379.9 606.2 1388.0 599.6 1394.9 592.7 1400.7 585.7 1405.2 578.4 1408.4 571.0 1410.3 563.5 1411.0 556.0" stroke="#221e1c" stroke-width="3" opacity="0.7"/>
<path d="M989.0 428.6 989.7 437.4 991.6 446.0 994.8 454.6 999.3 463.0 1005.1 471.2 1012.0 479.2 1020.1 486.8 1029.3 494.0 1039.6 500.9 1050.8 507.3 1063.0 513.2 1076.0 518.7 1089.8 523.5 1104.2 527.8 1119.3 531.4 1134.8 534.5 1150.7 536.8 1167.0 538.5 1183.4 539.6 1200.0 539.9 1216.6 539.6 1233.0 538.5 1249.3 536.8 1265.2 534.5 1280.7 531.4 1295.8 527.8 1310.2 523.5 1324.0 518.7 1337.0 513.2 1349.2 507.3 1360.4 500.9 1370.7 494.0 1379.9 486.8 1388.0 479.2 1394.9 471.2 1400.7 463.0 1405.2 454.6 1408.4 446.0 1410.3 437.4 1411.0 428.6" stroke="#7a4e28" stroke-width="1.4" stroke-dasharray="150 90 70 110" stroke-dashoffset="293" opacity="0.5"/><path d="M989.0 444.8 989.7 453.3 991.6 461.9 994.8 470.3 999.3 478.5 1005.1 486.6 1012.0 494.4 1020.1 501.9 1029.3 509.0 1039.6 515.8 1050.8 522.1 1063.0 527.9 1076.0 533.2 1089.8 538.0 1104.2 542.2 1119.3 545.8 1134.8 548.7 1150.7 551.1 1167.0 552.8 1183.4 553.8 1200.0 554.1 1216.6 553.8 1233.0 552.8 1249.3 551.1 1265.2 548.7 1280.7 545.8 1295.8 542.2 1310.2 538.0 1324.0 533.2 1337.0 527.9 1349.2 522.1 1360.4 515.8 1370.7 509.0 1379.9 501.9 1388.0 494.4 1394.9 486.6 1400.7 478.5 1405.2 470.3 1408.4 461.9 1410.3 453.3 1411.0 444.8" stroke="#7a4e28" stroke-width="1.4" stroke-dasharray="150 90 70 110" stroke-dashoffset="41" opacity="0.5"/><path d="M989.0 460.9 989.7 469.3 991.6 477.7 994.8 486.0 999.3 494.1 1005.1 502.0 1012.0 509.6 1020.1 517.0 1029.3 524.0 1039.6 530.6 1050.8 536.8 1063.0 542.6 1076.0 547.8 1089.8 552.5 1104.2 556.6 1119.3 560.1 1134.8 563.0 1150.7 565.3 1167.0 567.0 1183.4 568.0 1200.0 568.3 1216.6 568.0 1233.0 567.0 1249.3 565.3 1265.2 563.0 1280.7 560.1 1295.8 556.6 1310.2 552.5 1324.0 547.8 1337.0 542.6 1349.2 536.8 1360.4 530.6 1370.7 524.0 1379.9 517.0 1388.0 509.6 1394.9 502.0 1400.7 494.1 1405.2 486.0 1408.4 477.7 1410.3 469.3 1411.0 460.9" stroke="#7a4e28" stroke-width="1.4" stroke-dasharray="150 90 70 110" stroke-dashoffset="248" opacity="0.5"/><path d="M989.0 477.0 989.7 485.3 991.6 493.5 994.8 501.6 999.3 509.6 1005.1 517.4 1012.0 524.9 1020.1 532.1 1029.3 539.0 1039.6 545.5 1050.8 551.6 1063.0 557.2 1076.0 562.3 1089.8 566.9 1104.2 571.0 1119.3 574.4 1134.8 577.3 1150.7 579.6 1167.0 581.2 1183.4 582.1 1200.0 582.5 1216.6 582.1 1233.0 581.2 1249.3 579.6 1265.2 577.3 1280.7 574.4 1295.8 571.0 1310.2 566.9 1324.0 562.3 1337.0 557.2 1349.2 551.6 1360.4 545.5 1370.7 539.0 1379.9 532.1 1388.0 524.9 1394.9 517.4 1400.7 509.6 1405.2 501.6 1408.4 493.5 1410.3 485.3 1411.0 477.0" stroke="#7a4e28" stroke-width="1.4" stroke-dasharray="150 90 70 110" stroke-dashoffset="133" opacity="0.5"/><path d="M989.0 493.1 989.7 501.2 991.6 509.3 994.8 517.3 999.3 525.1 1005.1 532.7 1012.0 540.1 1020.1 547.2 1029.3 554.0 1039.6 560.4 1050.8 566.3 1063.0 571.9 1076.0 576.9 1089.8 581.4 1104.2 585.4 1119.3 588.8 1134.8 591.6 1150.7 593.8 1167.0 595.4 1183.4 596.3 1200.0 596.7 1216.6 596.3 1233.0 595.4 1249.3 593.8 1265.2 591.6 1280.7 588.8 1295.8 585.4 1310.2 581.4 1324.0 576.9 1337.0 571.9 1349.2 566.3 1360.4 560.4 1370.7 554.0 1379.9 547.2 1388.0 540.1 1394.9 532.7 1400.7 525.1 1405.2 517.3 1408.4 509.3 1410.3 501.2 1411.0 493.1" stroke="#7a4e28" stroke-width="1.4" stroke-dasharray="150 90 70 110" stroke-dashoffset="18" opacity="0.5"/><path d="M989.0 509.2 989.7 517.2 991.6 525.1 994.8 533.0 999.3 540.6 1005.1 548.1 1012.0 555.4 1020.1 562.3 1029.3 569.0 1039.6 575.2 1050.8 581.1 1063.0 586.5 1076.0 591.4 1089.8 595.9 1104.2 599.8 1119.3 603.1 1134.8 605.9 1150.7 608.0 1167.0 609.6 1183.4 610.5 1200.0 610.9 1216.6 610.5 1233.0 609.6 1249.3 608.0 1265.2 605.9 1280.7 603.1 1295.8 599.8 1310.2 595.9 1324.0 591.4 1337.0 586.5 1349.2 581.1 1360.4 575.2 1370.7 569.0 1379.9 562.3 1388.0 555.4 1394.9 548.1 1400.7 540.6 1405.2 533.0 1408.4 525.1 1410.3 517.2 1411.0 509.2" stroke="#7a4e28" stroke-width="1.4" stroke-dasharray="150 90 70 110" stroke-dashoffset="0" opacity="0.5"/>
</g></g>
<g clip-path="url(#cfront)"><path d="M868.0 410.2 868.5 419.8 869.8 429.3 872.1 438.8 875.3 448.2 879.4 457.5 884.3 466.7 890.2 475.7 896.9 484.6 904.4 493.2 912.7 501.6 921.9 509.8 931.8 517.6 942.4 525.2 953.8 532.5 965.8 539.5 978.5 546.0 991.8 552.3 1005.7 558.1 1020.1 563.5 1035.0 568.5 1050.4 573.1 1066.1 577.2 1082.3 580.9 1098.8 584.1 1115.6 586.8 1132.6 589.0 1149.8 590.7 1167.1 592.0 1184.5 592.7 1202.0 593.0 1219.5 592.7 1236.9 592.0 1254.2 590.7 1271.4 589.0 1288.4 586.8 1305.2 584.1 1321.7 580.9 1337.9 577.2 1353.6 573.1 1369.0 568.5 1383.9 563.5 1398.3 558.1 1412.2 552.3 1425.5 546.0 1438.2 539.5 1450.2 532.5 1461.6 525.2 1472.2 517.6 1482.1 509.8 1491.3 501.6 1499.6 493.2 1507.1 484.6 1513.8 475.7 1519.7 466.7 1524.6 457.5 1528.7 448.2 1531.9 438.8 1534.2 429.3 1535.5 419.8 1536.0 410.2 1540.0 515.7 1539.5 526.1 1538.2 536.4 1535.9 546.6 1532.7 556.8 1528.6 566.9 1523.6 576.8 1517.7 586.6 1511.0 596.2 1503.4 605.5 1495.0 614.6 1485.8 623.4 1475.8 632.0 1465.1 640.2 1453.7 648.1 1441.6 655.6 1428.8 662.7 1415.5 669.4 1401.5 675.7 1387.0 681.6 1372.0 687.0 1356.5 691.9 1340.7 696.4 1324.4 700.4 1307.8 703.8 1291.0 706.8 1273.9 709.2 1256.6 711.1 1239.1 712.4 1221.6 713.2 1204.0 713.5 1186.4 713.2 1168.9 712.4 1151.4 711.1 1134.1 709.2 1117.0 706.8 1100.2 703.8 1083.6 700.4 1067.3 696.4 1051.5 691.9 1036.0 687.0 1021.0 681.6 1006.5 675.7 992.5 669.4 979.2 662.7 966.4 655.6 954.3 648.1 942.9 640.2 932.2 632.0 922.2 623.4 913.0 614.6 904.6 605.5 897.0 596.2 890.3 586.6 884.4 576.8 879.4 566.9 875.3 556.8 872.1 546.6 869.8 536.4 868.5 526.1 868.0 515.7Z" fill="url(#gfront)"/><g filter="url(#wv)" fill="none">
<path d="M868.0 416.8 869.0 431.2 872.1 445.5 877.2 459.7 884.4 473.6 893.4 487.1 904.4 500.2 917.2 512.8 931.8 524.8 948.1 536.1 965.9 546.7 985.1 556.5 1005.7 565.4 1027.5 573.5 1050.4 580.5 1074.3 586.5 1098.9 591.5 1124.1 595.5 1149.9 598.3 1175.9 600.0 1202.1 600.5 1228.3 600.0 1254.4 598.3 1280.1 595.5 1305.4 591.5 1330.0 586.5 1353.8 580.5 1376.7 573.5 1398.5 565.4 1419.1 556.5 1438.4 546.7 1456.2 536.1 1472.4 524.8 1487.0 512.8 1499.8 500.2 1510.8 487.1 1519.9 473.6 1527.0 459.7 1532.1 445.5 1535.2 431.2 1536.2 416.8M868.0 430.0 869.0 444.5 872.1 459.0 877.2 473.3 884.4 487.3 893.5 501.0 904.4 514.2 917.3 527.0 931.9 539.1 948.1 550.5 965.9 561.2 985.2 571.1 1005.8 580.1 1027.7 588.2 1050.6 595.4 1074.4 601.5 1099.0 606.5 1124.3 610.5 1150.1 613.3 1176.1 615.0 1202.4 615.6 1228.6 615.0 1254.7 613.3 1280.4 610.5 1305.7 606.5 1330.3 601.5 1354.2 595.4 1377.1 588.2 1398.9 580.1 1419.5 571.1 1438.8 561.2 1456.6 550.5 1472.9 539.1 1487.5 527.0 1500.3 514.2 1511.3 501.0 1520.4 487.3 1527.5 473.3 1532.6 459.0 1535.7 444.5 1536.8 430.0M868.0 443.2 869.0 457.9 872.1 472.5 877.2 486.9 884.4 501.1 893.5 514.9 904.5 528.3 917.3 541.1 931.9 553.4 948.2 564.9 966.0 575.7 985.3 585.7 1005.9 594.8 1027.8 603.0 1050.7 610.2 1074.6 616.4 1099.2 621.5 1124.5 625.5 1150.3 628.3 1176.4 630.1 1202.6 630.7 1228.9 630.1 1255.0 628.3 1280.7 625.5 1306.0 621.5 1330.7 616.4 1354.5 610.2 1377.5 603.0 1399.3 594.8 1419.9 585.7 1439.2 575.7 1457.1 564.9 1473.3 553.4 1487.9 541.1 1500.8 528.3 1511.8 514.9 1520.9 501.1 1528.0 486.9 1533.1 472.5 1536.2 457.9 1537.2 443.2M868.0 456.4 869.0 471.2 872.1 486.0 877.3 500.6 884.4 514.9 893.5 528.8 904.5 542.3 917.3 555.3 932.0 567.7 948.2 579.3 966.1 590.3 985.4 600.3 1006.0 609.6 1027.9 617.8 1050.8 625.1 1074.7 631.3 1099.4 636.5 1124.7 640.5 1150.5 643.4 1176.6 645.1 1202.9 645.7 1229.1 645.1 1255.3 643.4 1281.1 640.5 1306.4 636.5 1331.0 631.3 1354.9 625.1 1377.8 617.8 1399.7 609.6 1420.4 600.3 1439.7 590.3 1457.5 579.3 1473.8 567.7 1488.4 555.3 1501.3 542.3 1512.3 528.8 1521.4 514.9 1528.5 500.6 1533.6 486.0 1536.7 471.2 1537.8 456.4M868.0 469.5 869.0 484.5 872.1 499.5 877.3 514.2 884.4 528.6 893.5 542.7 904.5 556.4 917.4 569.5 932.0 582.0 948.3 593.7 966.2 604.8 985.5 615.0 1006.1 624.3 1028.0 632.6 1051.0 639.9 1074.9 646.2 1099.6 651.4 1124.9 655.5 1150.7 658.4 1176.8 660.2 1203.1 660.8 1229.4 660.2 1255.6 658.4 1281.4 655.5 1306.7 651.4 1331.4 646.2 1355.3 639.9 1378.2 632.6 1400.1 624.3 1420.8 615.0 1440.1 604.8 1458.0 593.7 1474.2 582.0 1488.9 569.5 1501.7 556.4 1512.7 542.7 1521.8 528.6 1529.0 514.2 1534.1 499.5 1537.2 484.5 1538.2 469.5M868.0 482.7 869.0 497.9 872.1 512.9 877.3 527.8 884.4 542.4 893.5 556.6 904.6 570.4 917.4 583.6 932.1 596.2 948.4 608.1 966.2 619.3 985.6 629.6 1006.2 639.0 1028.1 647.4 1051.1 654.8 1075.0 661.1 1099.7 666.4 1125.1 670.5 1150.9 673.5 1177.1 675.2 1203.4 675.8 1229.7 675.2 1255.8 673.5 1281.7 670.5 1307.0 666.4 1331.7 661.1 1355.6 654.8 1378.6 647.4 1400.5 639.0 1421.2 629.6 1440.5 619.3 1458.4 608.1 1474.7 596.2 1489.3 583.6 1502.2 570.4 1513.2 556.6 1522.3 542.4 1529.5 527.8 1534.6 512.9 1537.7 497.9 1538.8 482.7M868.0 495.9 869.0 511.2 872.1 526.4 877.3 541.4 884.4 556.2 893.5 570.5 904.6 584.4 917.5 597.8 932.1 610.5 948.4 622.6 966.3 633.8 985.7 644.2 1006.3 653.7 1028.3 662.2 1051.3 669.7 1075.2 676.1 1099.9 681.4 1125.3 685.5 1151.1 688.5 1177.3 690.3 1203.6 690.9 1230.0 690.3 1256.1 688.5 1282.0 685.5 1307.3 681.4 1332.1 676.1 1356.0 669.7 1379.0 662.2 1400.9 653.7 1421.6 644.2 1440.9 633.8 1458.8 622.6 1475.2 610.5 1489.8 597.8 1502.7 584.4 1513.7 570.5 1522.8 556.2 1530.0 541.4 1535.1 526.4 1538.2 511.2 1539.2 495.9M868.0 509.1 869.0 524.6 872.1 539.9 877.3 555.1 884.4 569.9 893.6 584.4 904.6 598.5 917.5 612.0 932.1 624.8 948.5 637.0 966.4 648.3 985.7 658.8 1006.5 668.4 1028.4 677.0 1051.4 684.5 1075.3 691.0 1100.1 696.3 1125.5 700.5 1151.3 703.5 1177.5 705.4 1203.9 706.0 1230.2 705.4 1256.4 703.5 1282.3 700.5 1307.7 696.3 1332.4 691.0 1356.4 684.5 1379.4 677.0 1401.3 668.4 1422.0 658.8 1441.4 648.3 1459.3 637.0 1475.6 624.8 1490.3 612.0 1503.1 598.5 1514.2 584.4 1523.3 569.9 1530.5 555.1 1535.6 539.9 1538.7 524.6 1539.8 509.1M868.0 522.3 869.0 537.9 872.1 553.4 877.3 568.7 884.5 583.7 893.6 598.3 904.6 612.5 917.5 626.1 932.2 639.1 948.5 651.4 966.4 662.8 985.8 673.4 1006.6 683.1 1028.5 691.7 1051.5 699.4 1075.5 705.9 1100.3 711.3 1125.7 715.5 1151.5 718.6 1177.8 720.4 1204.1 721.0 1230.5 720.4 1256.7 718.6 1282.6 715.5 1308.0 711.3 1332.8 705.9 1356.7 699.4 1379.7 691.7 1401.7 683.1 1422.4 673.4 1441.8 662.8 1459.7 651.4 1476.1 639.1 1490.7 626.1 1503.6 612.5 1514.7 598.3 1523.8 583.7 1531.0 568.7 1536.1 553.4 1539.2 537.9 1540.2 522.3" stroke="#636261" stroke-width="9" opacity="0.85"/>
<path d="M868.0 410.2 869.0 424.5 872.1 438.8 877.2 452.9 884.3 466.7 893.4 480.2 904.4 493.2 917.2 505.7 931.8 517.6 948.0 528.9 965.8 539.5 985.1 549.2 1005.7 558.1 1027.5 566.1 1050.4 573.1 1074.2 579.1 1098.8 584.1 1124.0 587.9 1149.8 590.7 1175.8 592.4 1202.0 593.0 1228.2 592.4 1254.2 590.7 1280.0 587.9 1305.2 584.1 1329.8 579.1 1353.6 573.1 1376.5 566.1 1398.3 558.1 1418.9 549.2 1438.2 539.5 1456.0 528.9 1472.2 517.6 1486.8 505.7 1499.6 493.2 1510.6 480.2 1519.7 466.7 1526.8 452.9 1531.9 438.8 1535.0 424.5 1536.0 410.2M868.0 423.4 869.0 437.9 872.1 452.3 877.2 466.5 884.4 480.5 893.4 494.1 904.4 507.2 917.3 519.9 931.8 531.9 948.1 543.3 965.9 554.0 985.2 563.8 1005.8 572.8 1027.6 580.8 1050.5 587.9 1074.3 594.0 1099.0 599.0 1124.2 603.0 1150.0 605.8 1176.0 607.5 1202.2 608.1 1228.5 607.5 1254.5 605.8 1280.3 603.0 1305.5 599.0 1330.2 594.0 1354.0 587.9 1376.9 580.8 1398.7 572.8 1419.3 563.8 1438.6 554.0 1456.4 543.3 1472.7 531.9 1487.2 519.9 1500.1 507.2 1511.1 494.1 1520.1 480.5 1527.3 466.5 1532.4 452.3 1535.5 437.9 1536.5 423.4M868.0 436.6 869.0 451.2 872.1 465.8 877.2 480.1 884.4 494.2 893.5 508.0 904.5 521.3 917.3 534.0 931.9 546.2 948.1 557.7 966.0 568.5 985.3 578.4 1005.9 587.5 1027.7 595.6 1050.6 602.8 1074.5 608.9 1099.1 614.0 1124.4 618.0 1150.2 620.8 1176.3 622.5 1202.5 623.1 1228.7 622.5 1254.8 620.8 1280.6 618.0 1305.9 614.0 1330.5 608.9 1354.4 602.8 1377.3 595.6 1399.1 587.5 1419.7 578.4 1439.0 568.5 1456.9 557.7 1473.1 546.2 1487.7 534.0 1500.5 521.3 1511.5 508.0 1520.6 494.2 1527.8 480.1 1532.9 465.8 1536.0 451.2 1537.0 436.6M868.0 449.8 869.0 464.5 872.1 479.2 877.2 493.7 884.4 508.0 893.5 521.9 904.5 535.3 917.3 548.2 931.9 560.5 948.2 572.1 966.0 583.0 985.3 593.0 1006.0 602.2 1027.8 610.4 1050.8 617.7 1074.6 623.8 1099.3 629.0 1124.6 633.0 1150.4 635.9 1176.5 637.6 1202.8 638.2 1229.0 637.6 1255.1 635.9 1280.9 633.0 1306.2 629.0 1330.9 623.8 1354.7 617.7 1377.7 610.4 1399.5 602.2 1420.2 593.0 1439.5 583.0 1457.3 572.1 1473.6 560.5 1488.2 548.2 1501.0 535.3 1512.0 521.9 1521.1 508.0 1528.3 493.7 1533.4 479.2 1536.5 464.5 1537.5 449.8M868.0 463.0 869.0 477.9 872.1 492.7 877.3 507.4 884.4 521.8 893.5 535.8 904.5 549.3 917.4 562.4 932.0 574.8 948.3 586.5 966.1 597.5 985.4 607.7 1006.1 616.9 1028.0 625.2 1050.9 632.5 1074.8 638.8 1099.5 643.9 1124.8 648.0 1150.6 650.9 1176.7 652.7 1203.0 653.2 1229.3 652.7 1255.4 650.9 1281.2 648.0 1306.5 643.9 1331.2 638.8 1355.1 632.5 1378.0 625.2 1399.9 616.9 1420.6 607.7 1439.9 597.5 1457.7 586.5 1474.0 574.8 1488.6 562.4 1501.5 549.3 1512.5 535.8 1521.6 521.8 1528.7 507.4 1533.9 492.7 1537.0 477.9 1538.0 463.0M868.0 476.1 869.0 491.2 872.1 506.2 877.3 521.0 884.4 535.5 893.5 549.7 904.5 563.4 917.4 576.5 932.0 589.1 948.3 600.9 966.2 612.0 985.5 622.3 1006.2 631.6 1028.1 640.0 1051.0 647.4 1075.0 653.7 1099.7 658.9 1125.0 663.0 1150.8 665.9 1176.9 667.7 1203.2 668.3 1229.6 667.7 1255.7 665.9 1281.5 663.0 1306.8 658.9 1331.5 653.7 1355.5 647.4 1378.4 640.0 1400.3 631.6 1421.0 622.3 1440.3 612.0 1458.2 600.9 1474.5 589.1 1489.1 576.5 1502.0 563.4 1513.0 549.7 1522.1 535.5 1529.2 521.0 1534.4 506.2 1537.5 491.2 1538.5 476.1M868.0 489.3 869.0 504.5 872.1 519.7 877.3 534.6 884.4 549.3 893.5 563.6 904.6 577.4 917.4 590.7 932.1 603.4 948.4 615.4 966.3 626.5 985.6 636.9 1006.3 646.3 1028.2 654.8 1051.2 662.2 1075.1 668.6 1099.8 673.9 1125.2 678.0 1151.0 681.0 1177.2 682.8 1203.5 683.4 1229.8 682.8 1256.0 681.0 1281.8 678.0 1307.2 673.9 1331.9 668.6 1355.8 662.2 1378.8 654.8 1400.7 646.3 1421.4 636.9 1440.7 626.5 1458.6 615.4 1474.9 603.4 1489.6 590.7 1502.4 577.4 1513.5 563.6 1522.6 549.3 1529.7 534.6 1534.9 519.7 1538.0 504.5 1539.0 489.3M868.0 502.5 869.0 517.9 872.1 533.2 877.3 548.3 884.4 563.1 893.6 577.5 904.6 591.5 917.5 604.9 932.1 617.7 948.4 629.8 966.3 641.1 985.7 651.5 1006.4 661.0 1028.3 669.6 1051.3 677.1 1075.3 683.5 1100.0 688.8 1125.4 693.0 1151.2 696.0 1177.4 697.8 1203.8 698.4 1230.1 697.8 1256.3 696.0 1282.1 693.0 1307.5 688.8 1332.2 683.5 1356.2 677.1 1379.2 669.6 1401.1 661.0 1421.8 651.5 1441.2 641.1 1459.1 629.8 1475.4 617.7 1490.0 604.9 1502.9 591.5 1513.9 577.5 1523.1 563.1 1530.2 548.3 1535.4 533.2 1538.5 517.9 1539.5 502.5M868.0 515.7 869.0 531.2 872.1 546.6 877.3 561.9 884.4 576.8 893.6 591.4 904.6 605.5 917.5 619.1 932.2 632.0 948.5 644.2 966.4 655.6 985.8 666.1 1006.5 675.7 1028.4 684.4 1051.5 691.9 1075.4 698.4 1100.2 703.8 1125.6 708.0 1151.4 711.1 1177.6 712.9 1204.0 713.5 1230.4 712.9 1256.6 711.1 1282.4 708.0 1307.8 703.8 1332.6 698.4 1356.5 691.9 1379.6 684.4 1401.5 675.7 1422.2 666.1 1441.6 655.6 1459.5 644.2 1475.8 632.0 1490.5 619.1 1503.4 605.5 1514.4 591.4 1523.6 576.8 1530.7 561.9 1535.9 546.6 1539.0 531.2 1540.0 515.7" stroke="#2e251c" stroke-width="3.4" opacity="0.95"/>
<path d="M868.0 424.7 869.0 439.2 872.1 453.6 877.2 467.9 884.4 481.8 893.4 495.5 904.4 508.6 917.3 521.3 931.8 533.4 948.1 544.8 965.9 555.4 985.2 565.3 1005.8 574.3 1027.6 582.3 1050.5 589.4 1074.4 595.5 1099.0 600.5 1124.2 604.5 1150.0 607.3 1176.0 609.0 1202.3 609.6 1228.5 609.0 1254.6 607.3 1280.3 604.5 1305.6 600.5 1330.2 595.5 1354.0 589.4 1376.9 582.3 1398.8 574.3 1419.4 565.3 1438.6 555.4 1456.5 544.8 1472.7 533.4 1487.3 521.3 1500.1 508.6 1511.1 495.5 1520.2 481.8 1527.3 467.9 1532.4 453.6 1535.5 439.2 1536.6 424.7" stroke="#7a5530" stroke-width="1.5" stroke-dasharray="100 70 180 50 60 130" stroke-dashoffset="165" opacity="0.45"/><path d="M868.0 437.9 869.0 452.5 872.1 467.1 877.2 481.5 884.4 495.6 893.5 509.4 904.5 522.7 917.3 535.5 931.9 547.7 948.2 559.2 966.0 569.9 985.3 579.9 1005.9 589.0 1027.7 597.1 1050.7 604.3 1074.5 610.4 1099.2 615.5 1124.4 619.5 1150.2 622.3 1176.3 624.1 1202.5 624.6 1228.8 624.1 1254.9 622.3 1280.6 619.5 1305.9 615.5 1330.5 610.4 1354.4 604.3 1377.3 597.1 1399.2 589.0 1419.8 579.9 1439.1 569.9 1456.9 559.2 1473.2 547.7 1487.8 535.5 1500.6 522.7 1511.6 509.4 1520.7 495.6 1527.8 481.5 1532.9 467.1 1536.0 452.5 1537.1 437.9" stroke="#7a5530" stroke-width="1.5" stroke-dasharray="100 70 180 50 60 130" stroke-dashoffset="77" opacity="0.45"/><path d="M868.0 451.1 869.0 465.9 872.1 480.6 877.2 495.1 884.4 509.4 893.5 523.3 904.5 536.7 917.3 549.6 931.9 561.9 948.2 573.6 966.1 584.5 985.4 594.5 1006.0 603.7 1027.9 611.9 1050.8 619.1 1074.7 625.3 1099.3 630.5 1124.6 634.5 1150.4 637.4 1176.5 639.1 1202.8 639.7 1229.0 639.1 1255.1 637.4 1280.9 634.5 1306.2 630.5 1330.9 625.3 1354.8 619.1 1377.7 611.9 1399.6 603.7 1420.2 594.5 1439.5 584.5 1457.3 573.6 1473.6 561.9 1488.2 549.6 1501.1 536.7 1512.1 523.3 1521.2 509.4 1528.3 495.1 1533.4 480.6 1536.5 465.9 1537.6 451.1" stroke="#7a5530" stroke-width="1.5" stroke-dasharray="100 70 180 50 60 130" stroke-dashoffset="202" opacity="0.45"/><path d="M868.0 464.3 869.0 479.2 872.1 494.1 877.3 508.7 884.4 523.1 893.5 537.2 904.5 550.7 917.4 563.8 932.0 576.2 948.3 588.0 966.1 599.0 985.4 609.1 1006.1 618.4 1028.0 626.7 1050.9 634.0 1074.8 640.3 1099.5 645.4 1124.8 649.5 1150.6 652.4 1176.7 654.2 1203.0 654.8 1229.3 654.2 1255.4 652.4 1281.2 649.5 1306.6 645.4 1331.2 640.3 1355.1 634.0 1378.1 626.7 1399.9 618.4 1420.6 609.1 1439.9 599.0 1457.8 588.0 1474.1 576.2 1488.7 563.8 1501.5 550.7 1512.5 537.2 1521.7 523.1 1528.8 508.7 1533.9 494.1 1537.0 479.2 1538.1 464.3" stroke="#7a5530" stroke-width="1.5" stroke-dasharray="100 70 180 50 60 130" stroke-dashoffset="24" opacity="0.45"/><path d="M868.0 477.5 869.0 492.5 872.1 507.5 877.3 522.4 884.4 536.9 893.5 551.1 904.5 564.8 917.4 578.0 932.0 590.5 948.3 602.4 966.2 613.5 985.5 623.7 1006.2 633.1 1028.1 641.5 1051.1 648.9 1075.0 655.2 1099.7 660.4 1125.0 664.5 1150.8 667.5 1177.0 669.2 1203.3 669.8 1229.6 669.2 1255.7 667.5 1281.5 664.5 1306.9 660.4 1331.6 655.2 1355.5 648.9 1378.5 641.5 1400.3 633.1 1421.0 623.7 1440.4 613.5 1458.2 602.4 1474.5 590.5 1489.1 578.0 1502.0 564.8 1513.0 551.1 1522.1 536.9 1529.3 522.4 1534.4 507.5 1537.5 492.5 1538.6 477.5" stroke="#7a5530" stroke-width="1.5" stroke-dasharray="100 70 180 50 60 130" stroke-dashoffset="37" opacity="0.45"/><path d="M868.0 490.6 869.0 505.9 872.1 521.0 877.3 536.0 884.4 550.7 893.5 565.0 904.6 578.8 917.4 592.1 932.1 604.8 948.4 616.8 966.3 628.0 985.6 638.3 1006.3 647.8 1028.2 656.3 1051.2 663.7 1075.1 670.1 1099.8 675.4 1125.2 679.5 1151.0 682.5 1177.2 684.3 1203.5 684.9 1229.8 684.3 1256.0 682.5 1281.9 679.5 1307.2 675.4 1331.9 670.1 1355.9 663.7 1378.8 656.3 1400.7 647.8 1421.4 638.3 1440.8 628.0 1458.7 616.8 1475.0 604.8 1489.6 592.1 1502.5 578.8 1513.5 565.0 1522.6 550.7 1529.8 536.0 1534.9 521.0 1538.0 505.9 1539.1 490.6" stroke="#7a5530" stroke-width="1.5" stroke-dasharray="100 70 180 50 60 130" stroke-dashoffset="274" opacity="0.45"/><path d="M868.0 503.8 869.0 519.2 872.1 534.5 877.3 549.6 884.4 564.4 893.6 578.9 904.6 592.9 917.5 606.3 932.1 619.1 948.4 631.2 966.3 642.5 985.7 653.0 1006.4 662.5 1028.3 671.0 1051.3 678.6 1075.3 685.0 1100.0 690.3 1125.4 694.5 1151.2 697.5 1177.4 699.3 1203.8 699.9 1230.1 699.3 1256.3 697.5 1282.2 694.5 1307.5 690.3 1332.3 685.0 1356.2 678.6 1379.2 671.0 1401.1 662.5 1421.8 653.0 1441.2 642.5 1459.1 631.2 1475.4 619.1 1490.1 606.3 1503.0 592.9 1514.0 578.9 1523.1 564.4 1530.3 549.6 1535.4 534.5 1538.5 519.2 1539.6 503.8" stroke="#7a5530" stroke-width="1.5" stroke-dasharray="100 70 180 50 60 130" stroke-dashoffset="48" opacity="0.45"/><path d="M868.0 517.0 869.0 532.6 872.1 548.0 877.3 563.2 884.4 578.2 893.6 592.8 904.6 606.9 917.5 620.5 932.2 633.4 948.5 645.6 966.4 657.0 985.8 667.6 1006.5 677.2 1028.5 685.8 1051.5 693.4 1075.4 699.9 1100.2 705.3 1125.6 709.5 1151.5 712.6 1177.7 714.4 1204.0 715.0 1230.4 714.4 1256.6 712.6 1282.5 709.5 1307.9 705.3 1332.6 699.9 1356.6 693.4 1379.6 685.8 1401.5 677.2 1422.3 667.6 1441.6 657.0 1459.5 645.6 1475.9 633.4 1490.5 620.5 1503.4 606.9 1514.5 592.8 1523.6 578.2 1530.8 563.2 1535.9 548.0 1539.0 532.6 1540.1 517.0" stroke="#7a5530" stroke-width="1.5" stroke-dasharray="100 70 180 50 60 130" stroke-dashoffset="187" opacity="0.45"/>
</g></g>
<g clip-path="url(#cback)" opacity="0.8"><rect x="866" y="330" width="40" height="150" fill="url(#gdl)"/><rect x="1512" y="340" width="28" height="150" fill="url(#gdr)"/></g>
<g clip-path="url(#cfront)" opacity="0.6"><rect x="866" y="400" width="22" height="180" fill="url(#gdl)"/><rect x="1512" y="400" width="30" height="190" fill="url(#gdr)"/></g>
</g>
<path d="M1187 479.5H1206M1196.5 470V489" stroke="#e6e6e6" stroke-width="1" fill="none"/>
<path d="M1462 833.5H1775M1462.5 830.5V836.5M1774.5 830.5V836.5" stroke="#fff" stroke-width="1" fill="none"/>
<text x="1618" y="851" font-family="Liberation Serif, serif" font-size="17.5" fill="#fff" text-anchor="middle" textLength="17" lengthAdjust="spacingAndGlyphs">55</text>
<path d="M1810 833L1789 839" stroke="#ff0000" stroke-width="3" fill="none"/>
<path d="M1810 833L1822.5 845" stroke="#00e000" stroke-width="3" fill="none"/>
<path d="M1810.5 833V812" stroke="#00bfff" stroke-width="3" fill="none"/>
</svg>
<div class="a" style="left:1845px;top:95px;width:1px;height:769px;background:#fff"></div>
<div class="a" style="left:549px;top:863px;width:1297px;height:1px;background:#fff"></div>
<!-- sec_right -->
<svg width="0" height="0"><defs>
<radialGradient id="rbl" cx="0.55" cy="0.45" r="0.6"><stop offset="0" stop-color="#c4c4c4"/><stop offset="1" stop-color="#7c7c7c"/></radialGradient>
<linearGradient id="rcl" x1="0" y1="0" x2="1" y2="1"><stop offset="0" stop-color="#8a8a8a"/><stop offset="0.5" stop-color="#e0e0e0"/><stop offset="1" stop-color="#8e8e8e"/></linearGradient>
<radialGradient id="rsh" cx="0.4" cy="0.3" r="0.8"><stop offset="0" stop-color="#b4b4b4"/><stop offset="1" stop-color="#7a7a7a"/></radialGradient>
</defs></svg>
<svg style="left:1850px;top:99px" width="68" height="4" viewBox="0 0 68 4"><rect x="0" y="1" width="2" height="2" fill="#b4b4b4"/><rect x="1" y="0" width="1.4" height="1.4" fill="#fff"/><rect x="4" y="1" width="2" height="2" fill="#b4b4b4"/><rect x="5" y="0" width="1.4" height="1.4" fill="#fff"/><rect x="8" y="1" width="2" height="2" fill="#b4b4b4"/><rect x="9" y="0" width="1.4" height="1.4" fill="#fff"/><rect x="12" y="1" width="2" height="2" fill="#b4b4b4"/><rect x="13" y="0" width="1.4" height="1.4" fill="#fff"/><rect x="16" y="1" width="2" height="2" fill="#b4b4b4"/><rect x="17" y="0" width="1.4" height="1.4" fill="#fff"/><rect x="20" y="1" width="2" height="2" fill="#b4b4b4"/><rect x="21" y="0" width="1.4" height="1.4" fill="#fff"/><rect x="24" y="1" width="2" height="2" fill="#b4b4b4"/><rect x="25" y="0" width="1.4" height="1.4" fill="#fff"/><rect x="28" y="1" width="2" height="2" fill="#b4b4b4"/><rect x="29" y="0" width="1.4" height="1.4" fill="#fff"/><rect x="32" y="1" width="2" height="2" fill="#b4b4b4"/><rect x="33" y="0" width="1.4" height="1.4" fill="#fff"/><rect x="36" y="1" width="2" height="2" fill="#b4b4b4"/><rect x="37" y="0" width="1.4" height="1.4" fill="#fff"/><rect x="40" y="1" width="2" height="2" fill="#b4b4b4"/><rect x="41" y="0" width="1.4" height="1.4" fill="#fff"/><rect x="44" y="1" width="2" height="2" fill="#b4b4b4"/><rect x="45" y="0" width="1.4" height="1.4" fill="#fff"/><rect x="48" y="1" width="2" height="2" fill="#b4b4b4"/><rect x="49" y="0" width="1.4" height="1.4" fill="#fff"/><rect x="52" y="1" width="2" height="2" fill="#b4b4b4"/><rect x="53" y="0" width="1.4" height="1.4" fill="#fff"/><rect x="56" y="1" width="2" height="2" fill="#b4b4b4"/><rect x="57" y="0" width="1.4" height="1.4" fill="#fff"/><rect x="60" y="1" width="2" height="2" fill="#b4b4b4"/><rect x="61" y="0" width="1.4" height="1.4" fill="#fff"/><rect x="64" y="1" width="2" height="2" fill="#b4b4b4"/><rect x="65" y="0" width="1.4" height="1.4" fill="#fff"/></svg>
<div class="a" style="left:1846px;top:216px;width:74px;height:1px;background:#a5a5a5"></div>
<svg style="left:1850px;top:221px" width="68" height="4" viewBox="0 0 68 4"><rect x="0" y="1" width="2" height="2" fill="#b4b4b4"/><rect x="1" y="0" width="1.4" height="1.4" fill="#fff"/><rect x="4" y="1" width="2" height="2" fill="#b4b4b4"/><rect x="5" y="0" width="1.4" height="1.4" fill="#fff"/><rect x="8" y="1" width="2" height="2" fill="#b4b4b4"/><rect x="9" y="0" width="1.4" height="1.4" fill="#fff"/><rect x="12" y="1" width="2" height="2" fill="#b4b4b4"/><rect x="13" y="0" width="1.4" height="1.4" fill="#fff"/><rect x="16" y="1" width="2" height="2" fill="#b4b4b4"/><rect x="17" y="0" width="1.4" height="1.4" fill="#fff"/><rect x="20" y="1" width="2" height="2" fill="#b4b4b4"/><rect x="21" y="0" width="1.4" height="1.4" fill="#fff"/><rect x="24" y="1" width="2" height="2" fill="#b4b4b4"/><rect x="25" y="0" width="1.4" height="1.4" fill="#fff"/><rect x="28" y="1" width="2" height="2" fill="#b4b4b4"/><rect x="29" y="0" width="1.4" height="1.4" fill="#fff"/><rect x="32" y="1" width="2" height="2" fill="#b4b4b4"/><rect x="33" y="0" width="1.4" height="1.4" fill="#fff"/><rect x="36" y="1" width="2" height="2" fill="#b4b4b4"/><rect x="37" y="0" width="1.4" height="1.4" fill="#fff"/><rect x="40" y="1" width="2" height="2" fill="#b4b4b4"/><rect x="41" y="0" width="1.4" height="1.4" fill="#fff"/><rect x="44" y="1" width="2" height="2" fill="#b4b4b4"/><rect x="45" y="0" width="1.4" height="1.4" fill="#fff"/><rect x="48" y="1" width="2" height="2" fill="#b4b4b4"/><rect x="49" y="0" width="1.4" height="1.4" fill="#fff"/><rect x="52" y="1" width="2" height="2" fill="#b4b4b4"/><rect x="53" y="0" width="1.4" height="1.4" fill="#fff"/><rect x="56" y="1" width="2" height="2" fill="#b4b4b4"/><rect x="57" y="0" width="1.4" height="1.4" fill="#fff"/><rect x="60" y="1" width="2" height="2" fill="#b4b4b4"/><rect x="61" y="0" width="1.4" height="1.4" fill="#fff"/><rect x="64" y="1" width="2" height="2" fill="#b4b4b4"/><rect x="65" y="0" width="1.4" height="1.4" fill="#fff"/></svg>
<svg style="left:1866px;top:109px" width="32" height="32" viewBox="0 0 32 32"><circle cx="16" cy="16" r="12.6" fill="#cfcfcf" stroke="#868686" stroke-width="4"/><path d="M7.6 23 L24.4 9" stroke="#868686" stroke-width="4.4"/><circle cx="16" cy="16" r="14.6" fill="none" stroke="#6e6e6e" stroke-width="0.8"/></svg>
<svg style="left:1872px;top:151px" width="21" height="21" viewBox="0 0 21 21"><rect width="21" height="21" fill="#7e7e7e"/><ellipse cx="8" cy="8" rx="5" ry="6" fill="#9a9a9a" transform="rotate(-20 8 8)"/><ellipse cx="14" cy="9" rx="5" ry="7" fill="url(#rbl)" transform="rotate(25 14 9)"/><circle cx="18" cy="2.6" r="1" fill="#bdbdbd"/><text x="1" y="19.6" font-family="Liberation Mono, monospace" font-size="6.6" font-weight="700" fill="#fff" text-anchor="start" opacity="0.99" textLength="14" lengthAdjust="spacingAndGlyphs">EDL</text></svg>
<svg style="left:1872px;top:187px" width="21" height="21" viewBox="0 0 21 21"><rect width="21" height="21" fill="#7e7e7e"/><ellipse cx="8" cy="8" rx="5" ry="6" fill="#9a9a9a" transform="rotate(-20 8 8)"/><ellipse cx="14" cy="9" rx="5" ry="7" fill="url(#rbl)" transform="rotate(25 14 9)"/><circle cx="18" cy="2.6" r="1" fill="#bdbdbd"/><text x="1" y="19.6" font-family="Liberation Mono, monospace" font-size="6.6" font-weight="700" fill="#fff" text-anchor="start" opacity="0.99" textLength="18" lengthAdjust="spacingAndGlyphs">SSAO</text></svg>
<svg style="left:1867px;top:232px" width="30" height="30" viewBox="0 0 30 30"><path d="M1.6 6.6 L28 1 L29 5.6 L2.6 11.2Z" fill="#8e8e8e"/><path d="M5 6 L8 10 M10.6 4.8 L13.6 8.8 M16.2 3.6 L19.2 7.6 M21.8 2.4 L24.8 6.4" stroke="#f0f0f0" stroke-width="2.2"/><rect x="1.6" y="10.6" width="27" height="4.4" fill="#8e8e8e"/><path d="M5 10.6 L8 15 M11 10.6 L14 15 M17 10.6 L20 15 M23 10.6 L26 15" stroke="#f0f0f0" stroke-width="2.2"/><rect x="1.6" y="15" width="27" height="13.6" fill="url(#rcl)" stroke="#8a8a8a" stroke-width="0.8"/></svg>
<svg style="left:1873px;top:266px" width="18" height="32" viewBox="0 0 18 32"><path d="M8 1 H10 V20 H8Z" fill="#b4b4b4" stroke="#9a9a9a" stroke-width="0.5"/><path d="M3 19 H15 L16 30 H2Z" fill="#c0c0c0"/><path d="M4 20 V30 M7 20 V30 M10 20 V30 M13 20 V30" stroke="#9a9a9a" stroke-width="0.9"/><path d="M1 29 L17 31" stroke="#b4b4b4" stroke-width="0.8"/></svg>
<svg style="left:1869.5px;top:306.5px" width="25" height="25" viewBox="0 0 25 25"><rect x="0.6" y="0.6" width="23.8" height="23.8" rx="3.4" fill="#fff" stroke="#2c3848" stroke-width="1.2"/><circle cx="12.5" cy="12.5" r="10.2" fill="#fff" stroke="#3c4a5e" stroke-width="2.2"/><path d="M6.6 8 V17 M9.2 5.6 V19.4 M15.8 5.6 V19.4 M18.4 8 V17" stroke="#c4c8cc" stroke-width="0.7"/><path d="M18.6 5.6 L13.8 13.8 L11.2 11.2Z" fill="#f0403c"/><path d="M6.4 19.4 L11.2 11.2 L13.8 13.8Z" fill="#222"/></svg>
<svg style="left:1870px;top:342px" width="26" height="27" viewBox="0 0 26 27"><path d="M13 1 L24 4.6 C25 14 21 22 13 26 C5 22 1 14 2 4.6Z" fill="#d8d8d8" stroke="#bdbdbd" stroke-width="1"/><path d="M13 4.6 L21.4 7.4 C22 14 19 19.6 13 22.8 C7 19.6 4 14 4.6 7.4Z" fill="url(#rsh)"/></svg>
<div class="t" style="left:1854.30px;top:376.85px;font-size:13.2px;letter-spacing:-0.44px;color:#7a7a7a;">CSF Filter</div>
<svg style="left:1876px;top:401.5px" width="12" height="22.5" viewBox="0 0 12 22.5"><rect width="12" height="22.5" fill="#fafafa"/><path d="M1.4 3 H9" stroke="#444" stroke-width="0.9"/><path d="M7.6 1 L10.8 3 L7.6 5Z" fill="#444"/><text x="6" y="19.6" font-family="Liberation Sans, sans-serif" font-size="15.4" font-weight="400" fill="#555" text-anchor="middle" opacity="0.99">N</text></svg>
<svg style="left:1872px;top:439px" width="21" height="21" viewBox="0 0 21 21"><rect width="21" height="21" fill="#fafafa"/><path d="M3 7 L9 2 L17 3.4 L19.6 9 L15 16 L6 15.4Z" fill="#b4b4b4"/><path d="M3 7 L10 8.6 L17 3.4 M10 8.6 L15 16 M10 8.6 L6 15.4" stroke="#dcdcdc" stroke-width="0.7" fill="none"/><text x="1" y="20" font-family="Liberation Sans, sans-serif" font-size="6.4" font-weight="700" fill="#111" text-anchor="start" opacity="0.99" textLength="14" lengthAdjust="spacingAndGlyphs">HPR</text></svg>
<svg style="left:1866px;top:469px" width="32" height="30" viewBox="0 0 32 30"><text x="15.6" y="9.2" font-family="Liberation Sans, sans-serif" font-size="9.4" font-weight="700" fill="#b0b0b0" text-anchor="middle" opacity="0.99" textLength="27" lengthAdjust="spacingAndGlyphs">M3C2</text><g fill="none" stroke="#9a9a9a" stroke-width="0.8"><path d="M4 18 L26 12 M6 26 L28 20"/><ellipse cx="5" cy="22" rx="2.4" ry="4.2" transform="rotate(-15 5 22)"/><ellipse cx="27" cy="16" rx="2.4" ry="4.2" transform="rotate(-15 27 16)"/></g><circle cx="5" cy="13" r="0.95" fill="#555"/><circle cx="9" cy="16" r="0.95" fill="#555"/><circle cx="3" cy="17.6" r="0.95" fill="#555"/><circle cx="13" cy="19" r="0.95" fill="#555"/><circle cx="17" cy="14.6" r="0.95" fill="#555"/><circle cx="21" cy="11" r="0.95" fill="#555"/><circle cx="24" cy="15.6" r="0.95" fill="#555"/><circle cx="19" cy="19" r="0.95" fill="#555"/><circle cx="8" cy="22.6" r="0.95" fill="#555"/><circle cx="14" cy="24" r="0.95" fill="#555"/><circle cx="22" cy="22.6" r="0.95" fill="#555"/><circle cx="26" cy="24.6" r="0.95" fill="#555"/><circle cx="6" cy="28" r="0.95" fill="#555"/><circle cx="27" cy="28" r="0.95" fill="#555"/></svg>
<svg style="left:1872px;top:511px" width="21" height="21" viewBox="0 0 21 21"><rect width="21" height="21" fill="#8a8a8a"/><ellipse cx="6" cy="5" rx="6" ry="5" fill="#b9b9b9"/><ellipse cx="15" cy="5" rx="6" ry="5" fill="#a4a4a4"/><path d="M2 3 C5 6 7 8 9 10 M12 2 C14 5 17 6 20 6" stroke="#dcdcdc" stroke-width="0.8" fill="none"/><text x="1.4" y="19.4" font-family="Liberation Sans, sans-serif" font-size="8" font-weight="700" fill="#fff" text-anchor="start" opacity="0.99" textLength="18" lengthAdjust="spacingAndGlyphs">PCV</text></svg>
<svg style="left:1872px;top:547px" width="20" height="20" viewBox="0 0 20 20"><rect width="20" height="20" fill="#fafafa"/><path d="M10 1 L17.6 4.6 L19.4 12 L14.6 18.4 L5.4 18.4 L0.8 12 L2.4 4.6Z" fill="#8e8e8e"/><path d="M10 4.6 L15.4 8.6 L13.4 15 L6.6 15 L4.6 8.6Z" fill="#9c9c9c" stroke="#7a7a7a" stroke-width="0.5"/></svg>
<svg style="left:1872px;top:583px" width="21" height="21" viewBox="0 0 21 21"><rect width="21" height="21" fill="#fafafa"/><path d="M1 11 L8 3 L16 4 L20 10 V14 H1Z" fill="#bdbdbd"/><ellipse cx="13" cy="5.6" rx="4.6" ry="4" fill="#9c9c9c"/><text x="10.5" y="20" font-family="Liberation Sans, sans-serif" font-size="8.2" font-weight="400" fill="#444" text-anchor="middle" opacity="0.99" textLength="18" lengthAdjust="spacingAndGlyphs">RSD</text></svg>
<svg style="left:1870px;top:617px" width="25" height="25" viewBox="0 0 25 25"><circle cx="2.0" cy="2.0" r="1.9" fill="#bdbdbd"/><circle cx="8.8" cy="2.0" r="1.9" fill="#bdbdbd"/><circle cx="15.6" cy="2.0" r="1.9" fill="#bdbdbd"/><circle cx="22.4" cy="2.0" r="1.9" fill="#bdbdbd"/><circle cx="2.0" cy="8.8" r="1.9" fill="#bdbdbd"/><circle cx="8.8" cy="8.8" r="1.9" fill="#bdbdbd"/><circle cx="15.6" cy="8.8" r="1.9" fill="#f05a28"/><circle cx="22.4" cy="8.8" r="1.9" fill="#f05a28"/><circle cx="2.0" cy="15.6" r="1.9" fill="#bdbdbd"/><circle cx="8.8" cy="15.6" r="1.9" fill="#f05a28"/><circle cx="15.6" cy="15.6" r="1.9" fill="#f05a28"/><circle cx="22.4" cy="15.6" r="1.9" fill="#f05a28"/><circle cx="2.0" cy="22.4" r="1.9" fill="#bdbdbd"/><circle cx="8.8" cy="22.4" r="1.9" fill="#f05a28"/><circle cx="15.6" cy="22.4" r="1.9" fill="#f05a28"/><circle cx="22.4" cy="22.4" r="1.9" fill="#f05a28"/><circle cx="15.6" cy="8.8" r="3.35" fill="none" stroke="#111" stroke-width="2.27"/><circle cx="20.73" cy="8.80" r="1.08" fill="#111"/><circle cx="19.23" cy="12.43" r="1.08" fill="#111"/><circle cx="15.60" cy="13.93" r="1.08" fill="#111"/><circle cx="11.97" cy="12.43" r="1.08" fill="#111"/><circle cx="10.47" cy="8.80" r="1.08" fill="#111"/><circle cx="11.97" cy="5.17" r="1.08" fill="#111"/><circle cx="15.60" cy="3.67" r="1.08" fill="#111"/><circle cx="19.23" cy="5.17" r="1.08" fill="#111"/><circle cx="10.4" cy="17.6" r="2.85" fill="none" stroke="#111" stroke-width="1.93"/><circle cx="14.77" cy="17.60" r="0.92" fill="#111"/><circle cx="13.49" cy="20.69" r="0.92" fill="#111"/><circle cx="10.40" cy="21.97" r="0.92" fill="#111"/><circle cx="7.31" cy="20.69" r="0.92" fill="#111"/><circle cx="6.03" cy="17.60" r="0.92" fill="#111"/><circle cx="7.31" cy="14.51" r="0.92" fill="#111"/><circle cx="10.40" cy="13.23" r="0.92" fill="#111"/><circle cx="13.49" cy="14.51" r="0.92" fill="#111"/><circle cx="7.2" cy="10.4" r="1.61" fill="none" stroke="#111" stroke-width="1.09"/><circle cx="9.67" cy="10.40" r="0.52" fill="#111"/><circle cx="8.44" cy="12.54" r="0.52" fill="#111"/><circle cx="5.97" cy="12.54" r="0.52" fill="#111"/><circle cx="4.73" cy="10.40" r="0.52" fill="#111"/><circle cx="5.96" cy="8.26" r="0.52" fill="#111"/><circle cx="8.44" cy="8.26" r="0.52" fill="#111"/></svg>
<svg style="left:1866px;top:655px" width="32" height="20" viewBox="0 0 32 20"><ellipse cx="16" cy="10" rx="13.6" ry="7.8" fill="none" stroke="#e04a5e" stroke-width="1.5"/><rect x="14.7" y="0.9000000000000001" width="2.6" height="2.6" fill="#fff" stroke="#e88a96" stroke-width="0.6"/><rect x="14.7" y="16.5" width="2.6" height="2.6" fill="#fff" stroke="#e88a96" stroke-width="0.6"/><rect x="1.0999999999999999" y="8.7" width="2.6" height="2.6" fill="#fff" stroke="#e88a96" stroke-width="0.6"/><rect x="28.3" y="8.7" width="2.6" height="2.6" fill="#fff" stroke="#e88a96" stroke-width="0.6"/></svg>
<svg style="left:1873px;top:692px" width="18" height="18" viewBox="0 0 18 18"><rect x="1" y="0" width="16" height="17" fill="#fff"/><path d="M2.6 6 L5.6 2.4 H12.4 L15.4 6Z" fill="#1a3cf0"/><path d="M2 15.6 V8 C2 6 3 5 5 5 H13 C15 5 16 6 16 8 V15.6 H12 V9.6 H6 V15.6Z" fill="#fff" stroke="#000" stroke-width="1.5"/></svg>
<svg style="left:1870px;top:725.5px" width="25" height="24" viewBox="0 0 25 24"><circle cx="2.0" cy="2.0" r="1.7" fill="#bdbdbd"/><circle cx="8.6" cy="2.0" r="1.7" fill="#bdbdbd"/><circle cx="15.2" cy="2.0" r="1.7" fill="#bdbdbd"/><circle cx="21.8" cy="2.0" r="1.7" fill="#bdbdbd"/><circle cx="2.0" cy="8.2" r="1.7" fill="#bdbdbd"/><circle cx="8.6" cy="8.2" r="1.7" fill="#f05a28"/><circle cx="15.2" cy="8.2" r="1.7" fill="#f05a28"/><circle cx="21.8" cy="8.2" r="1.7" fill="#f05a28"/><circle cx="2.0" cy="14.4" r="1.7" fill="#bdbdbd"/><circle cx="8.6" cy="14.4" r="1.7" fill="#f05a28"/><circle cx="15.2" cy="14.4" r="1.7" fill="#f05a28"/><circle cx="21.8" cy="14.4" r="1.7" fill="#f05a28"/><circle cx="2.0" cy="20.6" r="1.7" fill="#bdbdbd"/><circle cx="8.6" cy="20.6" r="1.7" fill="#f05a28"/><circle cx="15.2" cy="20.6" r="1.7" fill="#f05a28"/><circle cx="21.8" cy="20.6" r="1.7" fill="#f05a28"/><path d="M10.6 3.4 C11.4 2.4 12.8 3 12.6 4.4 L12 9 L14 8.6 L16 9.4 L18 10.6 C19 13 18 17 16.4 20 H9.6 C7.6 17.6 6 14.6 5.6 12.4 C6.4 11.4 7.6 11.6 8.6 13 Z" fill="#fff" stroke="#333" stroke-width="1.1"/></svg>
<svg style="left:1866px;top:759px" width="32" height="27" viewBox="0 0 32 27"><path d="M3 17 C1 12 5 9 8 10.4 C9 4 16 1.6 20 5.4 C25 3.6 30 8 28.6 13 C30.6 14 30.4 16.6 29 17" fill="none" stroke="#c4c4c4" stroke-width="1.6"/><rect x="1.6" y="17" width="28.8" height="8" fill="none" stroke="#bdbdbd" stroke-width="1.4"/><path d="M6 17 V21 M10 17 V20 M14 17 V21 M18 17 V20 M22 17 V21 M26 17 V20" stroke="#c4c4c4" stroke-width="1"/></svg>
<!-- sec_console -->
<div class="a" style="left:41px;top:869px;width:1804px;height:23px;background:#d9d9d9;border:1px solid #b9b9b9"></div>
<div class="t" style="left:46.20px;top:874.12px;font-size:12.8px;letter-spacing:-0.39px;">Console</div>
<svg style="left:1814px;top:875px" width="10" height="10" viewBox="0 0 10 10"><path d="M3.5 3V1h5.5v5H7" fill="none" stroke="#000" stroke-width="1"/><rect x="3" y="0.5" width="6.5" height="1.6" fill="#000"/><rect x="0.5" y="4" width="6" height="5" fill="#e8e8e8" stroke="#000" stroke-width="1"/><rect x="0" y="3.2" width="7" height="1.8" fill="#000"/></svg>
<svg style="left:1831px;top:876px" width="9" height="9" viewBox="0 0 9 9"><path d="M0.7 0.7L8.3 8.3M8.3 0.7L0.7 8.3" stroke="#000" stroke-width="1.5" fill="none"/></svg>
<div class="a" style="left:52px;top:905px;width:1782px;height:89px;background:#fff;border:1px solid #7a828f"></div>
<div class="a" style="left:53px;top:929px;width:1758px;height:22px;background:#f5f5f5"></div>
<div class="a" style="left:1811px;top:906px;width:22px;height:87px;background:#f0f0f0"></div>
<div class="a" style="left:1812px;top:949px;width:19px;height:22px;background:#c4c4c4"></div>
<svg style="left:1815px;top:913px" width="13" height="9" viewBox="0 0 13 9"><path d="M1.2 7.6 L6.5 2.2 L11.8 7.6" fill="none" stroke="#505050" stroke-width="2"/></svg>
<svg style="left:1815px;top:976px" width="13" height="9" viewBox="0 0 13 9"><path d="M1.2 1.4 L6.5 6.8 L11.8 1.4" fill="none" stroke="#505050" stroke-width="2"/></svg>
<div class="w"><span class="t" style="left:57.90px;top:910.81px;font-size:14.8px;letter-spacing:-0.46px;color:#ff0000;">[14:53:23]</span> <span class="t" style="left:126.00px;top:910.81px;font-size:14.8px;letter-spacing:-0.54px;color:#ff0000;">[qRansacSD]</span> <span class="t" style="left:213.30px;top:910.81px;font-size:14.8px;letter-spacing:0.08px;color:#ff0000;">Segmentation</span> <span class="t" style="left:310.60px;top:910.81px;font-size:14.8px;letter-spacing:-0.21px;color:#ff0000;">failed...</span></div>
<div class="w"><span class="t" style="left:57.90px;top:932.81px;font-size:14.8px;letter-spacing:-0.46px;color:#ff0000;">[14:56:37]</span> <span class="t" style="left:126.00px;top:932.81px;font-size:14.8px;letter-spacing:-0.54px;color:#ff0000;">[qRansacSD]</span> <span class="t" style="left:213.30px;top:932.81px;font-size:14.8px;letter-spacing:0.08px;color:#ff0000;">Segmentation</span> <span class="t" style="left:310.60px;top:932.81px;font-size:14.8px;letter-spacing:-0.21px;color:#ff0000;">failed...</span></div>
<div class="w"><span class="t" style="left:57.90px;top:954.91px;font-size:14.8px;letter-spacing:-0.46px;color:#800000;">[14:56:53]</span> <span class="t" style="left:126.00px;top:954.91px;font-size:14.8px;letter-spacing:-0.54px;color:#800000;">[qRansacSD]</span> <span class="t" style="left:213.75px;top:954.91px;font-size:14.8px;letter-spacing:-0.02px;color:#800000;">Input</span> <span class="t" style="left:251.60px;top:954.91px;font-size:14.8px;letter-spacing:0.05px;color:#800000;">cloud</span> <span class="t" style="left:292.50px;top:954.91px;font-size:14.8px;letter-spacing:-1.20px;color:#800000;">has</span> <span class="t" style="left:318.75px;top:954.91px;font-size:14.8px;letter-spacing:-0.46px;color:#800000;">been</span> <span class="t" style="left:355.50px;top:954.91px;font-size:14.8px;letter-spacing:0.24px;color:#800000;">automtically</span> <span class="t" style="left:441.40px;top:954.91px;font-size:14.8px;letter-spacing:0.11px;color:#800000;">hidden!</span></div>
<div class="a" style="left:1846px;top:1004px;width:74px;height:1px;background:#a5a5a5"></div>
<!-- sec_taskbar -->
<svg width="0" height="0"><defs>
<linearGradient id="ke1" x1="0" y1="0" x2="1" y2="1"><stop offset="0" stop-color="#35c1f1"/><stop offset="0.5" stop-color="#1b9de2"/><stop offset="1" stop-color="#0c59a4"/></linearGradient>
<linearGradient id="ke2" x1="0" y1="1" x2="1" y2="0"><stop offset="0" stop-color="#2ea6e0"/><stop offset="0.6" stop-color="#38d08a"/><stop offset="1" stop-color="#7be05a"/></linearGradient>
<linearGradient id="kfo" x1="0" y1="0" x2="0" y2="1"><stop offset="0" stop-color="#ffd964"/><stop offset="1" stop-color="#f7c13a"/></linearGradient>
<pattern id="kgr" width="2" height="2" patternUnits="userSpaceOnUse"><rect width="2" height="2" fill="#d4d4d4"/><rect width="1" height="1" fill="#f4f4f4"/></pattern>
</defs></svg>
<div class="a" style="left:0;top:1030px;width:1920px;height:50px;background:#444"></div>
<div class="a" style="left:60px;top:1030px;width:430px;height:50px;background:#f2f2f2;border-top:1px solid #c4c4c4;border-bottom:1px solid #c4c4c4"></div>
<div class="t" style="left:110.40px;top:1044.97px;font-size:18.6px;letter-spacing:-0.03px;color:#1a1a1a;">Pesquisar qualquer coisa</div>
<svg style="left:75px;top:1044px" width="22" height="22" viewBox="0 0 22 22"><circle cx="13.2" cy="8.6" r="6" fill="none" stroke="#1a1a1a" stroke-width="1.5"/><path d="M8.8 12.8 L1.4 20.4" stroke="#1a1a1a" stroke-width="1.6"/></svg>
<svg style="left:20px;top:1045px" width="21" height="21" viewBox="0 0 21 21"><path d="M0 3 L8.6 1.8 V9.8 H0Z M9.8 1.6 L20.4 0 V9.8 H9.8Z M0 11 H8.6 V19 L0 17.8Z M9.8 11 H20.4 V20.6 L9.8 19.2Z" fill="#fff"/></svg>
<svg style="left:509px;top:1044px" width="22" height="22" viewBox="0 0 22 22"><circle cx="11" cy="11" r="8.6" fill="none" stroke="#fff" stroke-width="2.4"/></svg>
<svg style="left:569px;top:1044.5px" width="22" height="21" viewBox="0 0 22 21"><g fill="none" stroke="#fff" stroke-width="1.3"><rect x="1.6" y="6.4" width="11" height="7.4"/><path d="M1.6 4 V0.6 M1.6 2.2 H12.6 M12.6 4 V0.6 M1.6 16.4 V20 M1.6 18 H12.6 M12.6 16.4 V20 M19 0.6 V5.6 M19 10.6 V20"/></g><rect x="17.4" y="6.6" width="3.2" height="3" fill="#fff"/></svg>
<svg style="left:628px;top:1039px" width="32" height="32" viewBox="0 0 32 32"><circle cx="16" cy="16" r="15.4" fill="url(#ke1)"/><path d="M3 9 C8 1 20 -1 27 5 C32 10 32 17 27 20 C23 22 17 21.6 16.4 18.4 C16 16.6 18 15 18 13 C17 9 9 8 5.4 13 C3.6 16 3 20 5 24 C1 20 0 14 3 9Z" fill="url(#ke2)"/><path d="M8 18 C7 24 12 30 19 31 C24 31 28 28 30 25 C26 27 20 27 17 24 C14 21 14 17 16 15 C12 14 8.6 15 8 18Z" fill="#0e4f9c"/></svg>
<svg style="left:691.5px;top:1040.5px" width="29" height="29" viewBox="0 0 29 29"><circle cx="14.5" cy="14.5" r="14" fill="#dd4b3e"/><path d="M14.5 14.5 L2.4 7.6 A14 14 0 0 0 11 28 Z" fill="#1ea362"/><path d="M14.5 14.5 L11 28 A14 14 0 0 0 27.4 9 L14.5 9Z" fill="#fecd42"/><path d="M2.4 7.6 A14 14 0 0 1 27.4 9 L14.5 9 Z" fill="#dd4b3e"/><circle cx="14.5" cy="14.5" r="6.4" fill="#f4f4f4"/><circle cx="14.5" cy="14.5" r="5" fill="#4c8bf5"/></svg>
<svg style="left:754px;top:1042px" width="28" height="25" viewBox="0 0 28 25"><path d="M0.4 2 C0.4 1 1 0.6 2 0.6 H10.6 L12.8 2.6 H26 C27 2.6 27.6 3.2 27.6 4.2 V21.4 C27.6 22.4 27 23 26 23 H2 C1 23 0.4 22.4 0.4 21.4Z" fill="url(#kfo)"/><path d="M0.4 2 C0.4 1 1 0.6 2 0.6 H10.6 L12.8 2.6 H0.4Z" fill="#f0b010"/><rect x="0.4" y="2.6" width="12.6" height="1.4" fill="#f0b010"/><path d="M5.6 24 V15.4 C5.6 14 6.4 13.2 7.8 13.2 H20.4 C21.8 13.2 22.6 14 22.6 15.4 V24 H19 V17.4 H9.2 V24Z" fill="#3f9de6"/></svg>
<svg style="left:814.5px;top:1040.5px" width="30" height="29" viewBox="0 0 30 29"><path d="M7.6 2 C7.6 1 8.2 0.4 9.2 0.4 H28 C29 0.4 29.6 1 29.6 2 V7.6 H7.6Z" fill="#41a5ee"/><rect x="7.6" y="7.6" width="22" height="7" fill="#2b7cd3"/><rect x="7.6" y="14.6" width="22" height="7" fill="#185abd"/><path d="M7.6 21.6 H29.6 V26.4 C29.6 27.4 29 28 28 28 H9.2 C8.2 28 7.6 27.4 7.6 26.4Z" fill="#103f91"/><rect x="0.4" y="7" width="15.4" height="15" rx="1.2" fill="#185abd"/><text x="8.1" y="19.2" font-family="Liberation Sans, sans-serif" font-size="11.6" font-weight="700" fill="#fff" text-anchor="middle" opacity="0.99">W</text></svg>
<svg style="left:877px;top:1039.5px" width="31" height="31" viewBox="0 0 31 31"><circle cx="15.2" cy="15.2" r="15" fill="#1ed760"/><g fill="none" stroke="#0a0a0a" stroke-linecap="round"><path d="M6.6 10.8 C12.6 9 19.6 9.6 24.6 12.6" stroke-width="2.8"/><path d="M7.6 15.6 C12.6 14.2 18.6 14.8 22.8 17.2" stroke-width="2.3"/><path d="M8.6 20 C12.6 19 17.4 19.4 20.8 21.4" stroke-width="1.9"/></g></svg>
<div class="a" style="left:924px;top:1030px;width:61px;height:50px;background:#6b6b6b"></div>
<svg style="left:939px;top:1040px" width="30" height="30" viewBox="0 0 30 30"><rect width="30" height="30" fill="url(#kgr)"/><g fill="none" stroke="#0d5f96" stroke-width="3"><path d="M18 7.6 A9.6 9.6 0 1 0 18 22.4"/><path d="M26 7.6 A9.6 9.6 0 1 0 26 22.4"/></g></svg>
<div class="a" style="left:619px;top:1077px;width:40px;height:3px;background:#76b9ed"></div>
<div class="a" style="left:660px;top:1077px;width:10px;height:3px;background:#5b90c0"></div>
<div class="a" style="left:743px;top:1077px;width:51px;height:3px;background:#76b9ed"></div>
<div class="a" style="left:805px;top:1077px;width:40px;height:3px;background:#76b9ed"></div>
<div class="a" style="left:846px;top:1077px;width:10px;height:3px;background:#5b90c0"></div>
<div class="a" style="left:867px;top:1077px;width:51px;height:3px;background:#76b9ed"></div>
<div class="a" style="left:924px;top:1077px;width:61px;height:3px;background:#76b9ed"></div>
<svg style="left:1588px;top:1049px" width="18" height="11" viewBox="0 0 18 11"><path d="M1 9.6 L9 1.6 L17 9.6" fill="none" stroke="#fff" stroke-width="1.3"/></svg>
<svg style="left:1619px;top:1045px" width="18" height="20" viewBox="0 0 18 20"><g fill="none" stroke="#fff" stroke-width="1.2"><rect x="1.6" y="5.6" width="9.6" height="8.6" rx="1.6"/><path d="M11.2 8.6 L15.4 6.4 V13.6 L11.2 11.4"/><path d="M3 3.2 C5 1 9 1 11 3.2 M3 16.8 C5 19 9 19 11 16.8" opacity="0.85"/></g></svg>
<svg style="left:1646px;top:1047px" width="22" height="15" viewBox="0 0 22 15"><path d="M3.6 13.6 C0.6 13.6 0 9.6 3 8.6 C3 5.6 6.6 4.6 8.4 6.4 C10 2.4 16 2.8 16.8 7.4 C20.6 7.6 21.4 13 18 13.6Z" fill="#f4f4f4"/><path d="M8.4 6.4 C10 2.4 16 2.8 16.8 7.4 L10 10.6Z" fill="#cfcfcf"/><path d="M3 8.6 C3 5.6 6.6 4.6 8.4 6.4 L12 9.6 L5 11Z" fill="#e2e2e2"/></svg>
<svg style="left:1676px;top:1047px" width="22" height="15" viewBox="0 0 22 15"><g fill="none" stroke="#c9c9c9" stroke-width="1.1"><rect x="6.4" y="3.4" width="13.6" height="9.6"/><path d="M20 6.4 H21.4 V10 H20"/><path d="M9.6 5.4 L16 11 M16 5.4 L9.6 11" stroke="#f0f0f0"/></g><path d="M1.6 2 V4.6 M4.6 2 V4.6 M0.8 4.6 H5.4 V7 C5.4 8 4.4 9 3.1 9 C1.8 9 0.8 8 0.8 7Z M3.1 9 V13.6" fill="none" stroke="#f4f4f4" stroke-width="1.1"/></svg>
<svg style="left:1708px;top:1046px" width="20" height="19" viewBox="0 0 20 19"><g fill="none" stroke="#e6e6e6" stroke-width="1.2"><path d="M2 16.6 C2 8.6 8.6 2 16.6 2"/><path d="M6.4 16.6 C6.4 11 11 6.4 16.6 6.4" /><path d="M10.8 16.6 C10.8 13.4 13.4 10.8 16.6 10.8"/></g><circle cx="15.6" cy="15.8" r="1.6" fill="#fff"/></svg>
<svg style="left:1736px;top:1045px" width="24" height="21" viewBox="0 0 24 21"><path d="M1.4 7.6 H4.4 L8.6 3.4 V17.6 L4.4 13.4 H1.4Z" fill="none" stroke="#fff" stroke-width="1.2"/><g fill="none" stroke-width="1.1"><path d="M11.4 7.6 C12.8 9.4 12.8 11.6 11.4 13.4" stroke="#fff"/><path d="M14.4 5.4 C16.8 8.4 16.8 12.6 14.4 15.6" stroke="#d0d0d0"/><path d="M17.6 3 C21 7.4 21 13.6 17.6 18" stroke="#8a8a8a"/></g></svg>
<div class="t" style="left:1790.90px;top:1035.12px;font-size:15px;letter-spacing:-0.96px;color:#fff;">14:58</div>
<div class="t" style="left:1770.00px;top:1058.42px;font-size:15px;letter-spacing:-0.04px;color:#fff;">27/05/2021</div>
<svg style="left:1868px;top:1044px" width="32" height="32" viewBox="0 0 32 32"><path d="M1 1 H21 V15.6 H8 L4.6 19 V15.6 H1Z" fill="#fff"/><path d="M4 5 H18 M4 8.4 H18 M4 11.8 H18" stroke="#444" stroke-width="1.1"/><circle cx="20.4" cy="20.6" r="10" fill="#3f3f3f" stroke="#8c8c8c" stroke-width="1"/><text x="20.4" y="25.4" font-family="Liberation Sans, sans-serif" font-size="13.4" font-weight="700" fill="#fff" text-anchor="middle" opacity="0.99">3</text></svg>
<div class="a" style="left:1914px;top:1030px;width:1px;height:50px;background:#7a7a7a"></div>
</body></html>
